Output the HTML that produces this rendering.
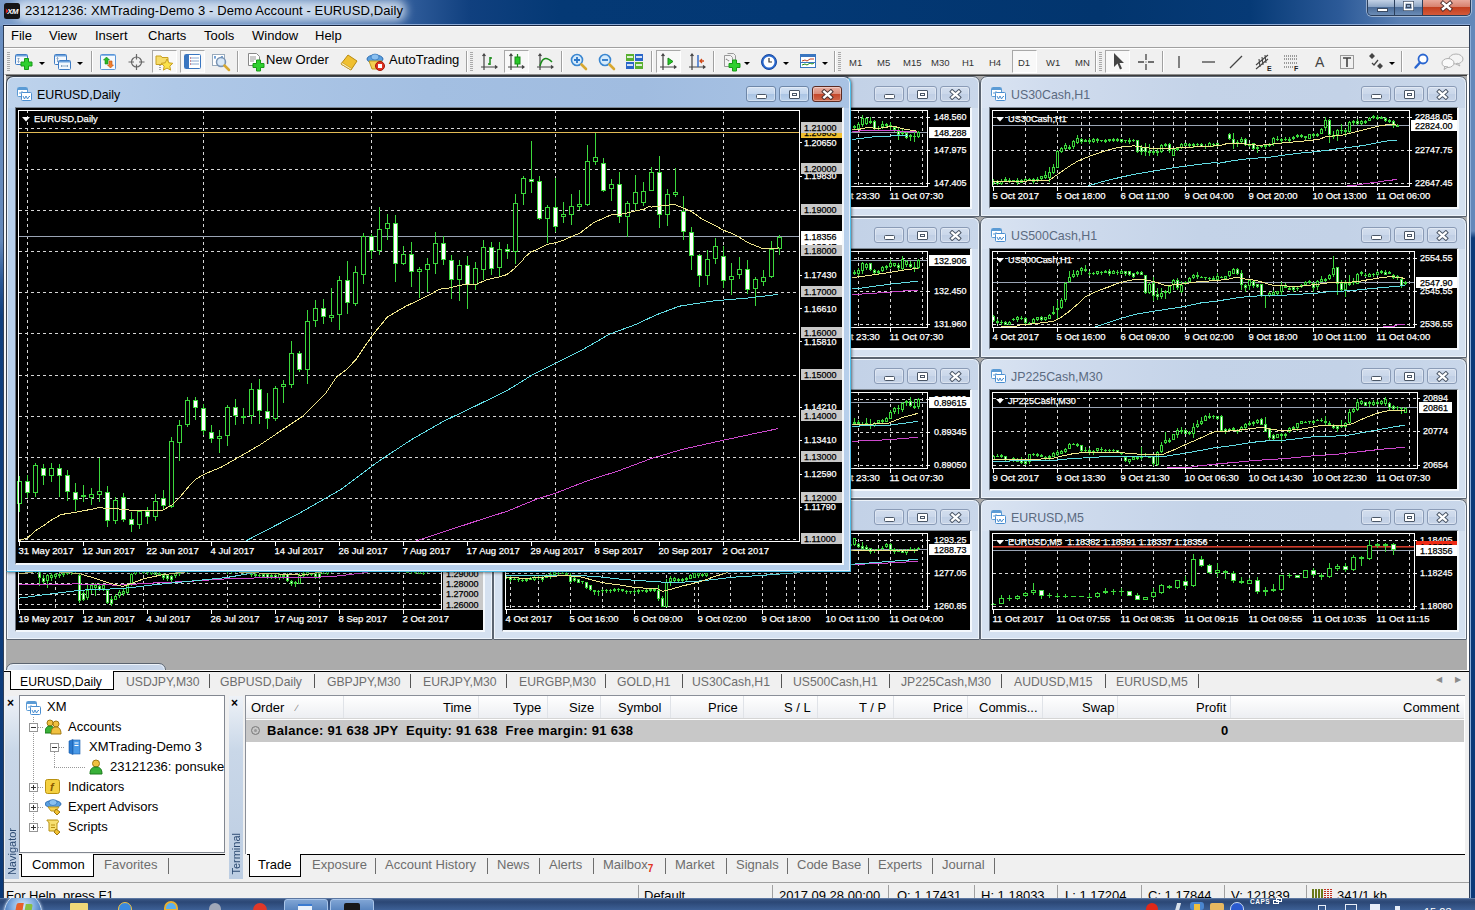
<!DOCTYPE html><html><head><meta charset="utf-8"><title>23121236: XMTrading-Demo 3 - Demo Account - EURUSD,Daily</title><style>*{box-sizing:border-box;margin:0;padding:0}
html,body{width:1475px;height:910px;overflow:hidden}
body{position:relative;font-family:"Liberation Sans",sans-serif;font-size:13px;color:#000;background:#123e7c}
#tb{position:absolute;left:0;top:0;width:1475px;height:26px;background:linear-gradient(90deg,#7a9cca 0,#6a8fc2 150px,#5880b6 300px,#34609e 400px,#10407f 470px,#043975 560px,#033874 800px,#02356e 1100px,#063a76 1250px,#2c5a98 1340px,#5a80b4 1400px,#6388ba 1475px);overflow:hidden}
#tb .bl{position:absolute;left:3px;top:24px;width:1467px;height:2px;background:linear-gradient(#8eabd6 0,#8eabd6 1px,#18253e 1px)}
#tb .glow{position:absolute;left:14px;top:0px;width:392px;height:21px;border-radius:9px;background:rgba(236,243,251,.78);filter:blur(5px)}
#tb .ico{position:absolute;left:4px;top:3px}
#tb .tt{position:absolute;left:25px;top:3px;letter-spacing:.09px;font-size:13px;line-height:16px;white-space:nowrap;color:#000}
#wb{position:absolute;left:1367px;top:0;width:104px;height:16px;border:1px solid #2b3f5c;border-top:none;border-radius:0 0 5px 5px;overflow:hidden;box-shadow:0 0 0 1px rgba(255,255,255,.45)}
#wb div{position:absolute;top:0;height:15px}
#wb .w1{left:0;width:27px;background:linear-gradient(#c3d2e6 0,#8da6c6 45%,#4c6d99 50%,#6b8cb6 100%);border-right:1px solid #2b3f5c}
#wb .w2{left:27px;width:28px;background:linear-gradient(#c3d2e6 0,#8da6c6 45%,#4c6d99 50%,#6b8cb6 100%);border-right:1px solid #2b3f5c}
#wb .w3{left:55px;width:47px;background:linear-gradient(#e9a99b 0,#d8816d 45%,#c23f1f 50%,#d4593a 100%)}
#lb{position:absolute;left:0;top:26px;width:4px;height:884px;background:linear-gradient(#6a8fc2 0,#6388ba 215px,#2a5896 255px,#0f3f7e 290px,#0c3a78 100%)}
#lb:after{content:'';position:absolute;left:3px;top:0;width:1px;height:884px;background:#2f3f58}
#rb{position:absolute;left:1469px;top:26px;width:6px;height:884px;background:linear-gradient(#6388ba 0,#6388ba 205px,#0c3a78 212px,#0c3a78 100%)}
#rb:after{content:'';position:absolute;left:0;top:0;width:2px;height:884px;background:linear-gradient(90deg,#2f3f58 0,#2f3f58 1px,#8fb0da 1px)}
#menu{position:absolute;left:4px;top:26px;width:1465px;height:22px;background:#f0f0f0;border-top:1px solid #fff;border-bottom:1px solid #a0a0a0}
#menu span{position:absolute;top:1px;line-height:16px;font-size:13px}
#tool{position:absolute;left:4px;top:48px;width:1465px;height:26px;background:#f0f0f0;border-top:1px solid #fff}
#tool .sep{position:absolute;top:2px;width:1px;height:21px;background:#a0a0a0;box-shadow:1px 0 0 #fff}
#tool .grip{position:absolute;top:3px;width:3px;height:20px;background:repeating-linear-gradient(#aaa 0,#aaa 1px,transparent 1px,transparent 2px)}
#tool .prs{position:absolute;top:1px;height:23px;border:1px solid #a8a8a8;border-right-color:#fff;border-bottom-color:#fff;background:#f8f8f8}
#tool .lbl{position:absolute;top:3px;font-size:13px;line-height:16px;white-space:nowrap}
#tool .tf{position:absolute;top:8px;font-size:9.5px;line-height:12px;color:#333;white-space:nowrap}
#tool svg{position:absolute;overflow:visible}
#tool .dd{position:absolute;top:13px;width:0;height:0;border:3px solid transparent;border-top:3px solid #000;border-bottom:none}
#mdi{position:absolute;left:4px;top:74px;width:1465px;height:596px;background:#ababab;border-top:1px solid #8c8c8c;border-left:2px solid #f6f6f6;border-right:2px solid #fff;box-shadow:inset 0 1px 0 #3c3c3c;overflow:hidden}
.cw{position:absolute;border:1px solid #5b6470;border-radius:7px 7px 1px 1px;background:linear-gradient(90deg,#dae4f2 0,#d0dcee 14%,#c4d3e8 45%,#c3d2e7 75%,#c9d7ea 100%) top/100% 31px no-repeat,#d5e1f0;box-shadow:inset 0 0 0 1px #edf3fa}
.cw.act{border-color:#39424e #4fc0ea #4fc0ea #39424e;background:linear-gradient(90deg,#bed3ec 0,#afc8e7 20%,#a3bfe2 50%,#a0bce0 75%,#a9c3e4 100%) top/100% 31px no-repeat,#b7cfeb;box-shadow:inset 0 0 0 1px #e4eefa,1px 1px 3px rgba(0,0,0,.5)}
.cwi{position:absolute;left:10px;top:9px;width:16px;height:16px}
.cwi svg{display:block}
.cwt{position:absolute;left:30px;top:10px;font-size:12.4px;line-height:16px;color:#5b6a80;white-space:nowrap}
.cw.act .cwt{color:#000}
.cb{position:absolute;top:9px;width:30px;height:16px;border:1px solid #8a9bb6;border-radius:3px;background:linear-gradient(#d3deee 0,#cad7ea 50%,#c0cfe5 51%,#c8d5e8 100%);box-shadow:inset 0 0 0 1px rgba(255,255,255,.35)}
.cw.act .cb{border-color:#6e87a8;background:linear-gradient(#d4e2f3 0,#c3d6ee 50%,#aac4e4 51%,#bcd2ec 100%)}
.cw.act .b3{border-color:#5a2a22;background:linear-gradient(#e8b0a4 0,#d98a78 50%,#c4462a 51%,#d0684c 100%)}
.b1{right:75px}.b2{right:42px}.b3{right:9px}
.main .b1{right:74px}.main .b2{right:41px}.main .b3{right:8px}
.cb i{position:absolute;display:block}
.cb .mn{left:9px;top:7px;width:11px;height:5px;border:1px solid #4a5666;background:#fff;border-radius:1.500px}
.cb .mx{left:9px;top:3px;width:11px;height:9px;border:1px solid #4a5666;background:#fff;border-radius:1px;box-shadow:inset 0 0 0 2px #fff,inset 0 0 0 3px #4a5666}
.cb svg{position:absolute;left:8px;top:2px}
.cv{position:absolute;left:8px;top:30px;right:7px;bottom:7px;background:#000;border:1px solid #6b7480;border-top-color:#7d8792;border-right:2px solid #f4f8fc;border-bottom:2px solid #f4f8fc;overflow:hidden}
.main .cv{right:6px;bottom:6px}
.cv svg{display:block;position:absolute;left:0;top:0}
svg text{font-family:"Liberation Sans",sans-serif}
#tabs{position:absolute;left:4px;top:670px;width:1465px;height:23px;background:#f0f0f0;border-top:1px solid #fff}
#tabs .line{position:absolute;left:0;top:0;width:1465px;height:1px;background:#000}
#tabs span{position:absolute;top:3px;font-size:12.2px;line-height:16px;color:#6d6d6d;white-space:nowrap}
#tabs i{position:absolute;top:3px;width:1px;height:14px;background:#555}
#tabs .at{position:absolute;left:6px;top:0;width:104px;height:19px;background:#fff;border:1px solid #000;border-top:none;}
#tabs .at span{color:#000;left:9px;top:3px}
#bot{position:absolute;left:4px;top:693px;width:1465px;height:189px;background:#f0f0f0}
.vstrip{position:absolute;top:3px;width:14px;height:183px;background:linear-gradient(#eef2f7,#c9d7e8 30%,#bccde2);}
.vstrip .x{position:absolute;left:2px;top:1px;font-size:12px;font-weight:bold;line-height:12px;color:#000}
.vstrip .vt{position:absolute;left:0;bottom:4px;width:14px;writing-mode:vertical-rl;transform:rotate(180deg);font-size:11px;color:#2c4a72;line-height:14px;white-space:nowrap}
#nav{position:absolute;left:15px;top:2px;width:206px;height:158px;background:#fff;border:1px solid #828790}
#nav .r{position:absolute;font-size:13px;line-height:16px;white-space:nowrap}
#nav svg{position:absolute}
#navtabs{position:absolute;left:15px;top:161px;width:206px;height:24px}
.btabs span{position:absolute;top:3px;font-size:13px;line-height:16px;color:#6d6d6d;white-space:nowrap}
.btabs i{position:absolute;top:4px;width:1px;height:16px;background:#6d6d6d}
.btabs .at{position:absolute;top:0;height:23px;background:#fff;border:1px solid #000;border-top:none}
.btabs .at span{color:#000;top:3px}
.btabs .ln{position:absolute;top:0;height:1px;background:#000}
#term{position:absolute;left:241px;top:2px;width:1220px;height:159px;background:#fff;border-left:1px solid #8a8f98;border-top:1px solid #8a8f98}
#term .hd{position:absolute;left:0;top:0;width:1218px;height:23px;background:linear-gradient(#fff,#f4f5f7 60%,#eceef2);border-bottom:1px solid #d5d5d5}
#term .hd span{position:absolute;top:4px;font-size:13px;line-height:16px;white-space:nowrap}
#term .hd i{position:absolute;top:0;width:1px;height:22px;background:#e0e3e8}
#term .row{position:absolute;left:0;top:24px;width:1218px;height:22px;background:#c8c8c8;font-weight:bold}
#term .row span{position:absolute;top:3px;font-size:13px;line-height:16px;white-space:pre;letter-spacing:.3px}
#termtabs{position:absolute;left:243px;top:161px;width:1218px;height:24px}
#status{position:absolute;left:4px;top:882px;width:1465px;height:16px;background:#f0f0f0;border-top:1px solid #a0a0a0;overflow:hidden}
#status span{position:absolute;top:5px;font-size:13px;line-height:16px;white-space:nowrap}
#status i{position:absolute;top:2px;width:1px;height:16px;background:#a0a0a0}
#task{position:absolute;left:0;top:898px;width:1475px;height:12px;background:linear-gradient(#7d98c0 0,#3a5684 1px,#2b4775 4px,#3d6096 100%);overflow:hidden}
#task div{position:absolute}
</style></head><body>
<div id="tb"><div class="glow"></div><div class="bl"></div><svg class="ico" width="16" height="16" viewBox="0 0 16 16"><rect width="16" height="16" rx="2.500" fill="#151517"/><path d="M1.800 5.500L4.600 8L1.800 10.500z" fill="#e02820"/><text x="8.600" y="10.800" text-anchor="middle" font-size="7.800" font-weight="bold" font-style="italic" fill="#fff" letter-spacing="-.6" font-family="Liberation Sans,sans-serif">XM</text></svg><div class="tt">23121236: XMTrading-Demo 3 - Demo Account - EURUSD,Daily</div>
<div id="wb"><div class="w1"><svg width="27" height="15"><rect x="9.5" y="8.5" width="10" height="3" fill="#fff" stroke="#3a4a62"/></svg></div><div class="w2"><svg width="28" height="15"><rect x="8.500" y="1.500" width="10" height="9" fill="none" stroke="#3a4a62"/><rect x="9.500" y="2.500" width="8" height="7" fill="none" stroke="#fff" stroke-width="1.6"/><rect x="11.500" y="4.500" width="4" height="3" fill="none" stroke="#3a4a62"/></svg></div><div class="w3"><svg width="47" height="15"><path d="M20 3 L27 9 M27 3 L20 9" stroke="#4a2a2a" stroke-width="4.200" stroke-linecap="square"/><path d="M20 3 L27 9 M27 3 L20 9" stroke="#fff" stroke-width="2.400" stroke-linecap="square"/></svg></div></div>
</div>
<div id="lb"></div><div id="rb"></div>
<div id="menu"><span style="left:7px">File</span><span style="left:45px">View</span><span style="left:91px">Insert</span><span style="left:144px">Charts</span><span style="left:200px">Tools</span><span style="left:248px">Window</span><span style="left:311px">Help</span></div>
<div id="tool"><div class="grip" style="left:3px"></div><svg style="left:11px;top:4px" width="18" height="18" viewBox="0 0 18 18"><rect x="0.5" y="1.500" width="12" height="10" rx="1" fill="#f4f8fd" stroke="#3f7cc4"/><rect x="1" y="2" width="11" height="1.500" fill="#6aa0dc"/><path d="M3.500 5v4.500M2.500 6l1-1 1 1M2.500 8.500l1 1 1-1" stroke="#7a98b8" fill="none" stroke-width=".8"/><path d="M6 9h3.500v-3.500h4v3.500h3.500v4h-3.500v3.500h-4v-3.500h-3.500z" fill="#2fd02f" stroke="#189a18" stroke-width="1"/></svg><div class="dd" style="left:35px"></div><svg style="left:50px;top:4px" width="18" height="18" viewBox="0 0 18 18"><rect x="0.5" y="1.500" width="12" height="10" rx="1" fill="#f4f8fd" stroke="#3f7cc4"/><rect x="1" y="2" width="11" height="1.500" fill="#6aa0dc"/><path d="M3.500 4.500v4M2.500 5.500l1-1 1 1M3 8.500h7M9 7.500l1 1-1 1" stroke="#7a98b8" fill="none" stroke-width=".8"/><rect x="4.500" y="7.500" width="12" height="9" rx="1" fill="#f4f8fd" stroke="#3f7cc4"/><rect x="5" y="8" width="11" height="1.500" fill="#6aa0dc"/><path d="M7 13h7M8 12l-1 1 1 1M13 12l1 1-1 1" stroke="#7a98b8" fill="none" stroke-width=".8"/></svg><div class="dd" style="left:73px"></div><div class="sep" style="left:87px"></div><svg style="left:96px;top:4px" width="18" height="18" viewBox="0 0 18 18"><rect x="0.5" y="1.500" width="15" height="15" rx="1" fill="#f4f9fe" stroke="#5a96d8"/><rect x="1" y="2" width="14" height="1" fill="#8ab6e8"/><path d="M5 11V7H3.500L6.500 4l3 3H8v4z" fill="#28b828" stroke="#158a15" stroke-width=".6"/><path d="M9 8v4H7.500l3 3 3-3H12V8z" fill="#f08030" stroke="#c05010" stroke-width=".6"/></svg><svg style="left:124px;top:4px" width="18" height="18" viewBox="0 0 18 18"><circle cx="8.500" cy="9" r="5" fill="none" stroke="#666" stroke-width="1.200"/><path d="M8.500 1v5.500M8.500 11.500v5.500M0.500 9h5.500M11 9h5.500" stroke="#666" stroke-width="1.200"/></svg><div class="prs" style="left:148px;width:25px"></div><svg style="left:151px;top:4px" width="20" height="18" viewBox="0 0 20 18"><path d="M1 3h5l1 1.500h6v7H1z" fill="#f6dc6a" stroke="#c8a020"/><path d="M5 12v5" stroke="#555" stroke-dasharray="1 1"/><path d="M12 6l1.800 3.800 4 .500-3 2.800.800 4-3.600-2-3.600 2 .800-4-3-2.800 4-.500z" fill="#fbe24a" stroke="#c8a020"/></svg><div class="prs" style="left:176px;width:25px"></div><svg style="left:180px;top:4px" width="18" height="18" viewBox="0 0 18 18"><rect x="0.5" y="1.500" width="16" height="14" rx="1" fill="#fff" stroke="#3a76c0"/><rect x="1" y="2" width="4" height="13" fill="#3a76c0"/><path d="M6 5h9M6 8h9M6 11h9" stroke="#8aa8d0"/><path d="M6 5h1M6 8h1M6 11h1" stroke="#d04040"/></svg><svg style="left:208px;top:4px" width="19" height="19" viewBox="0 0 19 19"><rect x="0.5" y="1.500" width="12" height="11" fill="#fff" stroke="#9ab"/><path d="M2 4h2M9 4h2M3 3v3M10 3v3" stroke="#4a86c8"/><circle cx="9" cy="9" r="4.500" fill="#cfe3f8" fill-opacity=".8" stroke="#7a94b4" stroke-width="1.500"/><path d="M12.500 12.500l4.500 4.500" stroke="#d8a830" stroke-width="2.500" stroke-linecap="round"/></svg><div class="sep" style="left:233px"></div><svg style="left:243px;top:3px" width="18" height="20" viewBox="0 0 18 20"><path d="M1.500 1.500h8l3 3v9h-11z" fill="#fff" stroke="#888"/><path d="M3 5h6M3 7h6M3 9h4" stroke="#999"/><path d="M6 11.500h3.500v-3.500h4v3.500h3.500v4h-3.500v3.500h-4v-3.500h-3.500z" fill="#2fd02f" stroke="#189a18"/></svg><div class="lbl" style="left:262px">New Order</div><svg style="left:336px;top:4px" width="18" height="18" viewBox="0 0 18 18"><path d="M1 11L8 2l9 6-6 9z" fill="#f0c030" stroke="#b88a10"/><path d="M1 11l10 6 .5 -1.500L2 9.500z" fill="#fff4c0" stroke="#b88a10" stroke-width=".6"/></svg><svg style="left:363px;top:4px" width="19" height="19" viewBox="0 0 19 19"><ellipse cx="8" cy="6" rx="8" ry="4" fill="#5aa0e0" stroke="#2a6ab0"/><ellipse cx="8" cy="4" rx="4" ry="3" fill="#8ac0f0" stroke="#2a6ab0" stroke-width=".6"/><path d="M2 8l3 8h7l3-8z" fill="#f4d050" stroke="#c09a20"/><circle cx="13" cy="13" r="4.500" fill="#e03020" stroke="#a01808"/><rect x="11" y="11" width="4" height="4" fill="#fff"/></svg><div class="lbl" style="left:385px">AutoTrading</div><div class="sep" style="left:462px"></div><div class="grip" style="left:466px"></div><svg style="left:477px;top:4px" width="18" height="18" viewBox="0 0 18 18"><path d="M3 1v16M0 14h16M1.500 3L3 1l1.500 2M14 12.500l2 1.500-2 1.500" fill="none" stroke="#444" stroke-width="1.200"/><path d="M9 4v8M9 5h2M7 11h2" stroke="#1a8a1a" stroke-width="1.500" fill="none"/></svg><div class="prs" style="left:500px;width:25px"></div><svg style="left:504px;top:4px" width="18" height="18" viewBox="0 0 18 18"><path d="M3 1v16M0 14h16M1.500 3L3 1l1.500 2M14 12.500l2 1.500-2 1.500" fill="none" stroke="#444" stroke-width="1.200"/><path d="M9.500 1v13" stroke="#1a8a1a" stroke-width="1.200"/><rect x="7" y="4" width="5" height="7" fill="#28c828" stroke="#1a8a1a"/></svg><svg style="left:533px;top:4px" width="18" height="18" viewBox="0 0 18 18"><path d="M3 1v16M0 14h16M1.500 3L3 1l1.500 2M14 12.500l2 1.500-2 1.500" fill="none" stroke="#444" stroke-width="1.200"/><path d="M3 13C5 5 9 3 15 9" fill="none" stroke="#1a8a1a" stroke-width="1.500"/></svg><div class="sep" style="left:557px"></div><svg style="left:566px;top:4px" width="18" height="18" viewBox="0 0 18 18"><circle cx="7" cy="7" r="5.500" fill="#d6ebfb" stroke="#3a86d0" stroke-width="1.600"/><path d="M4 7h6M7 4v6" stroke="#2a76c8" stroke-width="1.800"/><path d="M11.500 11.500l4.500 4.500" stroke="#d8a830" stroke-width="2.600" stroke-linecap="round"/></svg><svg style="left:594px;top:4px" width="18" height="18" viewBox="0 0 18 18"><circle cx="7" cy="7" r="5.500" fill="#d6ebfb" stroke="#3a86d0" stroke-width="1.600"/><path d="M4 7h6" stroke="#2a76c8" stroke-width="1.800"/><path d="M11.500 11.500l4.500 4.500" stroke="#d8a830" stroke-width="2.600" stroke-linecap="round"/></svg><svg style="left:622px;top:4px" width="18" height="18" viewBox="0 0 18 18"><rect x="0" y="1" width="8" height="7" fill="#58b030"/><rect x="9" y="1" width="8" height="7" fill="#2a66c8"/><rect x="0" y="9" width="8" height="7" fill="#2a66c8"/><rect x="9" y="9" width="8" height="7" fill="#58b030"/><path d="M1 4h6M10 4h6M1 12h6M10 12h6" stroke="#fff" stroke-width="2" stroke-opacity=".8"/></svg><div class="sep" style="left:647px"></div><div class="prs" style="left:652px;width:25px"></div><svg style="left:656px;top:4px" width="18" height="18" viewBox="0 0 18 18"><path d="M3 1v16M0 14h16M1.500 3L3 1l1.500 2M14 12.500l2 1.500-2 1.500" fill="none" stroke="#444" stroke-width="1.200"/><path d="M8 5l5 3.500-5 3.500z" fill="#28c828" stroke="#1a8a1a"/></svg><svg style="left:685px;top:4px" width="18" height="18" viewBox="0 0 18 18"><path d="M3 1v16M0 14h16M1.500 3L3 1l1.500 2M14 12.500l2 1.500-2 1.500" fill="none" stroke="#444" stroke-width="1.200"/><path d="M9 2v12" stroke="#2a66c8" stroke-width="1.400"/><path d="M15 8h-4M13 6l-2 2 2 2" stroke="#d04818" stroke-width="1.300" fill="none"/></svg><div class="sep" style="left:709px"></div><svg style="left:719px;top:3px" width="18" height="20" viewBox="0 0 18 20"><path d="M1.500 3.500h6l2 2v9h-8z" fill="#f4f4f4" stroke="#999"/><path d="M4.500 1.500h6l2 2v9" fill="none" stroke="#999"/><path d="M3 8c1-3 2 3 3 0" stroke="#777" fill="none"/><path d="M6 11.500h3.500v-3.500h4v3.500h3.500v4h-3.500v3.500h-4v-3.500h-3.500z" fill="#2fd02f" stroke="#189a18"/></svg><div class="dd" style="left:740px"></div><svg style="left:757px;top:4px" width="18" height="18" viewBox="0 0 18 18"><circle cx="8" cy="9" r="7.500" fill="#2a6ad0" stroke="#1a4aa0"/><circle cx="8" cy="9" r="5.500" fill="#fff"/><path d="M8 5v4h3" stroke="#333" fill="none" stroke-width="1.200"/></svg><div class="dd" style="left:779px"></div><svg style="left:796px;top:4px" width="18" height="18" viewBox="0 0 18 18"><rect x="0.5" y="1.500" width="15" height="13" fill="#fff" stroke="#3a76c0"/><rect x="1" y="2" width="14" height="2" fill="#3a76c0"/><path d="M2 8l3-1 2 1 3-2 4 0" stroke="#c04020" fill="none"/><path d="M2 12l3-1 2 1 3-2 2 1 2-1" stroke="#1a8a1a" fill="none"/><path d="M1 9.500h14" stroke="#3a76c0"/></svg><div class="dd" style="left:818px"></div><div class="sep" style="left:830px"></div><div class="grip" style="left:834px"></div><div class="tf" style="left:845px">M1</div><div class="tf" style="left:873px">M5</div><div class="tf" style="left:899px">M15</div><div class="tf" style="left:927px">M30</div><div class="tf" style="left:958px">H1</div><div class="tf" style="left:985px">H4</div><div class="prs" style="left:1008px;width:25px"></div><div class="tf" style="left:1014px">D1</div><div class="tf" style="left:1042px">W1</div><div class="tf" style="left:1071px">MN</div><div class="sep" style="left:1091px"></div><div class="grip" style="left:1095px"></div><div class="prs" style="left:1101px;width:25px"></div><svg style="left:1109px;top:4px" width="12" height="18" viewBox="0 0 12 18"><path d="M1 0v14l3.500-3.500 2.500 6 2-1-2.500-5.500h4.500z" fill="#444"/></svg><svg style="left:1134px;top:4px" width="18" height="18" viewBox="0 0 18 18"><path d="M8 1v6M8 11v6M0 9h6M10 9h6" stroke="#444" stroke-width="1.300"/><path d="M8 8.500v1" stroke="#444"/></svg><div class="sep" style="left:1158px"></div><svg style="left:1174px;top:4px" width="3" height="18" viewBox="0 0 3 18"><path d="M1 3v12" stroke="#444" stroke-width="1.300"/></svg><svg style="left:1198px;top:4px" width="13" height="18" viewBox="0 0 13 18"><path d="M0 9h13" stroke="#444" stroke-width="1.300"/></svg><svg style="left:1225px;top:4px" width="14" height="18" viewBox="0 0 14 18"><path d="M1 15L13 3" stroke="#444" stroke-width="1.300"/></svg><svg style="left:1251px;top:4px" width="18" height="19" viewBox="0 0 18 19"><path d="M1 12L13 2M1 16L13 6" stroke="#444" stroke-width="1.100"/><path d="M4 6l1 8M7 4l1 8M10 2l1 8" stroke="#444" stroke-width="1.100"/><text x="12" y="18" font-size="7" font-weight="bold" fill="#222">E</text></svg><svg style="left:1279px;top:4px" width="18" height="19" viewBox="0 0 18 19"><path d="M1 3h13M1 6h13M1 10h13M1 14h9" stroke="#444" stroke-dasharray="1 1"/><text x="11" y="18" font-size="7" font-weight="bold" fill="#222">F</text></svg><div class="lbl" style="left:1311px;top:5px;font-size:14px;color:#444">A</div><svg style="left:1336px;top:4px" width="15" height="18" viewBox="0 0 15 18"><rect x="0.5" y="2.500" width="13" height="13" fill="none" stroke="#444" stroke-dasharray="1 1"/><path d="M3 5h8M7 5v9" stroke="#444" stroke-width="1.600"/></svg><svg style="left:1364px;top:4px" width="16" height="18" viewBox="0 0 16 18"><path d="M4 0l3 3h-6zM4 6l-3-3h6z" fill="#444"/><path d="M12 10l3 3h-6zM12 16l-3-3h6z" fill="#444"/><path d="M4 10l2 2 4-5" stroke="#444" fill="none" stroke-width="1.300"/></svg><div class="dd" style="left:1385px"></div><div class="sep" style="left:1397px"></div><svg style="left:1410px;top:4px" width="15" height="18" viewBox="0 0 15 18"><circle cx="9" cy="6" r="4.500" fill="#fff" stroke="#2a66d0" stroke-width="1.800"/><path d="M6 9.500L1.500 14.500" stroke="#2a66d0" stroke-width="2.400" stroke-linecap="round"/></svg><svg style="left:1437px;top:4px" width="24" height="18" viewBox="0 0 24 18"><ellipse cx="15" cy="6" rx="7" ry="5" fill="#f4f4f4" stroke="#b0b0b0"/><path d="M17 10l2 3-4-2z" fill="#f4f4f4" stroke="#b0b0b0"/><ellipse cx="7" cy="10" rx="6" ry="4.500" fill="#fafafa" stroke="#b0b0b0"/><path d="M4 13.500l-1 3 4-2.500z" fill="#fafafa" stroke="#b0b0b0"/></svg></div>

<div id="mdi">
<div class="cw " style="left:487px;top:1px;width:487px;height:141px">
<div class="cwi"><svg width="16" height="16" viewBox="0 0 16 16"><rect x="0.5" y="1.500" width="10" height="9" rx="1" fill="#fff" stroke="#5b9bd5"/><rect x="1" y="2" width="9" height="2" fill="#5b9bd5"/><path d="M2 7h2l1-1.500 1 2.500 1-1h2" fill="none" stroke="#5b9bd5"/><rect x="4.500" y="6.500" width="10" height="8" rx="1" fill="#fff" stroke="#4a8ed0"/><path d="M6 10l1.500 3 1.500-3 1.500 3 1.500-2.500h1" fill="none" stroke="#4a8ed0"/></svg></div><div class="cwt">USDJPY,M30</div>
<div class="cb b1"><i class="mn"></i></div><div class="cb b2"><i class="mx"></i></div><div class="cb b3"><svg width="13" height="11" viewBox="0 0 13 11"><path d="M3.200 2.600L9.800 8.400M9.800 2.600L3.200 8.400" stroke="#4a5666" stroke-width="4.200" stroke-linecap="square"/><path d="M3.200 2.600L9.800 8.400M9.800 2.600L3.200 8.400" stroke="#fff" stroke-width="2.300" stroke-linecap="square"/></svg></div>
<div class="cv"><svg width="467" height="99" viewBox="503 108 467 99"><g shape-rendering="crispEdges" fill="none"><path d="M506 117.5H927" stroke="#d6d6d6" stroke-width="1" stroke-dasharray="3 3"/><path d="M506 150.5H927" stroke="#d6d6d6" stroke-width="1" stroke-dasharray="3 3"/><path d="M506 183.5H927" stroke="#d6d6d6" stroke-width="1" stroke-dasharray="3 3"/><path d="M538.5 111V186" stroke="#d6d6d6" stroke-width="1" stroke-dasharray="3 3" stroke-dashoffset="1"/><path d="M570.5 111V186" stroke="#d6d6d6" stroke-width="1" stroke-dasharray="3 3" stroke-dashoffset="1"/><path d="M602.5 111V186" stroke="#d6d6d6" stroke-width="1" stroke-dasharray="3 3" stroke-dashoffset="1"/><path d="M634.5 111V186" stroke="#d6d6d6" stroke-width="1" stroke-dasharray="3 3" stroke-dashoffset="1"/><path d="M666.5 111V186" stroke="#d6d6d6" stroke-width="1" stroke-dasharray="3 3" stroke-dashoffset="1"/><path d="M698.5 111V186" stroke="#d6d6d6" stroke-width="1" stroke-dasharray="3 3" stroke-dashoffset="1"/><path d="M730.5 111V186" stroke="#d6d6d6" stroke-width="1" stroke-dasharray="3 3" stroke-dashoffset="1"/><path d="M762.5 111V186" stroke="#d6d6d6" stroke-width="1" stroke-dasharray="3 3" stroke-dashoffset="1"/><path d="M794.5 111V186" stroke="#d6d6d6" stroke-width="1" stroke-dasharray="3 3" stroke-dashoffset="1"/><path d="M826.5 111V186" stroke="#d6d6d6" stroke-width="1" stroke-dasharray="3 3" stroke-dashoffset="1"/><path d="M858.5 111V186" stroke="#d6d6d6" stroke-width="1" stroke-dasharray="3 3" stroke-dashoffset="1"/><path d="M890.5 111V186" stroke="#d6d6d6" stroke-width="1" stroke-dasharray="3 3" stroke-dashoffset="1"/><path d="M922.5 111V186" stroke="#d6d6d6" stroke-width="1" stroke-dasharray="3 3" stroke-dashoffset="1"/><path d="M506 132.5H927" stroke="#9aa4b4" stroke-width="1"/></g><g shape-rendering="crispEdges"><path d="M854.5 125V129" stroke="#3cd83c"/><rect x="853.5" y="126.5" width="2" height="1" fill="#000" stroke="#3cd83c"/><path d="M858.5 122V129" stroke="#3cd83c"/><rect x="857.5" y="124.5" width="2" height="4" fill="#000" stroke="#3cd83c"/><path d="M862.5 115V127" stroke="#3cd83c"/><rect x="861.5" y="118.5" width="2" height="6" fill="#000" stroke="#3cd83c"/><path d="M866.5 118V125" stroke="#3cd83c"/><rect x="865.5" y="118.5" width="2" height="5" fill="#000" stroke="#3cd83c"/><path d="M870.5 117V124" stroke="#3cd83c"/><rect x="869.5" y="121.5" width="2" height="1" fill="#fff" stroke="#3cd83c"/><path d="M874.5 120V130" stroke="#3cd83c"/><rect x="873.5" y="121.5" width="2" height="7" fill="#fff" stroke="#3cd83c"/><path d="M878.5 126V130" stroke="#3cd83c"/><path d="M877 128.5H880" stroke="#3cd83c"/><path d="M882.5 121V129" stroke="#3cd83c"/><rect x="881.5" y="124.5" width="2" height="2" fill="#000" stroke="#3cd83c"/><path d="M886.5 123V127" stroke="#3cd83c"/><rect x="885.5" y="124.5" width="2" height="1" fill="#000" stroke="#3cd83c"/><path d="M890.5 122V130" stroke="#3cd83c"/><rect x="889.5" y="125.5" width="2" height="1" fill="#fff" stroke="#3cd83c"/><path d="M894.5 126V132" stroke="#3cd83c"/><rect x="893.5" y="127.5" width="2" height="2" fill="#fff" stroke="#3cd83c"/><path d="M898.5 127V140" stroke="#3cd83c"/><rect x="897.5" y="131.5" width="2" height="3" fill="#fff" stroke="#3cd83c"/><path d="M902.5 129V136" stroke="#3cd83c"/><rect x="901.5" y="132.5" width="2" height="1" fill="#fff" stroke="#3cd83c"/><path d="M906.5 131V139" stroke="#3cd83c"/><rect x="905.5" y="133.5" width="2" height="4" fill="#fff" stroke="#3cd83c"/><path d="M910.5 134V141" stroke="#3cd83c"/><rect x="909.5" y="135.5" width="2" height="1" fill="#fff" stroke="#3cd83c"/><path d="M914.5 131V142" stroke="#3cd83c"/><path d="M913 136.5H916" stroke="#3cd83c"/><path d="M918.5 131V138" stroke="#3cd83c"/><rect x="917.5" y="132.5" width="2" height="4" fill="#000" stroke="#3cd83c"/></g><path d="M852.34 139.37L859.53 138.68L868.76 137.3L880.3 136.14L898.75 135.91L908.28 135.57" fill="none" stroke="#62dce4" stroke-width="1.0" stroke-linejoin="round" shape-rendering="crispEdges"/><path d="M852.34 131.76L859.53 131.76" fill="none" stroke="#e87060" stroke-width="1.0" stroke-linejoin="round" shape-rendering="crispEdges"/><path d="M852.34 131.3L868.76 130.61L893.28 130.61L917.2 132.1" fill="none" stroke="#cc48cc" stroke-width="1.0" stroke-linejoin="round" shape-rendering="crispEdges"/><path d="M852.34 129.8L859.53 129.22L868.76 127.15L876.84 128.64L886.06 127.15L894.14 126.34L902.21 128.64L909.13 129.8L917.2 131.25" fill="none" stroke="#f0e68c" stroke-width="1.0" stroke-linejoin="round" shape-rendering="crispEdges"/><g shape-rendering="crispEdges" fill="none"><path d="M505.5 186.5V110.5H927.5V186.5H505.5" stroke="#fff"/></g><rect x="928" y="108" width="42" height="99" fill="#000"/><rect x="503" y="187" width="467" height="20" fill="#000"/><g shape-rendering="crispEdges"><path d="M928 117.5H930" stroke="#fff" stroke-width="1"/><text x="934" y="120.2" fill="#fff" stroke="#fff" stroke-width=".25" font-size="9">148.560</text><path d="M928 150.5H930" stroke="#fff" stroke-width="1"/><text x="934" y="153.2" fill="#fff" stroke="#fff" stroke-width=".25" font-size="9">147.975</text><path d="M928 183.5H930" stroke="#fff" stroke-width="1"/><text x="934" y="186.2" fill="#fff" stroke="#fff" stroke-width=".25" font-size="9">147.405</text><rect x="929" y="127" width="41" height="11" fill="#fff"/><text x="934" y="135.7" fill="#000" stroke="#000" stroke-width=".25" font-size="9">148.288</text><path d="M826.5 187V191" stroke="#fff" stroke-width="1"/><text x="825.5" y="198.5" fill="#fff" stroke="#fff" stroke-width=".25" font-size="9.5">10 Oct 23:30</text><path d="M890.5 187V191" stroke="#fff" stroke-width="1"/><text x="889.5" y="198.5" fill="#fff" stroke="#fff" stroke-width=".25" font-size="9.5">11 Oct 07:30</text></g></svg></div></div><div class="cw " style="left:974px;top:1px;width:487px;height:141px">
<div class="cwi"><svg width="16" height="16" viewBox="0 0 16 16"><rect x="0.5" y="1.500" width="10" height="9" rx="1" fill="#fff" stroke="#5b9bd5"/><rect x="1" y="2" width="9" height="2" fill="#5b9bd5"/><path d="M2 7h2l1-1.500 1 2.500 1-1h2" fill="none" stroke="#5b9bd5"/><rect x="4.500" y="6.500" width="10" height="8" rx="1" fill="#fff" stroke="#4a8ed0"/><path d="M6 10l1.500 3 1.500-3 1.500 3 1.500-2.500h1" fill="none" stroke="#4a8ed0"/></svg></div><div class="cwt">US30Cash,H1</div>
<div class="cb b1"><i class="mn"></i></div><div class="cb b2"><i class="mx"></i></div><div class="cb b3"><svg width="13" height="11" viewBox="0 0 13 11"><path d="M3.200 2.600L9.800 8.400M9.800 2.600L3.200 8.400" stroke="#4a5666" stroke-width="4.200" stroke-linecap="square"/><path d="M3.200 2.600L9.800 8.400M9.800 2.600L3.200 8.400" stroke="#fff" stroke-width="2.300" stroke-linecap="square"/></svg></div>
<div class="cv"><svg width="467" height="99" viewBox="990 108 467 99"><g shape-rendering="crispEdges" fill="none"><path d="M993 117.5H1409" stroke="#d6d6d6" stroke-width="1" stroke-dasharray="3 3"/><path d="M993 150.5H1409" stroke="#d6d6d6" stroke-width="1" stroke-dasharray="3 3"/><path d="M993 183.5H1409" stroke="#d6d6d6" stroke-width="1" stroke-dasharray="3 3"/><path d="M1025.5 111V186" stroke="#d6d6d6" stroke-width="1" stroke-dasharray="3 3" stroke-dashoffset="1"/><path d="M1057.5 111V186" stroke="#d6d6d6" stroke-width="1" stroke-dasharray="3 3" stroke-dashoffset="1"/><path d="M1089.5 111V186" stroke="#d6d6d6" stroke-width="1" stroke-dasharray="3 3" stroke-dashoffset="1"/><path d="M1121.5 111V186" stroke="#d6d6d6" stroke-width="1" stroke-dasharray="3 3" stroke-dashoffset="1"/><path d="M1153.5 111V186" stroke="#d6d6d6" stroke-width="1" stroke-dasharray="3 3" stroke-dashoffset="1"/><path d="M1185.5 111V186" stroke="#d6d6d6" stroke-width="1" stroke-dasharray="3 3" stroke-dashoffset="1"/><path d="M1217.5 111V186" stroke="#d6d6d6" stroke-width="1" stroke-dasharray="3 3" stroke-dashoffset="1"/><path d="M1249.5 111V186" stroke="#d6d6d6" stroke-width="1" stroke-dasharray="3 3" stroke-dashoffset="1"/><path d="M1281.5 111V186" stroke="#d6d6d6" stroke-width="1" stroke-dasharray="3 3" stroke-dashoffset="1"/><path d="M1313.5 111V186" stroke="#d6d6d6" stroke-width="1" stroke-dasharray="3 3" stroke-dashoffset="1"/><path d="M1345.5 111V186" stroke="#d6d6d6" stroke-width="1" stroke-dasharray="3 3" stroke-dashoffset="1"/><path d="M1377.5 111V186" stroke="#d6d6d6" stroke-width="1" stroke-dasharray="3 3" stroke-dashoffset="1"/><path d="M1081.5 111V186" stroke="#d6d6d6" stroke-width="1" stroke-dasharray="3 3" stroke-dashoffset="1"/><path d="M1173.5 111V186" stroke="#d6d6d6" stroke-width="1" stroke-dasharray="3 3" stroke-dashoffset="1"/><path d="M1265.5 111V186" stroke="#d6d6d6" stroke-width="1" stroke-dasharray="3 3" stroke-dashoffset="1"/><path d="M1357.5 111V186" stroke="#d6d6d6" stroke-width="1" stroke-dasharray="3 3" stroke-dashoffset="1"/><path d="M993 125.5H1409" stroke="#9aa4b4" stroke-width="1"/></g><g shape-rendering="crispEdges"><path d="M993.5 179V185" stroke="#3cd83c"/><rect x="992.5" y="181.5" width="2" height="1" fill="#000" stroke="#3cd83c"/><path d="M997.5 180V185" stroke="#3cd83c"/><rect x="996.5" y="181.5" width="2" height="2" fill="#fff" stroke="#3cd83c"/><path d="M1001.5 179V185" stroke="#3cd83c"/><rect x="1000.5" y="181.5" width="2" height="2" fill="#000" stroke="#3cd83c"/><path d="M1005.5 177V182" stroke="#3cd83c"/><rect x="1004.5" y="179.5" width="2" height="1" fill="#000" stroke="#3cd83c"/><path d="M1009.5 178V183" stroke="#3cd83c"/><path d="M1008 180.5H1011" stroke="#3cd83c"/><path d="M1013.5 180V182" stroke="#3cd83c"/><path d="M1012 180.5H1015" stroke="#3cd83c"/><path d="M1017.5 178V185" stroke="#3cd83c"/><rect x="1016.5" y="180.5" width="2" height="2" fill="#fff" stroke="#3cd83c"/><path d="M1021.5 179V183" stroke="#3cd83c"/><rect x="1020.5" y="180.5" width="2" height="2" fill="#000" stroke="#3cd83c"/><path d="M1025.5 178V182" stroke="#3cd83c"/><rect x="1024.5" y="179.5" width="2" height="2" fill="#000" stroke="#3cd83c"/><path d="M1029.5 178V181" stroke="#3cd83c"/><path d="M1028 179.5H1031" stroke="#3cd83c"/><path d="M1033.5 178V184" stroke="#3cd83c"/><rect x="1032.5" y="179.5" width="2" height="2" fill="#fff" stroke="#3cd83c"/><path d="M1037.5 177V182" stroke="#3cd83c"/><rect x="1036.5" y="179.5" width="2" height="1" fill="#000" stroke="#3cd83c"/><path d="M1041.5 176V180" stroke="#3cd83c"/><rect x="1040.5" y="176.5" width="2" height="2" fill="#000" stroke="#3cd83c"/><path d="M1045.5 171V179" stroke="#3cd83c"/><rect x="1044.5" y="175.5" width="2" height="2" fill="#000" stroke="#3cd83c"/><path d="M1049.5 167V182" stroke="#3cd83c"/><rect x="1048.5" y="172.5" width="2" height="5" fill="#000" stroke="#3cd83c"/><path d="M1053.5 164V174" stroke="#3cd83c"/><rect x="1052.5" y="167.5" width="2" height="5" fill="#000" stroke="#3cd83c"/><path d="M1057.5 150V168" stroke="#3cd83c"/><rect x="1056.5" y="151.5" width="2" height="16" fill="#000" stroke="#3cd83c"/><path d="M1061.5 147V153" stroke="#3cd83c"/><rect x="1060.5" y="148.5" width="2" height="3" fill="#000" stroke="#3cd83c"/><path d="M1065.5 143V150" stroke="#3cd83c"/><rect x="1064.5" y="145.5" width="2" height="3" fill="#000" stroke="#3cd83c"/><path d="M1069.5 145V150" stroke="#3cd83c"/><rect x="1068.5" y="147.5" width="2" height="1" fill="#fff" stroke="#3cd83c"/><path d="M1073.5 140V149" stroke="#3cd83c"/><rect x="1072.5" y="141.5" width="2" height="5" fill="#000" stroke="#3cd83c"/><path d="M1077.5 135V144" stroke="#3cd83c"/><rect x="1076.5" y="138.5" width="2" height="4" fill="#000" stroke="#3cd83c"/><path d="M1081.5 138V144" stroke="#3cd83c"/><rect x="1080.5" y="139.5" width="2" height="2" fill="#fff" stroke="#3cd83c"/><path d="M1085.5 139V142" stroke="#3cd83c"/><rect x="1084.5" y="140.5" width="2" height="1" fill="#000" stroke="#3cd83c"/><path d="M1089.5 138V144" stroke="#3cd83c"/><rect x="1088.5" y="140.5" width="2" height="1" fill="#000" stroke="#3cd83c"/><path d="M1093.5 138V143" stroke="#3cd83c"/><rect x="1092.5" y="139.5" width="2" height="2" fill="#000" stroke="#3cd83c"/><path d="M1097.5 138V143" stroke="#3cd83c"/><rect x="1096.5" y="139.5" width="2" height="1" fill="#000" stroke="#3cd83c"/><path d="M1101.5 140V142" stroke="#3cd83c"/><path d="M1100 140.5H1103" stroke="#3cd83c"/><path d="M1105.5 139V143" stroke="#3cd83c"/><rect x="1104.5" y="140.5" width="2" height="1" fill="#000" stroke="#3cd83c"/><path d="M1109.5 139V142" stroke="#3cd83c"/><rect x="1108.5" y="139.5" width="2" height="1" fill="#000" stroke="#3cd83c"/><path d="M1113.5 138V142" stroke="#3cd83c"/><rect x="1112.5" y="139.5" width="2" height="1" fill="#000" stroke="#3cd83c"/><path d="M1117.5 138V142" stroke="#3cd83c"/><rect x="1116.5" y="139.5" width="2" height="1" fill="#000" stroke="#3cd83c"/><path d="M1121.5 139V143" stroke="#3cd83c"/><rect x="1120.5" y="139.5" width="2" height="2" fill="#fff" stroke="#3cd83c"/><path d="M1125.5 140V143" stroke="#3cd83c"/><path d="M1124 140.5H1127" stroke="#3cd83c"/><path d="M1129.5 138V144" stroke="#3cd83c"/><rect x="1128.5" y="140.5" width="2" height="1" fill="#000" stroke="#3cd83c"/><path d="M1133.5 139V142" stroke="#3cd83c"/><path d="M1132 140.5H1135" stroke="#3cd83c"/><path d="M1137.5 140V153" stroke="#3cd83c"/><rect x="1136.5" y="140.5" width="2" height="11" fill="#fff" stroke="#3cd83c"/><path d="M1141.5 145V155" stroke="#3cd83c"/><rect x="1140.5" y="147.5" width="2" height="4" fill="#fff" stroke="#3cd83c"/><path d="M1145.5 143V156" stroke="#3cd83c"/><rect x="1144.5" y="147.5" width="2" height="4" fill="#fff" stroke="#3cd83c"/><path d="M1149.5 144V156" stroke="#3cd83c"/><rect x="1148.5" y="151.5" width="2" height="1" fill="#fff" stroke="#3cd83c"/><path d="M1153.5 149V155" stroke="#3cd83c"/><rect x="1152.5" y="151.5" width="2" height="1" fill="#000" stroke="#3cd83c"/><path d="M1157.5 149V156" stroke="#3cd83c"/><rect x="1156.5" y="151.5" width="2" height="1" fill="#000" stroke="#3cd83c"/><path d="M1161.5 144V153" stroke="#3cd83c"/><rect x="1160.5" y="145.5" width="2" height="6" fill="#000" stroke="#3cd83c"/><path d="M1165.5 143V147" stroke="#3cd83c"/><rect x="1164.5" y="144.5" width="2" height="1" fill="#000" stroke="#3cd83c"/><path d="M1169.5 143V153" stroke="#3cd83c"/><rect x="1168.5" y="144.5" width="2" height="6" fill="#fff" stroke="#3cd83c"/><path d="M1173.5 148V156" stroke="#3cd83c"/><rect x="1172.5" y="149.5" width="2" height="6" fill="#000" stroke="#3cd83c"/><path d="M1177.5 147V151" stroke="#3cd83c"/><rect x="1176.5" y="148.5" width="2" height="1" fill="#000" stroke="#3cd83c"/><path d="M1181.5 143V149" stroke="#3cd83c"/><rect x="1180.5" y="144.5" width="2" height="3" fill="#000" stroke="#3cd83c"/><path d="M1185.5 143V146" stroke="#3cd83c"/><rect x="1184.5" y="143.5" width="2" height="2" fill="#000" stroke="#3cd83c"/><path d="M1189.5 143V147" stroke="#3cd83c"/><rect x="1188.5" y="144.5" width="2" height="1" fill="#000" stroke="#3cd83c"/><path d="M1193.5 143V148" stroke="#3cd83c"/><rect x="1192.5" y="144.5" width="2" height="1" fill="#fff" stroke="#3cd83c"/><path d="M1197.5 143V146" stroke="#3cd83c"/><path d="M1196 144.5H1199" stroke="#3cd83c"/><path d="M1201.5 143V147" stroke="#3cd83c"/><rect x="1200.5" y="144.5" width="2" height="2" fill="#fff" stroke="#3cd83c"/><path d="M1205.5 144V149" stroke="#3cd83c"/><path d="M1204 146.5H1207" stroke="#3cd83c"/><path d="M1209.5 142V147" stroke="#3cd83c"/><rect x="1208.5" y="143.5" width="2" height="3" fill="#000" stroke="#3cd83c"/><path d="M1213.5 143V147" stroke="#3cd83c"/><path d="M1212 144.5H1215" stroke="#3cd83c"/><path d="M1217.5 143V147" stroke="#3cd83c"/><rect x="1216.5" y="143.5" width="2" height="2" fill="#fff" stroke="#3cd83c"/><path d="M1229.5 133V140" stroke="#3cd83c"/><rect x="1228.5" y="134.5" width="2" height="4" fill="#fff" stroke="#3cd83c"/><path d="M1233.5 133V149" stroke="#3cd83c"/><rect x="1232.5" y="139.5" width="2" height="4" fill="#fff" stroke="#3cd83c"/><path d="M1237.5 140V147" stroke="#3cd83c"/><rect x="1236.5" y="142.5" width="2" height="1" fill="#fff" stroke="#3cd83c"/><path d="M1241.5 137V144" stroke="#3cd83c"/><rect x="1240.5" y="139.5" width="2" height="2" fill="#000" stroke="#3cd83c"/><path d="M1245.5 138V146" stroke="#3cd83c"/><rect x="1244.5" y="139.5" width="2" height="5" fill="#fff" stroke="#3cd83c"/><path d="M1249.5 143V147" stroke="#3cd83c"/><rect x="1248.5" y="144.5" width="2" height="1" fill="#fff" stroke="#3cd83c"/><path d="M1253.5 143V150" stroke="#3cd83c"/><rect x="1252.5" y="143.5" width="2" height="5" fill="#fff" stroke="#3cd83c"/><path d="M1257.5 146V153" stroke="#3cd83c"/><rect x="1256.5" y="147.5" width="2" height="1" fill="#fff" stroke="#3cd83c"/><path d="M1261.5 145V148" stroke="#3cd83c"/><rect x="1260.5" y="145.5" width="2" height="1" fill="#000" stroke="#3cd83c"/><path d="M1265.5 144V149" stroke="#3cd83c"/><rect x="1264.5" y="145.5" width="2" height="1" fill="#000" stroke="#3cd83c"/><path d="M1269.5 143V147" stroke="#3cd83c"/><rect x="1268.5" y="144.5" width="2" height="1" fill="#000" stroke="#3cd83c"/><path d="M1273.5 137V146" stroke="#3cd83c"/><rect x="1272.5" y="138.5" width="2" height="5" fill="#000" stroke="#3cd83c"/><path d="M1277.5 136V141" stroke="#3cd83c"/><path d="M1276 139.5H1279" stroke="#3cd83c"/><path d="M1281.5 138V143" stroke="#3cd83c"/><rect x="1280.5" y="139.5" width="2" height="1" fill="#fff" stroke="#3cd83c"/><path d="M1285.5 137V141" stroke="#3cd83c"/><path d="M1284 139.5H1287" stroke="#3cd83c"/><path d="M1289.5 137V142" stroke="#3cd83c"/><rect x="1288.5" y="139.5" width="2" height="1" fill="#000" stroke="#3cd83c"/><path d="M1293.5 136V140" stroke="#3cd83c"/><rect x="1292.5" y="137.5" width="2" height="1" fill="#000" stroke="#3cd83c"/><path d="M1297.5 134V138" stroke="#3cd83c"/><rect x="1296.5" y="135.5" width="2" height="1" fill="#000" stroke="#3cd83c"/><path d="M1301.5 134V138" stroke="#3cd83c"/><rect x="1300.5" y="135.5" width="2" height="1" fill="#000" stroke="#3cd83c"/><path d="M1305.5 136V141" stroke="#3cd83c"/><rect x="1304.5" y="136.5" width="2" height="1" fill="#fff" stroke="#3cd83c"/><path d="M1309.5 134V139" stroke="#3cd83c"/><rect x="1308.5" y="134.5" width="2" height="4" fill="#000" stroke="#3cd83c"/><path d="M1313.5 133V138" stroke="#3cd83c"/><rect x="1312.5" y="134.5" width="2" height="1" fill="#000" stroke="#3cd83c"/><path d="M1317.5 133V137" stroke="#3cd83c"/><rect x="1316.5" y="134.5" width="2" height="1" fill="#000" stroke="#3cd83c"/><path d="M1321.5 128V134" stroke="#3cd83c"/><rect x="1320.5" y="129.5" width="2" height="4" fill="#000" stroke="#3cd83c"/><path d="M1325.5 117V131" stroke="#3cd83c"/><rect x="1324.5" y="120.5" width="2" height="7" fill="#000" stroke="#3cd83c"/><path d="M1329.5 119V143" stroke="#3cd83c"/><rect x="1328.5" y="120.5" width="2" height="14" fill="#fff" stroke="#3cd83c"/><path d="M1333.5 131V139" stroke="#3cd83c"/><rect x="1332.5" y="135.5" width="2" height="1" fill="#fff" stroke="#3cd83c"/><path d="M1337.5 129V141" stroke="#3cd83c"/><rect x="1336.5" y="130.5" width="2" height="4" fill="#000" stroke="#3cd83c"/><path d="M1341.5 124V134" stroke="#3cd83c"/><path d="M1340 130.5H1343" stroke="#3cd83c"/><path d="M1345.5 129V136" stroke="#3cd83c"/><rect x="1344.5" y="130.5" width="2" height="1" fill="#fff" stroke="#3cd83c"/><path d="M1349.5 121V133" stroke="#3cd83c"/><rect x="1348.5" y="122.5" width="2" height="9" fill="#000" stroke="#3cd83c"/><path d="M1353.5 120V125" stroke="#3cd83c"/><rect x="1352.5" y="121.5" width="2" height="1" fill="#000" stroke="#3cd83c"/><path d="M1357.5 119V125" stroke="#3cd83c"/><rect x="1356.5" y="121.5" width="2" height="2" fill="#fff" stroke="#3cd83c"/><path d="M1361.5 120V125" stroke="#3cd83c"/><rect x="1360.5" y="121.5" width="2" height="2" fill="#000" stroke="#3cd83c"/><path d="M1365.5 120V124" stroke="#3cd83c"/><rect x="1364.5" y="121.5" width="2" height="1" fill="#000" stroke="#3cd83c"/><path d="M1369.5 117V121" stroke="#3cd83c"/><rect x="1368.5" y="118.5" width="2" height="2" fill="#000" stroke="#3cd83c"/><path d="M1373.5 115V119" stroke="#3cd83c"/><rect x="1372.5" y="116.5" width="2" height="1" fill="#000" stroke="#3cd83c"/><path d="M1377.5 115V120" stroke="#3cd83c"/><rect x="1376.5" y="117.5" width="2" height="1" fill="#fff" stroke="#3cd83c"/><path d="M1381.5 116V119" stroke="#3cd83c"/><rect x="1380.5" y="117.5" width="2" height="1" fill="#000" stroke="#3cd83c"/><path d="M1385.5 117V122" stroke="#3cd83c"/><rect x="1384.5" y="118.5" width="2" height="2" fill="#fff" stroke="#3cd83c"/><path d="M1389.5 119V123" stroke="#3cd83c"/><rect x="1388.5" y="120.5" width="2" height="1" fill="#fff" stroke="#3cd83c"/><path d="M1393.5 120V128" stroke="#3cd83c"/><rect x="1392.5" y="121.5" width="2" height="4" fill="#fff" stroke="#3cd83c"/><path d="M1397.5 124V127" stroke="#3cd83c"/><rect x="1396.5" y="125.5" width="2" height="1" fill="#fff" stroke="#3cd83c"/></g><path d="M1347.35 185.73L1357.93 184.91L1367.69 183.29L1377.45 182.15L1387.22 180.52L1397.28 179.54" fill="none" stroke="#cc48cc" stroke-width="1.0" stroke-linejoin="round" shape-rendering="crispEdges"/><path d="M1087.25 186.35L1101.9 181.66L1121.42 177.1L1134.44 174.31L1153.64 171.08L1173.49 167.83L1185.36 166.2L1199.52 164.25L1215.79 162.46L1218.3 163.25L1234.27 160.51L1250.54 158.39L1266.81 157.58L1283.08 155.3L1299.35 153.19L1313.51 151.88L1331.9 149.61L1348.17 147.49L1364.44 145.35L1380.71 142.12L1388.84 140.66L1397.28 140.49" fill="none" stroke="#62dce4" stroke-width="1.0" stroke-linejoin="round" shape-rendering="crispEdges"/><path d="M992.88 181.66L1020.54 181.17L1048.2 180.52L1053.08 177.59L1061.22 171.9L1069.35 166.2L1077.49 161.32L1085.62 157.74L1093.76 154.81L1101.9 151.88L1110.33 149.44L1118.17 147.49L1126.3 146.35L1134.44 145.86L1150.71 148.28L1167.28 148.63L1183.25 147.49L1199.52 146.68L1215.79 145.86L1218.3 145.86L1227.76 143.42L1239.15 143.75L1250.54 144.24L1258.68 145.35L1266.81 144.72L1275.25 143.75L1286.34 142.61L1299.35 141.47L1309.12 140.49L1318.88 139.36L1325.39 136.91L1331.9 136.1L1341.66 135.29L1348.17 133.66L1357.93 131.22L1367.69 128.78L1377.45 126.34L1387.22 124.71L1392.91 124.39L1397.47 125.2" fill="none" stroke="#f0e68c" stroke-width="1.0" stroke-linejoin="round" shape-rendering="crispEdges"/><g shape-rendering="crispEdges" fill="none"><path d="M992.5 186.5V110.5H1409.5V186.5H992.5" stroke="#fff"/></g><rect x="1410" y="108" width="47" height="99" fill="#000"/><rect x="990" y="187" width="467" height="20" fill="#000"/><g shape-rendering="crispEdges"><path d="M1410 117.5H1412" stroke="#fff" stroke-width="1"/><text x="1415" y="120.2" fill="#fff" stroke="#fff" stroke-width=".25" font-size="9">22848.05</text><path d="M1410 150.5H1412" stroke="#fff" stroke-width="1"/><text x="1415" y="153.2" fill="#fff" stroke="#fff" stroke-width=".25" font-size="9">22747.75</text><path d="M1410 183.5H1412" stroke="#fff" stroke-width="1"/><text x="1415" y="186.2" fill="#fff" stroke="#fff" stroke-width=".25" font-size="9">22647.45</text><rect x="1411" y="120" width="46" height="11" fill="#fff"/><text x="1415" y="128.7" fill="#000" stroke="#000" stroke-width=".25" font-size="9">22824.00</text><path d="M993.5 187V191" stroke="#fff" stroke-width="1"/><text x="992.5" y="198.5" fill="#fff" stroke="#fff" stroke-width=".25" font-size="9.5">5 Oct 2017</text><path d="M1057.5 187V191" stroke="#fff" stroke-width="1"/><text x="1056.5" y="198.5" fill="#fff" stroke="#fff" stroke-width=".25" font-size="9.5">5 Oct 18:00</text><path d="M1121.5 187V191" stroke="#fff" stroke-width="1"/><text x="1120.5" y="198.5" fill="#fff" stroke="#fff" stroke-width=".25" font-size="9.5">6 Oct 11:00</text><path d="M1185.5 187V191" stroke="#fff" stroke-width="1"/><text x="1184.5" y="198.5" fill="#fff" stroke="#fff" stroke-width=".25" font-size="9.5">9 Oct 04:00</text><path d="M1249.5 187V191" stroke="#fff" stroke-width="1"/><text x="1248.5" y="198.5" fill="#fff" stroke="#fff" stroke-width=".25" font-size="9.5">9 Oct 20:00</text><path d="M1313.5 187V191" stroke="#fff" stroke-width="1"/><text x="1312.5" y="198.5" fill="#fff" stroke="#fff" stroke-width=".25" font-size="9.5">10 Oct 13:00</text><path d="M1377.5 187V191" stroke="#fff" stroke-width="1"/><text x="1376.5" y="198.5" fill="#fff" stroke="#fff" stroke-width=".25" font-size="9.5">11 Oct 06:00</text></g><path d="M996 117h8l-4 4.500z" fill="#fff" shape-rendering="geometricPrecision"/><text x="1008" y="121.5" fill="#fff" stroke="#fff" stroke-width=".25" font-size="9.2">US30Cash,H1</text></svg></div></div><div class="cw " style="left:0px;top:142px;width:487px;height:141px">
<div class="cwi"><svg width="16" height="16" viewBox="0 0 16 16"><rect x="0.5" y="1.500" width="10" height="9" rx="1" fill="#fff" stroke="#5b9bd5"/><rect x="1" y="2" width="9" height="2" fill="#5b9bd5"/><path d="M2 7h2l1-1.500 1 2.500 1-1h2" fill="none" stroke="#5b9bd5"/><rect x="4.500" y="6.500" width="10" height="8" rx="1" fill="#fff" stroke="#4a8ed0"/><path d="M6 10l1.500 3 1.500-3 1.500 3 1.500-2.500h1" fill="none" stroke="#4a8ed0"/></svg></div><div class="cwt">GBPUSD,Daily</div>
<div class="cb b1"><i class="mn"></i></div><div class="cb b2"><i class="mx"></i></div><div class="cb b3"><svg width="13" height="11" viewBox="0 0 13 11"><path d="M3.200 2.600L9.800 8.400M9.800 2.600L3.200 8.400" stroke="#4a5666" stroke-width="4.200" stroke-linecap="square"/><path d="M3.200 2.600L9.800 8.400M9.800 2.600L3.200 8.400" stroke="#fff" stroke-width="2.300" stroke-linecap="square"/></svg></div>
<div class="cv"></div></div><div class="cw " style="left:487px;top:142px;width:487px;height:141px">
<div class="cwi"><svg width="16" height="16" viewBox="0 0 16 16"><rect x="0.5" y="1.500" width="10" height="9" rx="1" fill="#fff" stroke="#5b9bd5"/><rect x="1" y="2" width="9" height="2" fill="#5b9bd5"/><path d="M2 7h2l1-1.500 1 2.500 1-1h2" fill="none" stroke="#5b9bd5"/><rect x="4.500" y="6.500" width="10" height="8" rx="1" fill="#fff" stroke="#4a8ed0"/><path d="M6 10l1.500 3 1.500-3 1.500 3 1.500-2.500h1" fill="none" stroke="#4a8ed0"/></svg></div><div class="cwt">GBPJPY,M30</div>
<div class="cb b1"><i class="mn"></i></div><div class="cb b2"><i class="mx"></i></div><div class="cb b3"><svg width="13" height="11" viewBox="0 0 13 11"><path d="M3.200 2.600L9.800 8.400M9.800 2.600L3.200 8.400" stroke="#4a5666" stroke-width="4.200" stroke-linecap="square"/><path d="M3.200 2.600L9.800 8.400M9.800 2.600L3.200 8.400" stroke="#fff" stroke-width="2.300" stroke-linecap="square"/></svg></div>
<div class="cv"><svg width="467" height="99" viewBox="503 249 467 99"><g shape-rendering="crispEdges" fill="none"><path d="M506 258.5H927" stroke="#d6d6d6" stroke-width="1" stroke-dasharray="3 3"/><path d="M506 291.5H927" stroke="#d6d6d6" stroke-width="1" stroke-dasharray="3 3"/><path d="M506 324.5H927" stroke="#d6d6d6" stroke-width="1" stroke-dasharray="3 3"/><path d="M538.5 252V327" stroke="#d6d6d6" stroke-width="1" stroke-dasharray="3 3" stroke-dashoffset="1"/><path d="M570.5 252V327" stroke="#d6d6d6" stroke-width="1" stroke-dasharray="3 3" stroke-dashoffset="1"/><path d="M602.5 252V327" stroke="#d6d6d6" stroke-width="1" stroke-dasharray="3 3" stroke-dashoffset="1"/><path d="M634.5 252V327" stroke="#d6d6d6" stroke-width="1" stroke-dasharray="3 3" stroke-dashoffset="1"/><path d="M666.5 252V327" stroke="#d6d6d6" stroke-width="1" stroke-dasharray="3 3" stroke-dashoffset="1"/><path d="M698.5 252V327" stroke="#d6d6d6" stroke-width="1" stroke-dasharray="3 3" stroke-dashoffset="1"/><path d="M730.5 252V327" stroke="#d6d6d6" stroke-width="1" stroke-dasharray="3 3" stroke-dashoffset="1"/><path d="M762.5 252V327" stroke="#d6d6d6" stroke-width="1" stroke-dasharray="3 3" stroke-dashoffset="1"/><path d="M794.5 252V327" stroke="#d6d6d6" stroke-width="1" stroke-dasharray="3 3" stroke-dashoffset="1"/><path d="M826.5 252V327" stroke="#d6d6d6" stroke-width="1" stroke-dasharray="3 3" stroke-dashoffset="1"/><path d="M858.5 252V327" stroke="#d6d6d6" stroke-width="1" stroke-dasharray="3 3" stroke-dashoffset="1"/><path d="M890.5 252V327" stroke="#d6d6d6" stroke-width="1" stroke-dasharray="3 3" stroke-dashoffset="1"/><path d="M922.5 252V327" stroke="#d6d6d6" stroke-width="1" stroke-dasharray="3 3" stroke-dashoffset="1"/><path d="M506 260.5H927" stroke="#9aa4b4" stroke-width="1"/></g><g shape-rendering="crispEdges"><path d="M854.5 270V275" stroke="#3cd83c"/><rect x="853.5" y="272.5" width="2" height="1" fill="#000" stroke="#3cd83c"/><path d="M858.5 268V277" stroke="#3cd83c"/><rect x="857.5" y="270.5" width="2" height="3" fill="#000" stroke="#3cd83c"/><path d="M862.5 262V274" stroke="#3cd83c"/><rect x="861.5" y="263.5" width="2" height="7" fill="#000" stroke="#3cd83c"/><path d="M866.5 263V270" stroke="#3cd83c"/><rect x="865.5" y="264.5" width="2" height="3" fill="#000" stroke="#3cd83c"/><path d="M870.5 263V271" stroke="#3cd83c"/><rect x="869.5" y="263.5" width="2" height="6" fill="#fff" stroke="#3cd83c"/><path d="M874.5 269V274" stroke="#3cd83c"/><rect x="873.5" y="270.5" width="2" height="2" fill="#fff" stroke="#3cd83c"/><path d="M878.5 270V274" stroke="#3cd83c"/><rect x="877.5" y="271.5" width="2" height="1" fill="#fff" stroke="#3cd83c"/><path d="M882.5 266V272" stroke="#3cd83c"/><rect x="881.5" y="267.5" width="2" height="3" fill="#000" stroke="#3cd83c"/><path d="M886.5 265V270" stroke="#3cd83c"/><rect x="885.5" y="266.5" width="2" height="1" fill="#000" stroke="#3cd83c"/><path d="M890.5 259V268" stroke="#3cd83c"/><rect x="889.5" y="263.5" width="2" height="3" fill="#000" stroke="#3cd83c"/><path d="M894.5 263V267" stroke="#3cd83c"/><rect x="893.5" y="263.5" width="2" height="2" fill="#000" stroke="#3cd83c"/><path d="M898.5 263V271" stroke="#3cd83c"/><rect x="897.5" y="265.5" width="2" height="2" fill="#fff" stroke="#3cd83c"/><path d="M902.5 256V270" stroke="#3cd83c"/><rect x="901.5" y="259.5" width="2" height="9" fill="#000" stroke="#3cd83c"/><path d="M906.5 260V267" stroke="#3cd83c"/><rect x="905.5" y="261.5" width="2" height="3" fill="#000" stroke="#3cd83c"/><path d="M910.5 261V268" stroke="#3cd83c"/><rect x="909.5" y="264.5" width="2" height="2" fill="#fff" stroke="#3cd83c"/><path d="M914.5 262V272" stroke="#3cd83c"/><rect x="913.5" y="267.5" width="2" height="1" fill="#fff" stroke="#3cd83c"/><path d="M918.5 259V269" stroke="#3cd83c"/><rect x="917.5" y="260.5" width="2" height="7" fill="#000" stroke="#3cd83c"/></g><path d="M852.34 294.44L858.38 294.21L890.68 292.14L905.67 290.75L918.13 290.75" fill="none" stroke="#cc48cc" stroke-width="1.0" stroke-linejoin="round" shape-rendering="crispEdges"/><path d="M852.34 288.68L858.38 288.45L890.68 284.06L918.13 281.18" fill="none" stroke="#62dce4" stroke-width="1.0" stroke-linejoin="round" shape-rendering="crispEdges"/><path d="M852.34 277.37L858.38 276.91L890.68 272.3L902.21 270.29L918.13 268.15" fill="none" stroke="#f0e68c" stroke-width="1.0" stroke-linejoin="round" shape-rendering="crispEdges"/><g shape-rendering="crispEdges" fill="none"><path d="M505.5 327.5V251.5H927.5V327.5H505.5" stroke="#fff"/></g><rect x="928" y="249" width="42" height="99" fill="#000"/><rect x="503" y="328" width="467" height="20" fill="#000"/><g shape-rendering="crispEdges"><path d="M928 291.5H930" stroke="#fff" stroke-width="1"/><text x="934" y="294.2" fill="#fff" stroke="#fff" stroke-width=".25" font-size="9">132.450</text><path d="M928 324.5H930" stroke="#fff" stroke-width="1"/><text x="934" y="327.2" fill="#fff" stroke="#fff" stroke-width=".25" font-size="9">131.960</text><rect x="929" y="255" width="41" height="11" fill="#fff"/><text x="934" y="263.7" fill="#000" stroke="#000" stroke-width=".25" font-size="9">132.906</text><path d="M826.5 328V332" stroke="#fff" stroke-width="1"/><text x="825.5" y="339.5" fill="#fff" stroke="#fff" stroke-width=".25" font-size="9.5">10 Oct 23:30</text><path d="M890.5 328V332" stroke="#fff" stroke-width="1"/><text x="889.5" y="339.5" fill="#fff" stroke="#fff" stroke-width=".25" font-size="9.5">11 Oct 07:30</text></g></svg></div></div><div class="cw " style="left:974px;top:142px;width:487px;height:141px">
<div class="cwi"><svg width="16" height="16" viewBox="0 0 16 16"><rect x="0.5" y="1.500" width="10" height="9" rx="1" fill="#fff" stroke="#5b9bd5"/><rect x="1" y="2" width="9" height="2" fill="#5b9bd5"/><path d="M2 7h2l1-1.500 1 2.500 1-1h2" fill="none" stroke="#5b9bd5"/><rect x="4.500" y="6.500" width="10" height="8" rx="1" fill="#fff" stroke="#4a8ed0"/><path d="M6 10l1.500 3 1.500-3 1.500 3 1.500-2.500h1" fill="none" stroke="#4a8ed0"/></svg></div><div class="cwt">US500Cash,H1</div>
<div class="cb b1"><i class="mn"></i></div><div class="cb b2"><i class="mx"></i></div><div class="cb b3"><svg width="13" height="11" viewBox="0 0 13 11"><path d="M3.200 2.600L9.800 8.400M9.800 2.600L3.200 8.400" stroke="#4a5666" stroke-width="4.200" stroke-linecap="square"/><path d="M3.200 2.600L9.800 8.400M9.800 2.600L3.200 8.400" stroke="#fff" stroke-width="2.300" stroke-linecap="square"/></svg></div>
<div class="cv"><svg width="467" height="99" viewBox="990 249 467 99"><g shape-rendering="crispEdges" fill="none"><path d="M993 258.5H1414" stroke="#d6d6d6" stroke-width="1" stroke-dasharray="3 3"/><path d="M993 291.5H1414" stroke="#d6d6d6" stroke-width="1" stroke-dasharray="3 3"/><path d="M993 324.5H1414" stroke="#d6d6d6" stroke-width="1" stroke-dasharray="3 3"/><path d="M1025.5 252V327" stroke="#d6d6d6" stroke-width="1" stroke-dasharray="3 3" stroke-dashoffset="1"/><path d="M1057.5 252V327" stroke="#d6d6d6" stroke-width="1" stroke-dasharray="3 3" stroke-dashoffset="1"/><path d="M1089.5 252V327" stroke="#d6d6d6" stroke-width="1" stroke-dasharray="3 3" stroke-dashoffset="1"/><path d="M1121.5 252V327" stroke="#d6d6d6" stroke-width="1" stroke-dasharray="3 3" stroke-dashoffset="1"/><path d="M1153.5 252V327" stroke="#d6d6d6" stroke-width="1" stroke-dasharray="3 3" stroke-dashoffset="1"/><path d="M1185.5 252V327" stroke="#d6d6d6" stroke-width="1" stroke-dasharray="3 3" stroke-dashoffset="1"/><path d="M1217.5 252V327" stroke="#d6d6d6" stroke-width="1" stroke-dasharray="3 3" stroke-dashoffset="1"/><path d="M1249.5 252V327" stroke="#d6d6d6" stroke-width="1" stroke-dasharray="3 3" stroke-dashoffset="1"/><path d="M1281.5 252V327" stroke="#d6d6d6" stroke-width="1" stroke-dasharray="3 3" stroke-dashoffset="1"/><path d="M1313.5 252V327" stroke="#d6d6d6" stroke-width="1" stroke-dasharray="3 3" stroke-dashoffset="1"/><path d="M1345.5 252V327" stroke="#d6d6d6" stroke-width="1" stroke-dasharray="3 3" stroke-dashoffset="1"/><path d="M1377.5 252V327" stroke="#d6d6d6" stroke-width="1" stroke-dasharray="3 3" stroke-dashoffset="1"/><path d="M1409.5 252V327" stroke="#d6d6d6" stroke-width="1" stroke-dasharray="3 3" stroke-dashoffset="1"/><path d="M997.5 252V327" stroke="#d6d6d6" stroke-width="1" stroke-dasharray="3 3" stroke-dashoffset="1"/><path d="M1089.5 252V327" stroke="#d6d6d6" stroke-width="1" stroke-dasharray="3 3" stroke-dashoffset="1"/><path d="M1181.5 252V327" stroke="#d6d6d6" stroke-width="1" stroke-dasharray="3 3" stroke-dashoffset="1"/><path d="M1273.5 252V327" stroke="#d6d6d6" stroke-width="1" stroke-dasharray="3 3" stroke-dashoffset="1"/><path d="M1365.5 252V327" stroke="#d6d6d6" stroke-width="1" stroke-dasharray="3 3" stroke-dashoffset="1"/><path d="M993 282.5H1414" stroke="#9aa4b4" stroke-width="1"/></g><g shape-rendering="crispEdges"><path d="M993.5 315V322" stroke="#3cd83c"/><rect x="992.5" y="316.5" width="2" height="4" fill="#fff" stroke="#3cd83c"/><path d="M997.5 319V324" stroke="#3cd83c"/><rect x="996.5" y="321.5" width="2" height="1" fill="#fff" stroke="#3cd83c"/><path d="M1001.5 320V325" stroke="#3cd83c"/><path d="M1000 322.5H1003" stroke="#3cd83c"/><path d="M1005.5 321V325" stroke="#3cd83c"/><rect x="1004.5" y="322.5" width="2" height="2" fill="#fff" stroke="#3cd83c"/><path d="M1009.5 321V325" stroke="#3cd83c"/><rect x="1008.5" y="322.5" width="2" height="2" fill="#000" stroke="#3cd83c"/><path d="M1013.5 318V321" stroke="#3cd83c"/><path d="M1012 319.5H1015" stroke="#3cd83c"/><path d="M1017.5 316V322" stroke="#3cd83c"/><rect x="1016.5" y="317.5" width="2" height="2" fill="#000" stroke="#3cd83c"/><path d="M1021.5 316V320" stroke="#3cd83c"/><path d="M1020 318.5H1023" stroke="#3cd83c"/><path d="M1025.5 317V324" stroke="#3cd83c"/><rect x="1024.5" y="318.5" width="2" height="4" fill="#fff" stroke="#3cd83c"/><path d="M1029.5 322V325" stroke="#3cd83c"/><path d="M1028 323.5H1031" stroke="#3cd83c"/><path d="M1033.5 318V324" stroke="#3cd83c"/><rect x="1032.5" y="319.5" width="2" height="3" fill="#000" stroke="#3cd83c"/><path d="M1037.5 317V321" stroke="#3cd83c"/><rect x="1036.5" y="317.5" width="2" height="2" fill="#000" stroke="#3cd83c"/><path d="M1041.5 316V321" stroke="#3cd83c"/><rect x="1040.5" y="317.5" width="2" height="2" fill="#fff" stroke="#3cd83c"/><path d="M1045.5 317V321" stroke="#3cd83c"/><rect x="1044.5" y="317.5" width="2" height="2" fill="#000" stroke="#3cd83c"/><path d="M1049.5 314V319" stroke="#3cd83c"/><rect x="1048.5" y="315.5" width="2" height="3" fill="#000" stroke="#3cd83c"/><path d="M1053.5 306V315" stroke="#3cd83c"/><rect x="1052.5" y="312.5" width="2" height="1" fill="#000" stroke="#3cd83c"/><path d="M1057.5 300V319" stroke="#3cd83c"/><rect x="1056.5" y="308.5" width="2" height="1" fill="#000" stroke="#3cd83c"/><path d="M1061.5 298V309" stroke="#3cd83c"/><rect x="1060.5" y="300.5" width="2" height="7" fill="#000" stroke="#3cd83c"/><path d="M1065.5 282V302" stroke="#3cd83c"/><rect x="1064.5" y="283.5" width="2" height="16" fill="#000" stroke="#3cd83c"/><path d="M1069.5 271V283" stroke="#3cd83c"/><rect x="1068.5" y="277.5" width="2" height="4" fill="#000" stroke="#3cd83c"/><path d="M1073.5 270V278" stroke="#3cd83c"/><rect x="1072.5" y="274.5" width="2" height="2" fill="#000" stroke="#3cd83c"/><path d="M1077.5 270V277" stroke="#3cd83c"/><rect x="1076.5" y="271.5" width="2" height="3" fill="#000" stroke="#3cd83c"/><path d="M1081.5 267V275" stroke="#3cd83c"/><rect x="1080.5" y="268.5" width="2" height="2" fill="#000" stroke="#3cd83c"/><path d="M1085.5 265V272" stroke="#3cd83c"/><rect x="1084.5" y="269.5" width="2" height="1" fill="#fff" stroke="#3cd83c"/><path d="M1089.5 271V276" stroke="#3cd83c"/><path d="M1088 273.5H1091" stroke="#3cd83c"/><path d="M1093.5 272V275" stroke="#3cd83c"/><path d="M1092 273.5H1095" stroke="#3cd83c"/><path d="M1097.5 271V275" stroke="#3cd83c"/><rect x="1096.5" y="271.5" width="2" height="2" fill="#000" stroke="#3cd83c"/><path d="M1101.5 271V275" stroke="#3cd83c"/><path d="M1100 272.5H1103" stroke="#3cd83c"/><path d="M1105.5 270V273" stroke="#3cd83c"/><rect x="1104.5" y="271.5" width="2" height="1" fill="#000" stroke="#3cd83c"/><path d="M1109.5 269V276" stroke="#3cd83c"/><rect x="1108.5" y="271.5" width="2" height="2" fill="#fff" stroke="#3cd83c"/><path d="M1113.5 270V274" stroke="#3cd83c"/><rect x="1112.5" y="271.5" width="2" height="2" fill="#000" stroke="#3cd83c"/><path d="M1117.5 270V275" stroke="#3cd83c"/><path d="M1116 272.5H1119" stroke="#3cd83c"/><path d="M1121.5 270V274" stroke="#3cd83c"/><rect x="1120.5" y="271.5" width="2" height="2" fill="#000" stroke="#3cd83c"/><path d="M1125.5 271V276" stroke="#3cd83c"/><rect x="1124.5" y="271.5" width="2" height="2" fill="#fff" stroke="#3cd83c"/><path d="M1129.5 271V276" stroke="#3cd83c"/><rect x="1128.5" y="271.5" width="2" height="3" fill="#fff" stroke="#3cd83c"/><path d="M1133.5 273V278" stroke="#3cd83c"/><rect x="1132.5" y="273.5" width="2" height="3" fill="#fff" stroke="#3cd83c"/><path d="M1137.5 271V275" stroke="#3cd83c"/><rect x="1136.5" y="272.5" width="2" height="1" fill="#000" stroke="#3cd83c"/><path d="M1141.5 271V275" stroke="#3cd83c"/><rect x="1140.5" y="272.5" width="2" height="2" fill="#fff" stroke="#3cd83c"/><path d="M1145.5 275V294" stroke="#3cd83c"/><rect x="1144.5" y="275.5" width="2" height="17" fill="#fff" stroke="#3cd83c"/><path d="M1149.5 283V294" stroke="#3cd83c"/><rect x="1148.5" y="284.5" width="2" height="8" fill="#000" stroke="#3cd83c"/><path d="M1153.5 277V301" stroke="#3cd83c"/><rect x="1152.5" y="283.5" width="2" height="12" fill="#fff" stroke="#3cd83c"/><path d="M1157.5 288V300" stroke="#3cd83c"/><rect x="1156.5" y="294.5" width="2" height="2" fill="#fff" stroke="#3cd83c"/><path d="M1161.5 288V299" stroke="#3cd83c"/><rect x="1160.5" y="293.5" width="2" height="3" fill="#000" stroke="#3cd83c"/><path d="M1165.5 290V299" stroke="#3cd83c"/><rect x="1164.5" y="291.5" width="2" height="1" fill="#000" stroke="#3cd83c"/><path d="M1169.5 285V294" stroke="#3cd83c"/><rect x="1168.5" y="286.5" width="2" height="6" fill="#000" stroke="#3cd83c"/><path d="M1173.5 279V290" stroke="#3cd83c"/><rect x="1172.5" y="280.5" width="2" height="4" fill="#000" stroke="#3cd83c"/><path d="M1177.5 278V290" stroke="#3cd83c"/><rect x="1176.5" y="280.5" width="2" height="7" fill="#fff" stroke="#3cd83c"/><path d="M1181.5 281V293" stroke="#3cd83c"/><rect x="1180.5" y="285.5" width="2" height="6" fill="#000" stroke="#3cd83c"/><path d="M1185.5 281V285" stroke="#3cd83c"/><rect x="1184.5" y="282.5" width="2" height="1" fill="#000" stroke="#3cd83c"/><path d="M1189.5 277V283" stroke="#3cd83c"/><rect x="1188.5" y="278.5" width="2" height="3" fill="#000" stroke="#3cd83c"/><path d="M1193.5 274V279" stroke="#3cd83c"/><rect x="1192.5" y="275.5" width="2" height="2" fill="#000" stroke="#3cd83c"/><path d="M1197.5 272V279" stroke="#3cd83c"/><rect x="1196.5" y="275.5" width="2" height="1" fill="#000" stroke="#3cd83c"/><path d="M1201.5 276V278" stroke="#3cd83c"/><path d="M1200 277.5H1203" stroke="#3cd83c"/><path d="M1205.5 277V280" stroke="#3cd83c"/><path d="M1204 277.5H1207" stroke="#3cd83c"/><path d="M1209.5 277V281" stroke="#3cd83c"/><path d="M1208 278.5H1211" stroke="#3cd83c"/><path d="M1213.5 276V281" stroke="#3cd83c"/><rect x="1212.5" y="278.5" width="2" height="1" fill="#fff" stroke="#3cd83c"/><path d="M1217.5 273V280" stroke="#3cd83c"/><rect x="1216.5" y="276.5" width="2" height="3" fill="#000" stroke="#3cd83c"/><path d="M1221.5 276V278" stroke="#3cd83c"/><path d="M1220 277.5H1223" stroke="#3cd83c"/><path d="M1225.5 276V279" stroke="#3cd83c"/><rect x="1224.5" y="276.5" width="2" height="2" fill="#000" stroke="#3cd83c"/><path d="M1229.5 271V277" stroke="#3cd83c"/><rect x="1228.5" y="271.5" width="2" height="4" fill="#000" stroke="#3cd83c"/><path d="M1233.5 268V274" stroke="#3cd83c"/><rect x="1232.5" y="269.5" width="2" height="4" fill="#000" stroke="#3cd83c"/><path d="M1237.5 268V275" stroke="#3cd83c"/><rect x="1236.5" y="269.5" width="2" height="4" fill="#fff" stroke="#3cd83c"/><path d="M1241.5 270V290" stroke="#3cd83c"/><rect x="1240.5" y="273.5" width="2" height="11" fill="#fff" stroke="#3cd83c"/><path d="M1245.5 284V292" stroke="#3cd83c"/><rect x="1244.5" y="285.5" width="2" height="2" fill="#fff" stroke="#3cd83c"/><path d="M1249.5 280V290" stroke="#3cd83c"/><rect x="1248.5" y="280.5" width="2" height="5" fill="#000" stroke="#3cd83c"/><path d="M1253.5 280V288" stroke="#3cd83c"/><rect x="1252.5" y="281.5" width="2" height="4" fill="#fff" stroke="#3cd83c"/><path d="M1257.5 284V288" stroke="#3cd83c"/><rect x="1256.5" y="284.5" width="2" height="2" fill="#fff" stroke="#3cd83c"/><path d="M1261.5 284V297" stroke="#3cd83c"/><rect x="1260.5" y="284.5" width="2" height="11" fill="#fff" stroke="#3cd83c"/><path d="M1265.5 295V308" stroke="#3cd83c"/><path d="M1264 295.5H1267" stroke="#3cd83c"/><path d="M1269.5 292V297" stroke="#3cd83c"/><rect x="1268.5" y="293.5" width="2" height="2" fill="#000" stroke="#3cd83c"/><path d="M1273.5 290V296" stroke="#3cd83c"/><rect x="1272.5" y="292.5" width="2" height="2" fill="#000" stroke="#3cd83c"/><path d="M1277.5 291V295" stroke="#3cd83c"/><rect x="1276.5" y="291.5" width="2" height="2" fill="#000" stroke="#3cd83c"/><path d="M1281.5 282V295" stroke="#3cd83c"/><rect x="1280.5" y="285.5" width="2" height="6" fill="#000" stroke="#3cd83c"/><path d="M1285.5 283V288" stroke="#3cd83c"/><rect x="1284.5" y="286.5" width="2" height="1" fill="#000" stroke="#3cd83c"/><path d="M1289.5 287V290" stroke="#3cd83c"/><rect x="1288.5" y="288.5" width="2" height="1" fill="#fff" stroke="#3cd83c"/><path d="M1293.5 287V292" stroke="#3cd83c"/><rect x="1292.5" y="287.5" width="2" height="2" fill="#fff" stroke="#3cd83c"/><path d="M1297.5 287V291" stroke="#3cd83c"/><path d="M1296 288.5H1299" stroke="#3cd83c"/><path d="M1301.5 284V288" stroke="#3cd83c"/><rect x="1300.5" y="285.5" width="2" height="1" fill="#000" stroke="#3cd83c"/><path d="M1305.5 281V286" stroke="#3cd83c"/><rect x="1304.5" y="282.5" width="2" height="2" fill="#000" stroke="#3cd83c"/><path d="M1309.5 280V284" stroke="#3cd83c"/><rect x="1308.5" y="281.5" width="2" height="1" fill="#000" stroke="#3cd83c"/><path d="M1313.5 282V292" stroke="#3cd83c"/><rect x="1312.5" y="283.5" width="2" height="4" fill="#fff" stroke="#3cd83c"/><path d="M1317.5 280V290" stroke="#3cd83c"/><rect x="1316.5" y="281.5" width="2" height="5" fill="#000" stroke="#3cd83c"/><path d="M1321.5 276V282" stroke="#3cd83c"/><rect x="1320.5" y="279.5" width="2" height="2" fill="#000" stroke="#3cd83c"/><path d="M1325.5 278V282" stroke="#3cd83c"/><rect x="1324.5" y="279.5" width="2" height="1" fill="#000" stroke="#3cd83c"/><path d="M1329.5 274V280" stroke="#3cd83c"/><rect x="1328.5" y="275.5" width="2" height="3" fill="#000" stroke="#3cd83c"/><path d="M1333.5 256V277" stroke="#3cd83c"/><rect x="1332.5" y="268.5" width="2" height="6" fill="#000" stroke="#3cd83c"/><path d="M1337.5 267V295" stroke="#3cd83c"/><rect x="1336.5" y="267.5" width="2" height="16" fill="#fff" stroke="#3cd83c"/><path d="M1341.5 280V291" stroke="#3cd83c"/><rect x="1340.5" y="283.5" width="2" height="6" fill="#fff" stroke="#3cd83c"/><path d="M1345.5 280V297" stroke="#3cd83c"/><rect x="1344.5" y="283.5" width="2" height="6" fill="#000" stroke="#3cd83c"/><path d="M1349.5 275V286" stroke="#3cd83c"/><rect x="1348.5" y="283.5" width="2" height="1" fill="#000" stroke="#3cd83c"/><path d="M1353.5 278V285" stroke="#3cd83c"/><rect x="1352.5" y="281.5" width="2" height="1" fill="#000" stroke="#3cd83c"/><path d="M1357.5 273V284" stroke="#3cd83c"/><rect x="1356.5" y="274.5" width="2" height="9" fill="#000" stroke="#3cd83c"/><path d="M1361.5 271V276" stroke="#3cd83c"/><rect x="1360.5" y="272.5" width="2" height="1" fill="#000" stroke="#3cd83c"/><path d="M1365.5 273V277" stroke="#3cd83c"/><path d="M1364 275.5H1367" stroke="#3cd83c"/><path d="M1369.5 273V277" stroke="#3cd83c"/><rect x="1368.5" y="274.5" width="2" height="2" fill="#000" stroke="#3cd83c"/><path d="M1373.5 273V277" stroke="#3cd83c"/><path d="M1372 274.5H1375" stroke="#3cd83c"/><path d="M1377.5 271V276" stroke="#3cd83c"/><rect x="1376.5" y="272.5" width="2" height="2" fill="#000" stroke="#3cd83c"/><path d="M1381.5 270V274" stroke="#3cd83c"/><rect x="1380.5" y="271.5" width="2" height="1" fill="#000" stroke="#3cd83c"/><path d="M1385.5 270V275" stroke="#3cd83c"/><rect x="1384.5" y="272.5" width="2" height="2" fill="#fff" stroke="#3cd83c"/><path d="M1389.5 271V274" stroke="#3cd83c"/><rect x="1388.5" y="272.5" width="2" height="1" fill="#000" stroke="#3cd83c"/><path d="M1393.5 274V279" stroke="#3cd83c"/><rect x="1392.5" y="275.5" width="2" height="2" fill="#fff" stroke="#3cd83c"/><path d="M1397.5 275V280" stroke="#3cd83c"/><rect x="1396.5" y="276.5" width="2" height="1" fill="#fff" stroke="#3cd83c"/><path d="M1401.5 278V288" stroke="#3cd83c"/><rect x="1400.5" y="279.5" width="2" height="6" fill="#fff" stroke="#3cd83c"/><path d="M1405.5 281V285" stroke="#3cd83c"/><rect x="1404.5" y="282.5" width="2" height="1" fill="#fff" stroke="#3cd83c"/></g><path d="M1383.15 326.73L1393.72 326.4L1397.28 324.77L1405.11 324.77" fill="none" stroke="#cc48cc" stroke-width="1.0" stroke-linejoin="round" shape-rendering="crispEdges"/><path d="M1094.57 327.35L1101.9 324.77L1121.42 318.27L1134.44 314.52L1153.64 311.27L1167.28 309.15L1185.36 306.39L1199.52 303.13L1218.3 300.86L1234.27 298.25L1250.54 296.14L1266.81 295.81L1283.08 295.3L1299.35 294.19L1315.62 293.35L1331.9 291.26L1348.17 290.93L1364.44 289.3L1380.71 287.68L1397.28 286.35L1405.11 285.24" fill="none" stroke="#62dce4" stroke-width="1.0" stroke-linejoin="round" shape-rendering="crispEdges"/><path d="M992.88 327.35L1015.66 326.4L1020.54 324.77L1036.81 323.47L1053.08 321.33L1061.22 317.26L1069.35 311.27L1077.49 304.25L1085.62 296.63L1093.76 292.56L1101.9 289.28L1110.33 286.35L1118.17 283.12L1126.3 281.17L1134.44 279.54L1141.25 279.22L1150.71 280.84L1158.84 283.12L1165.35 285.56L1175.11 284.75L1185.36 283.61L1199.52 281.49L1215.79 280.68L1218.3 280.36L1227.76 279.22L1237.52 277.1L1242.41 278.73L1250.54 279.54L1258.68 281.17L1266.81 283.61L1273.32 285.24L1283.08 285.72L1291.22 286.38L1299.35 286.35L1309.12 285.24L1318.88 284.1L1328.64 282.8L1338.4 282.28L1348.17 282.28L1357.93 281.49L1364.44 280.36L1374.2 278.73L1384.26 277.1L1393.72 276.78L1401.53 277.91L1405.11 278.24" fill="none" stroke="#f0e68c" stroke-width="1.0" stroke-linejoin="round" shape-rendering="crispEdges"/><g shape-rendering="crispEdges" fill="none"><path d="M992.5 327.5V251.5H1414.5V327.5H992.5" stroke="#fff"/></g><rect x="1415" y="249" width="42" height="99" fill="#000"/><rect x="990" y="328" width="467" height="20" fill="#000"/><g shape-rendering="crispEdges"><path d="M1415 258.5H1417" stroke="#fff" stroke-width="1"/><text x="1420" y="261.2" fill="#fff" stroke="#fff" stroke-width=".25" font-size="9">2554.55</text><path d="M1415 291.5H1417" stroke="#fff" stroke-width="1"/><text x="1420" y="294.2" fill="#fff" stroke="#fff" stroke-width=".25" font-size="9">2545.55</text><path d="M1415 324.5H1417" stroke="#fff" stroke-width="1"/><text x="1420" y="327.2" fill="#fff" stroke="#fff" stroke-width=".25" font-size="9">2536.55</text><rect x="1416" y="277" width="41" height="11" fill="#fff"/><text x="1420" y="285.7" fill="#000" stroke="#000" stroke-width=".25" font-size="9">2547.90</text><path d="M993.5 328V332" stroke="#fff" stroke-width="1"/><text x="992.5" y="339.5" fill="#fff" stroke="#fff" stroke-width=".25" font-size="9.5">4 Oct 2017</text><path d="M1057.5 328V332" stroke="#fff" stroke-width="1"/><text x="1056.5" y="339.5" fill="#fff" stroke="#fff" stroke-width=".25" font-size="9.5">5 Oct 16:00</text><path d="M1121.5 328V332" stroke="#fff" stroke-width="1"/><text x="1120.5" y="339.5" fill="#fff" stroke="#fff" stroke-width=".25" font-size="9.5">6 Oct 09:00</text><path d="M1185.5 328V332" stroke="#fff" stroke-width="1"/><text x="1184.5" y="339.5" fill="#fff" stroke="#fff" stroke-width=".25" font-size="9.5">9 Oct 02:00</text><path d="M1249.5 328V332" stroke="#fff" stroke-width="1"/><text x="1248.5" y="339.5" fill="#fff" stroke="#fff" stroke-width=".25" font-size="9.5">9 Oct 18:00</text><path d="M1313.5 328V332" stroke="#fff" stroke-width="1"/><text x="1312.5" y="339.5" fill="#fff" stroke="#fff" stroke-width=".25" font-size="9.5">10 Oct 11:00</text><path d="M1377.5 328V332" stroke="#fff" stroke-width="1"/><text x="1376.5" y="339.5" fill="#fff" stroke="#fff" stroke-width=".25" font-size="9.5">11 Oct 04:00</text></g><path d="M996 258h8l-4 4.500z" fill="#fff" shape-rendering="geometricPrecision"/><text x="1008" y="262.5" fill="#fff" stroke="#fff" stroke-width=".25" font-size="9.2">US500Cash,H1</text></svg></div></div><div class="cw " style="left:0px;top:283px;width:487px;height:141px">
<div class="cwi"><svg width="16" height="16" viewBox="0 0 16 16"><rect x="0.5" y="1.500" width="10" height="9" rx="1" fill="#fff" stroke="#5b9bd5"/><rect x="1" y="2" width="9" height="2" fill="#5b9bd5"/><path d="M2 7h2l1-1.500 1 2.500 1-1h2" fill="none" stroke="#5b9bd5"/><rect x="4.500" y="6.500" width="10" height="8" rx="1" fill="#fff" stroke="#4a8ed0"/><path d="M6 10l1.500 3 1.500-3 1.500 3 1.500-2.500h1" fill="none" stroke="#4a8ed0"/></svg></div><div class="cwt">EURJPY,M30</div>
<div class="cb b1"><i class="mn"></i></div><div class="cb b2"><i class="mx"></i></div><div class="cb b3"><svg width="13" height="11" viewBox="0 0 13 11"><path d="M3.200 2.600L9.800 8.400M9.800 2.600L3.200 8.400" stroke="#4a5666" stroke-width="4.200" stroke-linecap="square"/><path d="M3.200 2.600L9.800 8.400M9.800 2.600L3.200 8.400" stroke="#fff" stroke-width="2.300" stroke-linecap="square"/></svg></div>
<div class="cv"></div></div><div class="cw " style="left:487px;top:283px;width:487px;height:141px">
<div class="cwi"><svg width="16" height="16" viewBox="0 0 16 16"><rect x="0.5" y="1.500" width="10" height="9" rx="1" fill="#fff" stroke="#5b9bd5"/><rect x="1" y="2" width="9" height="2" fill="#5b9bd5"/><path d="M2 7h2l1-1.500 1 2.500 1-1h2" fill="none" stroke="#5b9bd5"/><rect x="4.500" y="6.500" width="10" height="8" rx="1" fill="#fff" stroke="#4a8ed0"/><path d="M6 10l1.500 3 1.500-3 1.500 3 1.500-2.500h1" fill="none" stroke="#4a8ed0"/></svg></div><div class="cwt">EURGBP,M30</div>
<div class="cb b1"><i class="mn"></i></div><div class="cb b2"><i class="mx"></i></div><div class="cb b3"><svg width="13" height="11" viewBox="0 0 13 11"><path d="M3.200 2.600L9.800 8.400M9.800 2.600L3.200 8.400" stroke="#4a5666" stroke-width="4.200" stroke-linecap="square"/><path d="M3.200 2.600L9.800 8.400M9.800 2.600L3.200 8.400" stroke="#fff" stroke-width="2.300" stroke-linecap="square"/></svg></div>
<div class="cv"><svg width="467" height="99" viewBox="503 390 467 99"><g shape-rendering="crispEdges" fill="none"><path d="M506 399.5H927" stroke="#d6d6d6" stroke-width="1" stroke-dasharray="3 3"/><path d="M506 432.5H927" stroke="#d6d6d6" stroke-width="1" stroke-dasharray="3 3"/><path d="M506 465.5H927" stroke="#d6d6d6" stroke-width="1" stroke-dasharray="3 3"/><path d="M538.5 393V468" stroke="#d6d6d6" stroke-width="1" stroke-dasharray="3 3" stroke-dashoffset="1"/><path d="M570.5 393V468" stroke="#d6d6d6" stroke-width="1" stroke-dasharray="3 3" stroke-dashoffset="1"/><path d="M602.5 393V468" stroke="#d6d6d6" stroke-width="1" stroke-dasharray="3 3" stroke-dashoffset="1"/><path d="M634.5 393V468" stroke="#d6d6d6" stroke-width="1" stroke-dasharray="3 3" stroke-dashoffset="1"/><path d="M666.5 393V468" stroke="#d6d6d6" stroke-width="1" stroke-dasharray="3 3" stroke-dashoffset="1"/><path d="M698.5 393V468" stroke="#d6d6d6" stroke-width="1" stroke-dasharray="3 3" stroke-dashoffset="1"/><path d="M730.5 393V468" stroke="#d6d6d6" stroke-width="1" stroke-dasharray="3 3" stroke-dashoffset="1"/><path d="M762.5 393V468" stroke="#d6d6d6" stroke-width="1" stroke-dasharray="3 3" stroke-dashoffset="1"/><path d="M794.5 393V468" stroke="#d6d6d6" stroke-width="1" stroke-dasharray="3 3" stroke-dashoffset="1"/><path d="M826.5 393V468" stroke="#d6d6d6" stroke-width="1" stroke-dasharray="3 3" stroke-dashoffset="1"/><path d="M858.5 393V468" stroke="#d6d6d6" stroke-width="1" stroke-dasharray="3 3" stroke-dashoffset="1"/><path d="M890.5 393V468" stroke="#d6d6d6" stroke-width="1" stroke-dasharray="3 3" stroke-dashoffset="1"/><path d="M922.5 393V468" stroke="#d6d6d6" stroke-width="1" stroke-dasharray="3 3" stroke-dashoffset="1"/><path d="M506 402.5H927" stroke="#9aa4b4" stroke-width="1"/></g><g shape-rendering="crispEdges"><path d="M854.5 418V424" stroke="#3cd83c"/><rect x="853.5" y="422.5" width="2" height="1" fill="#000" stroke="#3cd83c"/><path d="M858.5 420V424" stroke="#3cd83c"/><rect x="857.5" y="422.5" width="2" height="1" fill="#fff" stroke="#3cd83c"/><path d="M862.5 422V426" stroke="#3cd83c"/><path d="M861 424.5H864" stroke="#3cd83c"/><path d="M866.5 418V426" stroke="#3cd83c"/><path d="M865 423.5H868" stroke="#3cd83c"/><path d="M870.5 419V429" stroke="#3cd83c"/><rect x="869.5" y="424.5" width="2" height="1" fill="#fff" stroke="#3cd83c"/><path d="M874.5 422V427" stroke="#3cd83c"/><rect x="873.5" y="423.5" width="2" height="2" fill="#000" stroke="#3cd83c"/><path d="M878.5 420V423" stroke="#3cd83c"/><rect x="877.5" y="420.5" width="2" height="2" fill="#000" stroke="#3cd83c"/><path d="M882.5 419V423" stroke="#3cd83c"/><rect x="881.5" y="420.5" width="2" height="1" fill="#000" stroke="#3cd83c"/><path d="M886.5 417V422" stroke="#3cd83c"/><rect x="885.5" y="418.5" width="2" height="3" fill="#000" stroke="#3cd83c"/><path d="M890.5 410V419" stroke="#3cd83c"/><rect x="889.5" y="412.5" width="2" height="6" fill="#000" stroke="#3cd83c"/><path d="M894.5 407V414" stroke="#3cd83c"/><rect x="893.5" y="408.5" width="2" height="3" fill="#000" stroke="#3cd83c"/><path d="M898.5 405V414" stroke="#3cd83c"/><path d="M897 408.5H900" stroke="#3cd83c"/><path d="M902.5 402V412" stroke="#3cd83c"/><rect x="901.5" y="403.5" width="2" height="6" fill="#000" stroke="#3cd83c"/><path d="M906.5 400V406" stroke="#3cd83c"/><rect x="905.5" y="401.5" width="2" height="1" fill="#000" stroke="#3cd83c"/><path d="M910.5 397V407" stroke="#3cd83c"/><rect x="909.5" y="401.5" width="2" height="4" fill="#fff" stroke="#3cd83c"/><path d="M914.5 399V409" stroke="#3cd83c"/><rect x="913.5" y="406.5" width="2" height="1" fill="#fff" stroke="#3cd83c"/><path d="M918.5 398V409" stroke="#3cd83c"/><rect x="917.5" y="399.5" width="2" height="7" fill="#000" stroke="#3cd83c"/></g><path d="M852.34 441.21L871.07 440.63L890.68 439.48L905.67 438.33L918.13 437.17" fill="none" stroke="#cc48cc" stroke-width="1.0" stroke-linejoin="round" shape-rendering="crispEdges"/><path d="M852.34 426.22L890.68 425.06L903.36 423.33L918.13 421.26" fill="none" stroke="#62dce4" stroke-width="1.0" stroke-linejoin="round" shape-rendering="crispEdges"/><path d="M852.34 424.49L887.79 423.68L890.68 422.18L903.36 417.22L918.13 413.3" fill="none" stroke="#f0e68c" stroke-width="1.0" stroke-linejoin="round" shape-rendering="crispEdges"/><g shape-rendering="crispEdges" fill="none"><path d="M505.5 468.5V392.5H927.5V468.5H505.5" stroke="#fff"/></g><rect x="928" y="390" width="42" height="99" fill="#000"/><rect x="503" y="469" width="467" height="20" fill="#000"/><g shape-rendering="crispEdges"><path d="M928 399.5H930" stroke="#fff" stroke-width="1"/><text x="934" y="402.2" fill="#fff" stroke="#fff" stroke-width=".25" font-size="9">0.89900</text><path d="M928 432.5H930" stroke="#fff" stroke-width="1"/><text x="934" y="435.2" fill="#fff" stroke="#fff" stroke-width=".25" font-size="9">0.89345</text><path d="M928 465.5H930" stroke="#fff" stroke-width="1"/><text x="934" y="468.2" fill="#fff" stroke="#fff" stroke-width=".25" font-size="9">0.89050</text><rect x="929" y="397" width="41" height="11" fill="#fff"/><text x="934" y="405.7" fill="#000" stroke="#000" stroke-width=".25" font-size="9">0.89615</text><path d="M826.5 469V473" stroke="#fff" stroke-width="1"/><text x="825.5" y="480.5" fill="#fff" stroke="#fff" stroke-width=".25" font-size="9.5">10 Oct 23:30</text><path d="M890.5 469V473" stroke="#fff" stroke-width="1"/><text x="889.5" y="480.5" fill="#fff" stroke="#fff" stroke-width=".25" font-size="9.5">11 Oct 07:30</text></g></svg></div></div><div class="cw " style="left:974px;top:283px;width:487px;height:141px">
<div class="cwi"><svg width="16" height="16" viewBox="0 0 16 16"><rect x="0.5" y="1.500" width="10" height="9" rx="1" fill="#fff" stroke="#5b9bd5"/><rect x="1" y="2" width="9" height="2" fill="#5b9bd5"/><path d="M2 7h2l1-1.500 1 2.500 1-1h2" fill="none" stroke="#5b9bd5"/><rect x="4.500" y="6.500" width="10" height="8" rx="1" fill="#fff" stroke="#4a8ed0"/><path d="M6 10l1.500 3 1.500-3 1.500 3 1.500-2.500h1" fill="none" stroke="#4a8ed0"/></svg></div><div class="cwt">JP225Cash,M30</div>
<div class="cb b1"><i class="mn"></i></div><div class="cb b2"><i class="mx"></i></div><div class="cb b3"><svg width="13" height="11" viewBox="0 0 13 11"><path d="M3.200 2.600L9.800 8.400M9.800 2.600L3.200 8.400" stroke="#4a5666" stroke-width="4.200" stroke-linecap="square"/><path d="M3.200 2.600L9.800 8.400M9.800 2.600L3.200 8.400" stroke="#fff" stroke-width="2.300" stroke-linecap="square"/></svg></div>
<div class="cv"><svg width="467" height="99" viewBox="990 390 467 99"><g shape-rendering="crispEdges" fill="none"><path d="M993 398.5H1417" stroke="#d6d6d6" stroke-width="1" stroke-dasharray="3 3"/><path d="M993 431.5H1417" stroke="#d6d6d6" stroke-width="1" stroke-dasharray="3 3"/><path d="M993 465.5H1417" stroke="#d6d6d6" stroke-width="1" stroke-dasharray="3 3"/><path d="M1025.5 393V468" stroke="#d6d6d6" stroke-width="1" stroke-dasharray="3 3" stroke-dashoffset="1"/><path d="M1057.5 393V468" stroke="#d6d6d6" stroke-width="1" stroke-dasharray="3 3" stroke-dashoffset="1"/><path d="M1089.5 393V468" stroke="#d6d6d6" stroke-width="1" stroke-dasharray="3 3" stroke-dashoffset="1"/><path d="M1121.5 393V468" stroke="#d6d6d6" stroke-width="1" stroke-dasharray="3 3" stroke-dashoffset="1"/><path d="M1153.5 393V468" stroke="#d6d6d6" stroke-width="1" stroke-dasharray="3 3" stroke-dashoffset="1"/><path d="M1185.5 393V468" stroke="#d6d6d6" stroke-width="1" stroke-dasharray="3 3" stroke-dashoffset="1"/><path d="M1217.5 393V468" stroke="#d6d6d6" stroke-width="1" stroke-dasharray="3 3" stroke-dashoffset="1"/><path d="M1249.5 393V468" stroke="#d6d6d6" stroke-width="1" stroke-dasharray="3 3" stroke-dashoffset="1"/><path d="M1281.5 393V468" stroke="#d6d6d6" stroke-width="1" stroke-dasharray="3 3" stroke-dashoffset="1"/><path d="M1313.5 393V468" stroke="#d6d6d6" stroke-width="1" stroke-dasharray="3 3" stroke-dashoffset="1"/><path d="M1345.5 393V468" stroke="#d6d6d6" stroke-width="1" stroke-dasharray="3 3" stroke-dashoffset="1"/><path d="M1377.5 393V468" stroke="#d6d6d6" stroke-width="1" stroke-dasharray="3 3" stroke-dashoffset="1"/><path d="M1409.5 393V468" stroke="#d6d6d6" stroke-width="1" stroke-dasharray="3 3" stroke-dashoffset="1"/><path d="M1141.5 393V468" stroke="#d6d6d6" stroke-width="1" stroke-dasharray="3 3" stroke-dashoffset="1"/><path d="M1325.5 393V468" stroke="#d6d6d6" stroke-width="1" stroke-dasharray="3 3" stroke-dashoffset="1"/><path d="M993 407.5H1417" stroke="#9aa4b4" stroke-width="1"/></g><g shape-rendering="crispEdges"><path d="M993.5 455V460" stroke="#3cd83c"/><rect x="992.5" y="456.5" width="2" height="3" fill="#000" stroke="#3cd83c"/><path d="M997.5 454V457" stroke="#3cd83c"/><path d="M996 456.5H999" stroke="#3cd83c"/><path d="M1001.5 454V458" stroke="#3cd83c"/><rect x="1000.5" y="455.5" width="2" height="1" fill="#000" stroke="#3cd83c"/><path d="M1005.5 456V461" stroke="#3cd83c"/><rect x="1004.5" y="456.5" width="2" height="3" fill="#fff" stroke="#3cd83c"/><path d="M1009.5 459V461" stroke="#3cd83c"/><path d="M1008 459.5H1011" stroke="#3cd83c"/><path d="M1013.5 457V462" stroke="#3cd83c"/><rect x="1012.5" y="458.5" width="2" height="2" fill="#fff" stroke="#3cd83c"/><path d="M1017.5 458V462" stroke="#3cd83c"/><rect x="1016.5" y="459.5" width="2" height="2" fill="#fff" stroke="#3cd83c"/><path d="M1021.5 457V464" stroke="#3cd83c"/><rect x="1020.5" y="460.5" width="2" height="2" fill="#fff" stroke="#3cd83c"/><path d="M1025.5 460V465" stroke="#3cd83c"/><rect x="1024.5" y="461.5" width="2" height="2" fill="#fff" stroke="#3cd83c"/><path d="M1029.5 454V464" stroke="#3cd83c"/><rect x="1028.5" y="454.5" width="2" height="7" fill="#000" stroke="#3cd83c"/><path d="M1033.5 453V456" stroke="#3cd83c"/><path d="M1032 454.5H1035" stroke="#3cd83c"/><path d="M1037.5 453V457" stroke="#3cd83c"/><rect x="1036.5" y="454.5" width="2" height="1" fill="#fff" stroke="#3cd83c"/><path d="M1041.5 454V457" stroke="#3cd83c"/><rect x="1040.5" y="455.5" width="2" height="1" fill="#fff" stroke="#3cd83c"/><path d="M1045.5 456V460" stroke="#3cd83c"/><path d="M1044 457.5H1047" stroke="#3cd83c"/><path d="M1049.5 455V460" stroke="#3cd83c"/><rect x="1048.5" y="456.5" width="2" height="1" fill="#000" stroke="#3cd83c"/><path d="M1053.5 452V457" stroke="#3cd83c"/><rect x="1052.5" y="453.5" width="2" height="3" fill="#000" stroke="#3cd83c"/><path d="M1057.5 450V456" stroke="#3cd83c"/><rect x="1056.5" y="452.5" width="2" height="2" fill="#000" stroke="#3cd83c"/><path d="M1061.5 450V454" stroke="#3cd83c"/><rect x="1060.5" y="451.5" width="2" height="2" fill="#000" stroke="#3cd83c"/><path d="M1065.5 448V453" stroke="#3cd83c"/><rect x="1064.5" y="449.5" width="2" height="2" fill="#000" stroke="#3cd83c"/><path d="M1069.5 443V449" stroke="#3cd83c"/><rect x="1068.5" y="444.5" width="2" height="4" fill="#000" stroke="#3cd83c"/><path d="M1073.5 443V445" stroke="#3cd83c"/><path d="M1072 444.5H1075" stroke="#3cd83c"/><path d="M1077.5 443V447" stroke="#3cd83c"/><rect x="1076.5" y="444.5" width="2" height="1" fill="#fff" stroke="#3cd83c"/><path d="M1081.5 445V452" stroke="#3cd83c"/><rect x="1080.5" y="445.5" width="2" height="5" fill="#fff" stroke="#3cd83c"/><path d="M1085.5 447V453" stroke="#3cd83c"/><path d="M1084 450.5H1087" stroke="#3cd83c"/><path d="M1089.5 448V455" stroke="#3cd83c"/><rect x="1088.5" y="450.5" width="2" height="1" fill="#fff" stroke="#3cd83c"/><path d="M1093.5 450V455" stroke="#3cd83c"/><rect x="1092.5" y="451.5" width="2" height="1" fill="#fff" stroke="#3cd83c"/><path d="M1097.5 448V452" stroke="#3cd83c"/><rect x="1096.5" y="448.5" width="2" height="2" fill="#000" stroke="#3cd83c"/><path d="M1101.5 447V452" stroke="#3cd83c"/><path d="M1100 449.5H1103" stroke="#3cd83c"/><path d="M1105.5 449V453" stroke="#3cd83c"/><path d="M1104 450.5H1107" stroke="#3cd83c"/><path d="M1109.5 449V452" stroke="#3cd83c"/><path d="M1108 450.5H1111" stroke="#3cd83c"/><path d="M1113.5 449V452" stroke="#3cd83c"/><path d="M1112 450.5H1115" stroke="#3cd83c"/><path d="M1117.5 450V453" stroke="#3cd83c"/><rect x="1116.5" y="450.5" width="2" height="2" fill="#fff" stroke="#3cd83c"/><path d="M1121.5 452V455" stroke="#3cd83c"/><path d="M1120 453.5H1123" stroke="#3cd83c"/><path d="M1125.5 456V462" stroke="#3cd83c"/><rect x="1124.5" y="457.5" width="2" height="3" fill="#fff" stroke="#3cd83c"/><path d="M1129.5 459V464" stroke="#3cd83c"/><rect x="1128.5" y="459.5" width="2" height="2" fill="#000" stroke="#3cd83c"/><path d="M1133.5 456V460" stroke="#3cd83c"/><rect x="1132.5" y="457.5" width="2" height="2" fill="#000" stroke="#3cd83c"/><path d="M1137.5 456V460" stroke="#3cd83c"/><rect x="1136.5" y="457.5" width="2" height="1" fill="#000" stroke="#3cd83c"/><path d="M1141.5 447V460" stroke="#3cd83c"/><rect x="1140.5" y="456.5" width="2" height="1" fill="#000" stroke="#3cd83c"/><path d="M1145.5 453V456" stroke="#3cd83c"/><path d="M1144 454.5H1147" stroke="#3cd83c"/><path d="M1149.5 456V458" stroke="#3cd83c"/><rect x="1148.5" y="456.5" width="2" height="1" fill="#fff" stroke="#3cd83c"/><path d="M1153.5 456V466" stroke="#3cd83c"/><rect x="1152.5" y="456.5" width="2" height="7" fill="#fff" stroke="#3cd83c"/><path d="M1157.5 451V466" stroke="#3cd83c"/><rect x="1156.5" y="452.5" width="2" height="12" fill="#000" stroke="#3cd83c"/><path d="M1161.5 442V453" stroke="#3cd83c"/><rect x="1160.5" y="445.5" width="2" height="6" fill="#000" stroke="#3cd83c"/><path d="M1165.5 432V444" stroke="#3cd83c"/><rect x="1164.5" y="440.5" width="2" height="2" fill="#000" stroke="#3cd83c"/><path d="M1169.5 438V443" stroke="#3cd83c"/><rect x="1168.5" y="440.5" width="2" height="1" fill="#000" stroke="#3cd83c"/><path d="M1173.5 434V440" stroke="#3cd83c"/><rect x="1172.5" y="434.5" width="2" height="5" fill="#000" stroke="#3cd83c"/><path d="M1177.5 428V438" stroke="#3cd83c"/><rect x="1176.5" y="430.5" width="2" height="4" fill="#000" stroke="#3cd83c"/><path d="M1181.5 427V434" stroke="#3cd83c"/><rect x="1180.5" y="430.5" width="2" height="1" fill="#000" stroke="#3cd83c"/><path d="M1185.5 429V434" stroke="#3cd83c"/><rect x="1184.5" y="430.5" width="2" height="3" fill="#fff" stroke="#3cd83c"/><path d="M1189.5 431V435" stroke="#3cd83c"/><rect x="1188.5" y="432.5" width="2" height="1" fill="#fff" stroke="#3cd83c"/><path d="M1193.5 423V438" stroke="#3cd83c"/><rect x="1192.5" y="427.5" width="2" height="6" fill="#000" stroke="#3cd83c"/><path d="M1197.5 420V428" stroke="#3cd83c"/><rect x="1196.5" y="424.5" width="2" height="2" fill="#000" stroke="#3cd83c"/><path d="M1201.5 417V425" stroke="#3cd83c"/><rect x="1200.5" y="421.5" width="2" height="2" fill="#000" stroke="#3cd83c"/><path d="M1205.5 415V421" stroke="#3cd83c"/><rect x="1204.5" y="416.5" width="2" height="4" fill="#000" stroke="#3cd83c"/><path d="M1209.5 413V419" stroke="#3cd83c"/><rect x="1208.5" y="416.5" width="2" height="1" fill="#000" stroke="#3cd83c"/><path d="M1213.5 415V419" stroke="#3cd83c"/><path d="M1212 416.5H1215" stroke="#3cd83c"/><path d="M1217.5 416V420" stroke="#3cd83c"/><rect x="1216.5" y="416.5" width="2" height="2" fill="#fff" stroke="#3cd83c"/><path d="M1221.5 415V432" stroke="#3cd83c"/><rect x="1220.5" y="416.5" width="2" height="14" fill="#fff" stroke="#3cd83c"/><path d="M1225.5 428V434" stroke="#3cd83c"/><rect x="1224.5" y="429.5" width="2" height="2" fill="#fff" stroke="#3cd83c"/><path d="M1229.5 428V431" stroke="#3cd83c"/><path d="M1228 429.5H1231" stroke="#3cd83c"/><path d="M1233.5 427V431" stroke="#3cd83c"/><rect x="1232.5" y="428.5" width="2" height="1" fill="#000" stroke="#3cd83c"/><path d="M1237.5 429V434" stroke="#3cd83c"/><rect x="1236.5" y="430.5" width="2" height="1" fill="#fff" stroke="#3cd83c"/><path d="M1241.5 426V431" stroke="#3cd83c"/><rect x="1240.5" y="427.5" width="2" height="2" fill="#000" stroke="#3cd83c"/><path d="M1245.5 423V429" stroke="#3cd83c"/><rect x="1244.5" y="424.5" width="2" height="3" fill="#000" stroke="#3cd83c"/><path d="M1249.5 421V426" stroke="#3cd83c"/><rect x="1248.5" y="423.5" width="2" height="1" fill="#000" stroke="#3cd83c"/><path d="M1253.5 421V426" stroke="#3cd83c"/><rect x="1252.5" y="422.5" width="2" height="1" fill="#000" stroke="#3cd83c"/><path d="M1257.5 419V424" stroke="#3cd83c"/><rect x="1256.5" y="420.5" width="2" height="2" fill="#000" stroke="#3cd83c"/><path d="M1261.5 418V425" stroke="#3cd83c"/><rect x="1260.5" y="419.5" width="2" height="5" fill="#fff" stroke="#3cd83c"/><path d="M1265.5 417V432" stroke="#3cd83c"/><rect x="1264.5" y="424.5" width="2" height="7" fill="#fff" stroke="#3cd83c"/><path d="M1269.5 428V441" stroke="#3cd83c"/><rect x="1268.5" y="428.5" width="2" height="9" fill="#fff" stroke="#3cd83c"/><path d="M1273.5 434V441" stroke="#3cd83c"/><rect x="1272.5" y="435.5" width="2" height="3" fill="#fff" stroke="#3cd83c"/><path d="M1277.5 434V438" stroke="#3cd83c"/><rect x="1276.5" y="434.5" width="2" height="3" fill="#000" stroke="#3cd83c"/><path d="M1281.5 433V442" stroke="#3cd83c"/><rect x="1280.5" y="434.5" width="2" height="1" fill="#000" stroke="#3cd83c"/><path d="M1285.5 433V438" stroke="#3cd83c"/><rect x="1284.5" y="434.5" width="2" height="1" fill="#fff" stroke="#3cd83c"/><path d="M1289.5 427V433" stroke="#3cd83c"/><rect x="1288.5" y="428.5" width="2" height="3" fill="#000" stroke="#3cd83c"/><path d="M1293.5 426V429" stroke="#3cd83c"/><rect x="1292.5" y="427.5" width="2" height="1" fill="#000" stroke="#3cd83c"/><path d="M1297.5 423V431" stroke="#3cd83c"/><rect x="1296.5" y="423.5" width="2" height="4" fill="#000" stroke="#3cd83c"/><path d="M1301.5 421V424" stroke="#3cd83c"/><rect x="1300.5" y="421.5" width="2" height="2" fill="#000" stroke="#3cd83c"/><path d="M1305.5 421V423" stroke="#3cd83c"/><path d="M1304 422.5H1307" stroke="#3cd83c"/><path d="M1309.5 421V424" stroke="#3cd83c"/><path d="M1308 421.5H1311" stroke="#3cd83c"/><path d="M1313.5 420V424" stroke="#3cd83c"/><rect x="1312.5" y="421.5" width="2" height="1" fill="#fff" stroke="#3cd83c"/><path d="M1317.5 419V421" stroke="#3cd83c"/><path d="M1316 420.5H1319" stroke="#3cd83c"/><path d="M1321.5 418V422" stroke="#3cd83c"/><path d="M1320 420.5H1323" stroke="#3cd83c"/><path d="M1325.5 416V425" stroke="#3cd83c"/><rect x="1324.5" y="421.5" width="2" height="1" fill="#fff" stroke="#3cd83c"/><path d="M1329.5 421V425" stroke="#3cd83c"/><rect x="1328.5" y="423.5" width="2" height="1" fill="#fff" stroke="#3cd83c"/><path d="M1333.5 424V429" stroke="#3cd83c"/><rect x="1332.5" y="425.5" width="2" height="2" fill="#fff" stroke="#3cd83c"/><path d="M1337.5 425V432" stroke="#3cd83c"/><rect x="1336.5" y="426.5" width="2" height="2" fill="#fff" stroke="#3cd83c"/><path d="M1341.5 420V428" stroke="#3cd83c"/><rect x="1340.5" y="425.5" width="2" height="1" fill="#000" stroke="#3cd83c"/><path d="M1345.5 422V428" stroke="#3cd83c"/><rect x="1344.5" y="423.5" width="2" height="3" fill="#000" stroke="#3cd83c"/><path d="M1349.5 409V424" stroke="#3cd83c"/><rect x="1348.5" y="412.5" width="2" height="10" fill="#000" stroke="#3cd83c"/><path d="M1353.5 408V413" stroke="#3cd83c"/><rect x="1352.5" y="409.5" width="2" height="2" fill="#000" stroke="#3cd83c"/><path d="M1357.5 399V411" stroke="#3cd83c"/><rect x="1356.5" y="402.5" width="2" height="7" fill="#000" stroke="#3cd83c"/><path d="M1361.5 400V405" stroke="#3cd83c"/><rect x="1360.5" y="401.5" width="2" height="2" fill="#000" stroke="#3cd83c"/><path d="M1365.5 402V406" stroke="#3cd83c"/><rect x="1364.5" y="402.5" width="2" height="3" fill="#fff" stroke="#3cd83c"/><path d="M1369.5 401V407" stroke="#3cd83c"/><rect x="1368.5" y="402.5" width="2" height="1" fill="#000" stroke="#3cd83c"/><path d="M1373.5 400V406" stroke="#3cd83c"/><rect x="1372.5" y="402.5" width="2" height="2" fill="#000" stroke="#3cd83c"/><path d="M1377.5 400V405" stroke="#3cd83c"/><rect x="1376.5" y="402.5" width="2" height="1" fill="#000" stroke="#3cd83c"/><path d="M1381.5 400V405" stroke="#3cd83c"/><rect x="1380.5" y="401.5" width="2" height="2" fill="#000" stroke="#3cd83c"/><path d="M1385.5 397V406" stroke="#3cd83c"/><rect x="1384.5" y="399.5" width="2" height="4" fill="#000" stroke="#3cd83c"/><path d="M1389.5 402V410" stroke="#3cd83c"/><rect x="1388.5" y="403.5" width="2" height="4" fill="#fff" stroke="#3cd83c"/><path d="M1393.5 405V410" stroke="#3cd83c"/><rect x="1392.5" y="406.5" width="2" height="2" fill="#fff" stroke="#3cd83c"/><path d="M1397.5 406V410" stroke="#3cd83c"/><path d="M1396 407.5H1399" stroke="#3cd83c"/><path d="M1401.5 407V414" stroke="#3cd83c"/><path d="M1400 408.5H1403" stroke="#3cd83c"/><path d="M1405.5 407V413" stroke="#3cd83c"/><rect x="1404.5" y="408.5" width="2" height="4" fill="#000" stroke="#3cd83c"/></g><path d="M1167.28 467.73L1189.76 467.4L1199.52 465.77L1215.79 464.15L1218.3 463.66L1234.27 462.52L1250.54 460.89L1266.81 459.59L1283.08 458.78L1299.35 457.15L1315.62 455.52L1331.9 454.71L1344.91 453.41L1364.44 451.13L1380.71 449.32L1397.28 447.88L1405.11 447.39" fill="none" stroke="#cc48cc" stroke-width="1.0" stroke-linejoin="round" shape-rendering="crispEdges"/><path d="M992.88 461.22L1020.54 460.89L1053.08 460.4L1069.35 458.78L1088.88 457.64L1110.33 456.34L1126.3 456.31L1150.71 456.34L1165.35 456.31L1185.36 453.08L1199.52 450.64L1215.79 447.39L1218.3 447.39L1234.27 445.25L1250.54 442.51L1266.81 440.88L1283.08 440.39L1299.35 438.44L1315.62 436.49L1331.9 436.3L1348.17 435.19L1364.44 432.26L1380.71 429.3L1397.28 426.24L1405.11 425.42" fill="none" stroke="#62dce4" stroke-width="1.0" stroke-linejoin="round" shape-rendering="crispEdges"/><path d="M992.88 459.59L1020.54 459.59L1036.81 459.24L1053.08 458.26L1064.47 455.52L1075.86 453.08L1088.88 452.76L1101.9 452.59L1111.66 452.27L1126.3 453.08L1134.44 453.9L1150.71 454.71L1162.91 454.38L1175.11 449.32L1185.36 444.62L1199.52 438.44L1215.79 431.12L1218.3 431.61L1234.27 430.63L1250.54 428.68L1261.93 427.35L1271.69 429.49L1283.08 430.63L1299.35 429.49L1309.12 427.86L1318.88 425.75L1331.9 425.42L1344.91 425.75L1353.35 423.28L1364.44 418.1L1374.2 414.33L1384.26 411.27L1393.72 410.29L1405.11 410.45" fill="none" stroke="#f0e68c" stroke-width="1.0" stroke-linejoin="round" shape-rendering="crispEdges"/><g shape-rendering="crispEdges" fill="none"><path d="M992.5 468.5V392.5H1417.5V468.5H992.5" stroke="#fff"/></g><rect x="1418" y="390" width="39" height="99" fill="#000"/><rect x="990" y="469" width="467" height="20" fill="#000"/><g shape-rendering="crispEdges"><path d="M1418 398.5H1420" stroke="#fff" stroke-width="1"/><text x="1423" y="401.2" fill="#fff" stroke="#fff" stroke-width=".25" font-size="9">20894</text><path d="M1418 431.5H1420" stroke="#fff" stroke-width="1"/><text x="1423" y="434.2" fill="#fff" stroke="#fff" stroke-width=".25" font-size="9">20774</text><path d="M1418 465.5H1420" stroke="#fff" stroke-width="1"/><text x="1423" y="468.2" fill="#fff" stroke="#fff" stroke-width=".25" font-size="9">20654</text><rect x="1419" y="402" width="33" height="11" fill="#fff"/><text x="1423" y="410.7" fill="#000" stroke="#000" stroke-width=".25" font-size="9">20861</text><path d="M993.5 469V473" stroke="#fff" stroke-width="1"/><text x="992.5" y="480.5" fill="#fff" stroke="#fff" stroke-width=".25" font-size="9.5">9 Oct 2017</text><path d="M1057.5 469V473" stroke="#fff" stroke-width="1"/><text x="1056.5" y="480.5" fill="#fff" stroke="#fff" stroke-width=".25" font-size="9.5">9 Oct 13:30</text><path d="M1121.5 469V473" stroke="#fff" stroke-width="1"/><text x="1120.5" y="480.5" fill="#fff" stroke="#fff" stroke-width=".25" font-size="9.5">9 Oct 21:30</text><path d="M1185.5 469V473" stroke="#fff" stroke-width="1"/><text x="1184.5" y="480.5" fill="#fff" stroke="#fff" stroke-width=".25" font-size="9.5">10 Oct 06:30</text><path d="M1249.5 469V473" stroke="#fff" stroke-width="1"/><text x="1248.5" y="480.5" fill="#fff" stroke="#fff" stroke-width=".25" font-size="9.5">10 Oct 14:30</text><path d="M1313.5 469V473" stroke="#fff" stroke-width="1"/><text x="1312.5" y="480.5" fill="#fff" stroke="#fff" stroke-width=".25" font-size="9.5">10 Oct 22:30</text><path d="M1377.5 469V473" stroke="#fff" stroke-width="1"/><text x="1376.5" y="480.5" fill="#fff" stroke="#fff" stroke-width=".25" font-size="9.5">11 Oct 07:30</text></g><path d="M996 399h8l-4 4.500z" fill="#fff" shape-rendering="geometricPrecision"/><text x="1008" y="403.5" fill="#fff" stroke="#fff" stroke-width=".25" font-size="9.2">JP225Cash,M30</text></svg></div></div><div class="cw " style="left:0px;top:424px;width:487px;height:141px">
<div class="cwi"><svg width="16" height="16" viewBox="0 0 16 16"><rect x="0.5" y="1.500" width="10" height="9" rx="1" fill="#fff" stroke="#5b9bd5"/><rect x="1" y="2" width="9" height="2" fill="#5b9bd5"/><path d="M2 7h2l1-1.500 1 2.500 1-1h2" fill="none" stroke="#5b9bd5"/><rect x="4.500" y="6.500" width="10" height="8" rx="1" fill="#fff" stroke="#4a8ed0"/><path d="M6 10l1.500 3 1.500-3 1.500 3 1.500-2.500h1" fill="none" stroke="#4a8ed0"/></svg></div><div class="cwt">GBPUSD,Daily</div>
<div class="cb b1"><i class="mn"></i></div><div class="cb b2"><i class="mx"></i></div><div class="cb b3"><svg width="13" height="11" viewBox="0 0 13 11"><path d="M3.200 2.600L9.800 8.400M9.800 2.600L3.200 8.400" stroke="#4a5666" stroke-width="4.200" stroke-linecap="square"/><path d="M3.200 2.600L9.800 8.400M9.800 2.600L3.200 8.400" stroke="#fff" stroke-width="2.300" stroke-linecap="square"/></svg></div>
<div class="cv"><svg width="467" height="99" viewBox="16 531 467 99"><g shape-rendering="crispEdges" fill="none"><path d="M19 573.5H441" stroke="#d6d6d6" stroke-width="1" stroke-dasharray="3 3"/><path d="M19 583.5H441" stroke="#d6d6d6" stroke-width="1" stroke-dasharray="3 3"/><path d="M19 594.5H441" stroke="#d6d6d6" stroke-width="1" stroke-dasharray="3 3"/><path d="M19 604.5H441" stroke="#d6d6d6" stroke-width="1" stroke-dasharray="3 3"/><path d="M19 562.5H441" stroke="#d6d6d6" stroke-width="1" stroke-dasharray="3 3"/><path d="M19 552.5H441" stroke="#d6d6d6" stroke-width="1" stroke-dasharray="3 3"/><path d="M19 541.5H441" stroke="#d6d6d6" stroke-width="1" stroke-dasharray="3 3"/><path d="M55.5 534V609" stroke="#d6d6d6" stroke-width="1" stroke-dasharray="3 3" stroke-dashoffset="1"/><path d="M143.5 534V609" stroke="#d6d6d6" stroke-width="1" stroke-dasharray="3 3" stroke-dashoffset="1"/><path d="M227.5 534V609" stroke="#d6d6d6" stroke-width="1" stroke-dasharray="3 3" stroke-dashoffset="1"/><path d="M319.5 534V609" stroke="#d6d6d6" stroke-width="1" stroke-dasharray="3 3" stroke-dashoffset="1"/><path d="M403.5 534V609" stroke="#d6d6d6" stroke-width="1" stroke-dasharray="3 3" stroke-dashoffset="1"/></g><g shape-rendering="crispEdges"><path d="M23.5 563V568" stroke="#3cd83c"/><path d="M22 565.5H25" stroke="#3cd83c"/><path d="M27.5 565V567" stroke="#3cd83c"/><path d="M26 566.5H29" stroke="#3cd83c"/><path d="M31.5 566V569" stroke="#3cd83c"/><path d="M30 567.5H33" stroke="#3cd83c"/><path d="M35.5 567V573" stroke="#3cd83c"/><rect x="34.5" y="568.5" width="2" height="2" fill="#fff" stroke="#3cd83c"/><path d="M39.5 569V586" stroke="#3cd83c"/><rect x="38.5" y="570.5" width="2" height="7" fill="#fff" stroke="#3cd83c"/><path d="M43.5 575V584" stroke="#3cd83c"/><rect x="42.5" y="578.5" width="2" height="3" fill="#fff" stroke="#3cd83c"/><path d="M47.5 574V588" stroke="#3cd83c"/><rect x="46.5" y="575.5" width="2" height="5" fill="#000" stroke="#3cd83c"/><path d="M51.5 573V581" stroke="#3cd83c"/><rect x="50.5" y="575.5" width="2" height="2" fill="#000" stroke="#3cd83c"/><path d="M55.5 573V579" stroke="#3cd83c"/><rect x="54.5" y="574.5" width="2" height="2" fill="#000" stroke="#3cd83c"/><path d="M59.5 572V578" stroke="#3cd83c"/><rect x="58.5" y="574.5" width="2" height="1" fill="#000" stroke="#3cd83c"/><path d="M63.5 572V577" stroke="#3cd83c"/><rect x="62.5" y="573.5" width="2" height="1" fill="#000" stroke="#3cd83c"/><path d="M67.5 571V575" stroke="#3cd83c"/><path d="M66 573.5H69" stroke="#3cd83c"/><path d="M71.5 570V575" stroke="#3cd83c"/><path d="M70 572.5H73" stroke="#3cd83c"/><path d="M75.5 568V573" stroke="#3cd83c"/><rect x="74.5" y="570.5" width="2" height="1" fill="#000" stroke="#3cd83c"/><path d="M79.5 574V603" stroke="#3cd83c"/><rect x="78.5" y="575.5" width="2" height="25" fill="#fff" stroke="#3cd83c"/><path d="M83.5 590V601" stroke="#3cd83c"/><rect x="82.5" y="593.5" width="2" height="6" fill="#fff" stroke="#3cd83c"/><path d="M87.5 585V600" stroke="#3cd83c"/><rect x="86.5" y="590.5" width="2" height="7" fill="#000" stroke="#3cd83c"/><path d="M91.5 583V594" stroke="#3cd83c"/><rect x="90.5" y="585.5" width="2" height="4" fill="#000" stroke="#3cd83c"/><path d="M95.5 583V596" stroke="#3cd83c"/><rect x="94.5" y="585.5" width="2" height="2" fill="#000" stroke="#3cd83c"/><path d="M99.5 583V591" stroke="#3cd83c"/><rect x="98.5" y="586.5" width="2" height="3" fill="#fff" stroke="#3cd83c"/><path d="M103.5 584V591" stroke="#3cd83c"/><rect x="102.5" y="585.5" width="2" height="3" fill="#000" stroke="#3cd83c"/><path d="M107.5 589V604" stroke="#3cd83c"/><rect x="106.5" y="590.5" width="2" height="12" fill="#fff" stroke="#3cd83c"/><path d="M111.5 596V606" stroke="#3cd83c"/><rect x="110.5" y="599.5" width="2" height="4" fill="#fff" stroke="#3cd83c"/><path d="M115.5 594V600" stroke="#3cd83c"/><rect x="114.5" y="596.5" width="2" height="3" fill="#000" stroke="#3cd83c"/><path d="M119.5 590V598" stroke="#3cd83c"/><rect x="118.5" y="592.5" width="2" height="3" fill="#000" stroke="#3cd83c"/><path d="M123.5 589V596" stroke="#3cd83c"/><rect x="122.5" y="591.5" width="2" height="2" fill="#000" stroke="#3cd83c"/><path d="M127.5 584V594" stroke="#3cd83c"/><rect x="126.5" y="585.5" width="2" height="7" fill="#000" stroke="#3cd83c"/><path d="M131.5 573V586" stroke="#3cd83c"/><rect x="130.5" y="574.5" width="2" height="10" fill="#000" stroke="#3cd83c"/><path d="M135.5 570V575" stroke="#3cd83c"/><rect x="134.5" y="571.5" width="2" height="2" fill="#000" stroke="#3cd83c"/><path d="M139.5 569V574" stroke="#3cd83c"/><path d="M138 571.5H141" stroke="#3cd83c"/><path d="M143.5 571V574" stroke="#3cd83c"/><path d="M142 572.5H145" stroke="#3cd83c"/><path d="M147.5 572V575" stroke="#3cd83c"/><path d="M146 572.5H149" stroke="#3cd83c"/><path d="M151.5 570V575" stroke="#3cd83c"/><rect x="150.5" y="571.5" width="2" height="2" fill="#000" stroke="#3cd83c"/><path d="M155.5 571V575" stroke="#3cd83c"/><rect x="154.5" y="572.5" width="2" height="2" fill="#fff" stroke="#3cd83c"/><path d="M159.5 572V576" stroke="#3cd83c"/><rect x="158.5" y="573.5" width="2" height="1" fill="#fff" stroke="#3cd83c"/><path d="M163.5 573V580" stroke="#3cd83c"/><rect x="162.5" y="575.5" width="2" height="2" fill="#fff" stroke="#3cd83c"/><path d="M167.5 574V581" stroke="#3cd83c"/><rect x="166.5" y="575.5" width="2" height="3" fill="#fff" stroke="#3cd83c"/><path d="M171.5 575V582" stroke="#3cd83c"/><rect x="170.5" y="576.5" width="2" height="3" fill="#fff" stroke="#3cd83c"/><path d="M175.5 571V578" stroke="#3cd83c"/><rect x="174.5" y="573.5" width="2" height="2" fill="#000" stroke="#3cd83c"/><path d="M179.5 570V576" stroke="#3cd83c"/><rect x="178.5" y="572.5" width="2" height="1" fill="#000" stroke="#3cd83c"/><path d="M183.5 570V572" stroke="#3cd83c"/><path d="M182 571.5H185" stroke="#3cd83c"/><path d="M187.5 567V573" stroke="#3cd83c"/><rect x="186.5" y="568.5" width="2" height="2" fill="#000" stroke="#3cd83c"/><path d="M191.5 565V571" stroke="#3cd83c"/><rect x="190.5" y="567.5" width="2" height="2" fill="#000" stroke="#3cd83c"/><path d="M199.5 566V571" stroke="#3cd83c"/><rect x="198.5" y="567.5" width="2" height="1" fill="#000" stroke="#3cd83c"/><path d="M203.5 567V570" stroke="#3cd83c"/><path d="M202 568.5H205" stroke="#3cd83c"/><path d="M207.5 566V571" stroke="#3cd83c"/><rect x="206.5" y="568.5" width="2" height="1" fill="#fff" stroke="#3cd83c"/><path d="M211.5 567V571" stroke="#3cd83c"/><rect x="210.5" y="567.5" width="2" height="1" fill="#000" stroke="#3cd83c"/><path d="M215.5 566V571" stroke="#3cd83c"/><path d="M214 568.5H217" stroke="#3cd83c"/><path d="M219.5 567V570" stroke="#3cd83c"/><path d="M218 568.5H221" stroke="#3cd83c"/><path d="M223.5 569V571" stroke="#3cd83c"/><path d="M222 569.5H225" stroke="#3cd83c"/><path d="M227.5 568V574" stroke="#3cd83c"/><rect x="226.5" y="569.5" width="2" height="2" fill="#fff" stroke="#3cd83c"/><path d="M231.5 569V574" stroke="#3cd83c"/><rect x="230.5" y="569.5" width="2" height="2" fill="#fff" stroke="#3cd83c"/><path d="M235.5 569V573" stroke="#3cd83c"/><path d="M234 570.5H237" stroke="#3cd83c"/><path d="M239.5 569V572" stroke="#3cd83c"/><path d="M238 570.5H241" stroke="#3cd83c"/><path d="M243.5 569V574" stroke="#3cd83c"/><rect x="242.5" y="571.5" width="2" height="1" fill="#fff" stroke="#3cd83c"/><path d="M247.5 572V574" stroke="#3cd83c"/><path d="M246 573.5H249" stroke="#3cd83c"/><path d="M251.5 573V577" stroke="#3cd83c"/><rect x="250.5" y="573.5" width="2" height="1" fill="#fff" stroke="#3cd83c"/><path d="M255.5 573V577" stroke="#3cd83c"/><rect x="254.5" y="574.5" width="2" height="1" fill="#fff" stroke="#3cd83c"/><path d="M259.5 573V577" stroke="#3cd83c"/><path d="M258 575.5H261" stroke="#3cd83c"/><path d="M263.5 574V578" stroke="#3cd83c"/><rect x="262.5" y="574.5" width="2" height="2" fill="#fff" stroke="#3cd83c"/><path d="M267.5 573V579" stroke="#3cd83c"/><rect x="266.5" y="574.5" width="2" height="3" fill="#fff" stroke="#3cd83c"/><path d="M271.5 574V579" stroke="#3cd83c"/><rect x="270.5" y="575.5" width="2" height="1" fill="#000" stroke="#3cd83c"/><path d="M275.5 574V579" stroke="#3cd83c"/><rect x="274.5" y="575.5" width="2" height="2" fill="#fff" stroke="#3cd83c"/><path d="M279.5 573V580" stroke="#3cd83c"/><rect x="278.5" y="574.5" width="2" height="3" fill="#000" stroke="#3cd83c"/><path d="M283.5 574V579" stroke="#3cd83c"/><rect x="282.5" y="575.5" width="2" height="1" fill="#000" stroke="#3cd83c"/><path d="M287.5 573V582" stroke="#3cd83c"/><rect x="286.5" y="574.5" width="2" height="6" fill="#fff" stroke="#3cd83c"/><path d="M291.5 580V586" stroke="#3cd83c"/><rect x="290.5" y="581.5" width="2" height="2" fill="#fff" stroke="#3cd83c"/><path d="M295.5 581V587" stroke="#3cd83c"/><rect x="294.5" y="582.5" width="2" height="1" fill="#fff" stroke="#3cd83c"/><path d="M299.5 573V584" stroke="#3cd83c"/><rect x="298.5" y="575.5" width="2" height="8" fill="#000" stroke="#3cd83c"/><path d="M303.5 572V578" stroke="#3cd83c"/><rect x="302.5" y="573.5" width="2" height="2" fill="#000" stroke="#3cd83c"/><path d="M307.5 571V576" stroke="#3cd83c"/><rect x="306.5" y="572.5" width="2" height="2" fill="#000" stroke="#3cd83c"/><path d="M311.5 573V576" stroke="#3cd83c"/><rect x="310.5" y="573.5" width="2" height="1" fill="#fff" stroke="#3cd83c"/><path d="M315.5 573V579" stroke="#3cd83c"/><rect x="314.5" y="573.5" width="2" height="3" fill="#fff" stroke="#3cd83c"/><path d="M319.5 573V579" stroke="#3cd83c"/><rect x="318.5" y="573.5" width="2" height="4" fill="#fff" stroke="#3cd83c"/><path d="M323.5 572V574" stroke="#3cd83c"/><path d="M322 573.5H325" stroke="#3cd83c"/><path d="M327.5 569V575" stroke="#3cd83c"/><rect x="326.5" y="571.5" width="2" height="2" fill="#000" stroke="#3cd83c"/><path d="M331.5 569V573" stroke="#3cd83c"/><rect x="330.5" y="569.5" width="2" height="1" fill="#000" stroke="#3cd83c"/><path d="M335.5 568V570" stroke="#3cd83c"/><path d="M334 568.5H337" stroke="#3cd83c"/><path d="M339.5 566V568" stroke="#3cd83c"/><path d="M338 566.5H341" stroke="#3cd83c"/><path d="M343.5 562V567" stroke="#3cd83c"/><rect x="342.5" y="563.5" width="2" height="1" fill="#000" stroke="#3cd83c"/><path d="M347.5 560V564" stroke="#3cd83c"/><rect x="346.5" y="560.5" width="2" height="2" fill="#000" stroke="#3cd83c"/><path d="M351.5 556V562" stroke="#3cd83c"/><rect x="350.5" y="558.5" width="2" height="2" fill="#000" stroke="#3cd83c"/><path d="M355.5 560V563" stroke="#3cd83c"/><path d="M354 560.5H357" stroke="#3cd83c"/><path d="M359.5 560V565" stroke="#3cd83c"/><rect x="358.5" y="561.5" width="2" height="2" fill="#fff" stroke="#3cd83c"/><path d="M363.5 562V567" stroke="#3cd83c"/><path d="M362 564.5H365" stroke="#3cd83c"/><path d="M367.5 563V567" stroke="#3cd83c"/><path d="M366 565.5H369" stroke="#3cd83c"/><path d="M371.5 563V568" stroke="#3cd83c"/><rect x="370.5" y="564.5" width="2" height="1" fill="#000" stroke="#3cd83c"/><path d="M375.5 563V568" stroke="#3cd83c"/><rect x="374.5" y="565.5" width="2" height="2" fill="#fff" stroke="#3cd83c"/><path d="M379.5 566V570" stroke="#3cd83c"/><rect x="378.5" y="567.5" width="2" height="1" fill="#fff" stroke="#3cd83c"/><path d="M383.5 564V569" stroke="#3cd83c"/><path d="M382 566.5H385" stroke="#3cd83c"/><path d="M387.5 567V571" stroke="#3cd83c"/><rect x="386.5" y="567.5" width="2" height="1" fill="#fff" stroke="#3cd83c"/><path d="M391.5 566V571" stroke="#3cd83c"/><rect x="390.5" y="568.5" width="2" height="2" fill="#fff" stroke="#3cd83c"/><path d="M395.5 568V572" stroke="#3cd83c"/><rect x="394.5" y="569.5" width="2" height="2" fill="#fff" stroke="#3cd83c"/><path d="M399.5 567V573" stroke="#3cd83c"/><rect x="398.5" y="569.5" width="2" height="1" fill="#000" stroke="#3cd83c"/><path d="M403.5 569V572" stroke="#3cd83c"/><rect x="402.5" y="570.5" width="2" height="1" fill="#fff" stroke="#3cd83c"/><path d="M407.5 570V573" stroke="#3cd83c"/><rect x="406.5" y="571.5" width="2" height="1" fill="#fff" stroke="#3cd83c"/><path d="M411.5 569V574" stroke="#3cd83c"/><rect x="410.5" y="570.5" width="2" height="1" fill="#000" stroke="#3cd83c"/><path d="M415.5 571V574" stroke="#3cd83c"/><path d="M414 572.5H417" stroke="#3cd83c"/><path d="M419.5 569V574" stroke="#3cd83c"/><rect x="418.5" y="571.5" width="2" height="2" fill="#000" stroke="#3cd83c"/><path d="M423.5 572V575" stroke="#3cd83c"/><path d="M422 573.5H425" stroke="#3cd83c"/><path d="M427.5 571V573" stroke="#3cd83c"/><path d="M426 571.5H429" stroke="#3cd83c"/><path d="M431.5 570V572" stroke="#3cd83c"/><path d="M430 570.5H433" stroke="#3cd83c"/></g><path d="M18.82 584.66L50.18 584.66L75.26 583.9L100.35 584.66L117.91 585.16L150.53 583.15L188.16 581.39L225.79 578.89L265.93 577.63L267.25 577.2L317.8 577.2L334.75 576.32L351.69 574.32L365.25 572.63L385.59 568.39L431.36 561.61" fill="none" stroke="#cc48cc" stroke-width="1.0" stroke-linejoin="round" shape-rendering="crispEdges"/><path d="M18.82 598.2L50.18 593.94L80.28 590.18L112.9 588.92L130.46 587.67L150.53 585.16L188.16 581.39L225.79 577.63L240.84 575.12L250.88 573.12L301.35 565.09L431.51 550.34" fill="none" stroke="#62dce4" stroke-width="1.0" stroke-linejoin="round" shape-rendering="crispEdges"/><path d="M18.82 573.87L37.63 571.36L62.72 572.11L80.28 573.87L92.82 577.63L107.88 582.65L122.93 586.41L130.46 583.9L143.3 578.89L160.56 575.12L175.61 573.12L200.7 570.11L250.88 572.61L301.35 575.12L351.23 567.6L431.51 562.58" fill="none" stroke="#f0e68c" stroke-width="1.0" stroke-linejoin="round" shape-rendering="crispEdges"/><g shape-rendering="crispEdges" fill="none"><path d="M18.5 609.5V533.5H441.5V609.5H18.5" stroke="#fff"/></g><rect x="442" y="531" width="41" height="99" fill="#000"/><rect x="16" y="610" width="467" height="20" fill="#000"/><g shape-rendering="crispEdges"><rect x="443" y="531" width="40" height="78" fill="#c0c0c0"/><path d="M443 609.5H483" stroke="#fff" stroke-width="1" stroke-dasharray="3 3"/><rect x="443" y="568" width="40" height="11" fill="#c8c8c8"/><text x="446" y="576.7" fill="#000" stroke="#000" stroke-width=".25" font-size="9">1.29000</text><rect x="443" y="578" width="40" height="11" fill="#c8c8c8"/><text x="446" y="586.7" fill="#000" stroke="#000" stroke-width=".25" font-size="9">1.28000</text><rect x="443" y="588.5" width="40" height="11" fill="#c8c8c8"/><text x="446" y="597.2" fill="#000" stroke="#000" stroke-width=".25" font-size="9">1.27000</text><rect x="443" y="599" width="40" height="11" fill="#c8c8c8"/><text x="446" y="607.7" fill="#000" stroke="#000" stroke-width=".25" font-size="9">1.26000</text><path d="M19.5 610V614" stroke="#fff" stroke-width="1"/><text x="18.5" y="621.5" fill="#fff" stroke="#fff" stroke-width=".25" font-size="9.5">19 May 2017</text><path d="M83.5 610V614" stroke="#fff" stroke-width="1"/><text x="82.5" y="621.5" fill="#fff" stroke="#fff" stroke-width=".25" font-size="9.5">12 Jun 2017</text><path d="M147.5 610V614" stroke="#fff" stroke-width="1"/><text x="146.5" y="621.5" fill="#fff" stroke="#fff" stroke-width=".25" font-size="9.5">4 Jul 2017</text><path d="M211.5 610V614" stroke="#fff" stroke-width="1"/><text x="210.5" y="621.5" fill="#fff" stroke="#fff" stroke-width=".25" font-size="9.5">26 Jul 2017</text><path d="M275.5 610V614" stroke="#fff" stroke-width="1"/><text x="274.5" y="621.5" fill="#fff" stroke="#fff" stroke-width=".25" font-size="9.5">17 Aug 2017</text><path d="M339.5 610V614" stroke="#fff" stroke-width="1"/><text x="338.5" y="621.5" fill="#fff" stroke="#fff" stroke-width=".25" font-size="9.5">8 Sep 2017</text><path d="M403.5 610V614" stroke="#fff" stroke-width="1"/><text x="402.5" y="621.5" fill="#fff" stroke="#fff" stroke-width=".25" font-size="9.5">2 Oct 2017</text></g></svg></div></div><div class="cw " style="left:487px;top:424px;width:487px;height:141px">
<div class="cwi"><svg width="16" height="16" viewBox="0 0 16 16"><rect x="0.5" y="1.500" width="10" height="9" rx="1" fill="#fff" stroke="#5b9bd5"/><rect x="1" y="2" width="9" height="2" fill="#5b9bd5"/><path d="M2 7h2l1-1.500 1 2.500 1-1h2" fill="none" stroke="#5b9bd5"/><rect x="4.500" y="6.500" width="10" height="8" rx="1" fill="#fff" stroke="#4a8ed0"/><path d="M6 10l1.500 3 1.500-3 1.500 3 1.500-2.500h1" fill="none" stroke="#4a8ed0"/></svg></div><div class="cwt">GOLD,H1</div>
<div class="cb b1"><i class="mn"></i></div><div class="cb b2"><i class="mx"></i></div><div class="cb b3"><svg width="13" height="11" viewBox="0 0 13 11"><path d="M3.200 2.600L9.800 8.400M9.800 2.600L3.200 8.400" stroke="#4a5666" stroke-width="4.200" stroke-linecap="square"/><path d="M3.200 2.600L9.800 8.400M9.800 2.600L3.200 8.400" stroke="#fff" stroke-width="2.300" stroke-linecap="square"/></svg></div>
<div class="cv"><svg width="467" height="99" viewBox="503 531 467 99"><g shape-rendering="crispEdges" fill="none"><path d="M506 540.5H927" stroke="#d6d6d6" stroke-width="1" stroke-dasharray="3 3"/><path d="M506 573.5H927" stroke="#d6d6d6" stroke-width="1" stroke-dasharray="3 3"/><path d="M506 606.5H927" stroke="#d6d6d6" stroke-width="1" stroke-dasharray="3 3"/><path d="M538.5 534V609" stroke="#d6d6d6" stroke-width="1" stroke-dasharray="3 3" stroke-dashoffset="1"/><path d="M570.5 534V609" stroke="#d6d6d6" stroke-width="1" stroke-dasharray="3 3" stroke-dashoffset="1"/><path d="M602.5 534V609" stroke="#d6d6d6" stroke-width="1" stroke-dasharray="3 3" stroke-dashoffset="1"/><path d="M634.5 534V609" stroke="#d6d6d6" stroke-width="1" stroke-dasharray="3 3" stroke-dashoffset="1"/><path d="M666.5 534V609" stroke="#d6d6d6" stroke-width="1" stroke-dasharray="3 3" stroke-dashoffset="1"/><path d="M698.5 534V609" stroke="#d6d6d6" stroke-width="1" stroke-dasharray="3 3" stroke-dashoffset="1"/><path d="M730.5 534V609" stroke="#d6d6d6" stroke-width="1" stroke-dasharray="3 3" stroke-dashoffset="1"/><path d="M762.5 534V609" stroke="#d6d6d6" stroke-width="1" stroke-dasharray="3 3" stroke-dashoffset="1"/><path d="M794.5 534V609" stroke="#d6d6d6" stroke-width="1" stroke-dasharray="3 3" stroke-dashoffset="1"/><path d="M826.5 534V609" stroke="#d6d6d6" stroke-width="1" stroke-dasharray="3 3" stroke-dashoffset="1"/><path d="M858.5 534V609" stroke="#d6d6d6" stroke-width="1" stroke-dasharray="3 3" stroke-dashoffset="1"/><path d="M890.5 534V609" stroke="#d6d6d6" stroke-width="1" stroke-dasharray="3 3" stroke-dashoffset="1"/><path d="M922.5 534V609" stroke="#d6d6d6" stroke-width="1" stroke-dasharray="3 3" stroke-dashoffset="1"/><path d="M510.5 534V609" stroke="#d6d6d6" stroke-width="1" stroke-dasharray="3 3" stroke-dashoffset="1"/><path d="M602.5 534V609" stroke="#d6d6d6" stroke-width="1" stroke-dasharray="3 3" stroke-dashoffset="1"/><path d="M694.5 534V609" stroke="#d6d6d6" stroke-width="1" stroke-dasharray="3 3" stroke-dashoffset="1"/><path d="M786.5 534V609" stroke="#d6d6d6" stroke-width="1" stroke-dasharray="3 3" stroke-dashoffset="1"/><path d="M878.5 534V609" stroke="#d6d6d6" stroke-width="1" stroke-dasharray="3 3" stroke-dashoffset="1"/><path d="M506 549.5H927" stroke="#9aa4b4" stroke-width="1"/></g><g shape-rendering="crispEdges"><path d="M506.5 576V579" stroke="#3cd83c"/><path d="M505 577.5H508" stroke="#3cd83c"/><path d="M510.5 575V582" stroke="#3cd83c"/><rect x="509.5" y="577.5" width="2" height="2" fill="#fff" stroke="#3cd83c"/><path d="M514.5 578V580" stroke="#3cd83c"/><path d="M513 579.5H516" stroke="#3cd83c"/><path d="M518.5 577V582" stroke="#3cd83c"/><path d="M517 579.5H520" stroke="#3cd83c"/><path d="M522.5 579V582" stroke="#3cd83c"/><path d="M521 580.5H524" stroke="#3cd83c"/><path d="M526.5 578V582" stroke="#3cd83c"/><rect x="525.5" y="579.5" width="2" height="1" fill="#000" stroke="#3cd83c"/><path d="M530.5 577V580" stroke="#3cd83c"/><rect x="529.5" y="578.5" width="2" height="1" fill="#000" stroke="#3cd83c"/><path d="M534.5 575V581" stroke="#3cd83c"/><rect x="533.5" y="577.5" width="2" height="2" fill="#000" stroke="#3cd83c"/><path d="M538.5 576V580" stroke="#3cd83c"/><path d="M537 577.5H540" stroke="#3cd83c"/><path d="M542.5 576V582" stroke="#3cd83c"/><rect x="541.5" y="577.5" width="2" height="2" fill="#fff" stroke="#3cd83c"/><path d="M546.5 574V578" stroke="#3cd83c"/><rect x="545.5" y="576.5" width="2" height="1" fill="#000" stroke="#3cd83c"/><path d="M550.5 572V579" stroke="#3cd83c"/><rect x="549.5" y="574.5" width="2" height="2" fill="#000" stroke="#3cd83c"/><path d="M554.5 571V576" stroke="#3cd83c"/><rect x="553.5" y="572.5" width="2" height="2" fill="#000" stroke="#3cd83c"/><path d="M558.5 571V575" stroke="#3cd83c"/><path d="M557 573.5H560" stroke="#3cd83c"/><path d="M562.5 571V574" stroke="#3cd83c"/><path d="M561 573.5H564" stroke="#3cd83c"/><path d="M566.5 572V576" stroke="#3cd83c"/><rect x="565.5" y="573.5" width="2" height="1" fill="#fff" stroke="#3cd83c"/><path d="M570.5 573V578" stroke="#3cd83c"/><rect x="569.5" y="575.5" width="2" height="1" fill="#fff" stroke="#3cd83c"/><path d="M570.5 574V583" stroke="#3cd83c"/><rect x="569.5" y="576.5" width="2" height="5" fill="#fff" stroke="#3cd83c"/><path d="M574.5 577V582" stroke="#3cd83c"/><rect x="573.5" y="578.5" width="2" height="2" fill="#fff" stroke="#3cd83c"/><path d="M578.5 579V583" stroke="#3cd83c"/><rect x="577.5" y="579.5" width="2" height="3" fill="#fff" stroke="#3cd83c"/><path d="M582.5 581V584" stroke="#3cd83c"/><path d="M581 581.5H584" stroke="#3cd83c"/><path d="M586.5 582V589" stroke="#3cd83c"/><rect x="585.5" y="582.5" width="2" height="5" fill="#fff" stroke="#3cd83c"/><path d="M590.5 585V591" stroke="#3cd83c"/><rect x="589.5" y="585.5" width="2" height="4" fill="#fff" stroke="#3cd83c"/><path d="M594.5 590V595" stroke="#3cd83c"/><rect x="593.5" y="590.5" width="2" height="1" fill="#fff" stroke="#3cd83c"/><path d="M598.5 590V596" stroke="#3cd83c"/><path d="M597 591.5H600" stroke="#3cd83c"/><path d="M602.5 589V593" stroke="#3cd83c"/><path d="M601 590.5H604" stroke="#3cd83c"/><path d="M606.5 589V593" stroke="#3cd83c"/><path d="M605 590.5H608" stroke="#3cd83c"/><path d="M610.5 589V593" stroke="#3cd83c"/><path d="M609 590.5H612" stroke="#3cd83c"/><path d="M614.5 588V592" stroke="#3cd83c"/><rect x="613.5" y="589.5" width="2" height="1" fill="#000" stroke="#3cd83c"/><path d="M618.5 588V592" stroke="#3cd83c"/><path d="M617 589.5H620" stroke="#3cd83c"/><path d="M622.5 589V592" stroke="#3cd83c"/><rect x="621.5" y="589.5" width="2" height="1" fill="#fff" stroke="#3cd83c"/><path d="M626.5 590V594" stroke="#3cd83c"/><path d="M625 591.5H628" stroke="#3cd83c"/><path d="M630.5 591V594" stroke="#3cd83c"/><path d="M629 591.5H632" stroke="#3cd83c"/><path d="M634.5 589V594" stroke="#3cd83c"/><path d="M633 591.5H636" stroke="#3cd83c"/><path d="M638.5 589V594" stroke="#3cd83c"/><rect x="637.5" y="590.5" width="2" height="1" fill="#000" stroke="#3cd83c"/><path d="M642.5 590V592" stroke="#3cd83c"/><path d="M641 590.5H644" stroke="#3cd83c"/><path d="M646.5 589V593" stroke="#3cd83c"/><rect x="645.5" y="590.5" width="2" height="1" fill="#000" stroke="#3cd83c"/><path d="M650.5 588V592" stroke="#3cd83c"/><rect x="649.5" y="589.5" width="2" height="1" fill="#000" stroke="#3cd83c"/><path d="M654.5 588V592" stroke="#3cd83c"/><rect x="653.5" y="589.5" width="2" height="1" fill="#000" stroke="#3cd83c"/><path d="M658.5 585V601" stroke="#3cd83c"/><rect x="657.5" y="590.5" width="2" height="8" fill="#fff" stroke="#3cd83c"/><path d="M662.5 596V607" stroke="#3cd83c"/><rect x="661.5" y="598.5" width="2" height="8" fill="#fff" stroke="#3cd83c"/><path d="M666.5 579V607" stroke="#3cd83c"/><rect x="665.5" y="582.5" width="2" height="24" fill="#000" stroke="#3cd83c"/><path d="M670.5 576V586" stroke="#3cd83c"/><rect x="669.5" y="578.5" width="2" height="3" fill="#000" stroke="#3cd83c"/><path d="M674.5 577V582" stroke="#3cd83c"/><rect x="673.5" y="578.5" width="2" height="2" fill="#000" stroke="#3cd83c"/><path d="M678.5 578V583" stroke="#3cd83c"/><rect x="677.5" y="579.5" width="2" height="1" fill="#fff" stroke="#3cd83c"/><path d="M682.5 578V582" stroke="#3cd83c"/><rect x="681.5" y="579.5" width="2" height="1" fill="#000" stroke="#3cd83c"/><path d="M686.5 577V581" stroke="#3cd83c"/><rect x="685.5" y="578.5" width="2" height="1" fill="#000" stroke="#3cd83c"/><path d="M690.5 574V579" stroke="#3cd83c"/><rect x="689.5" y="575.5" width="2" height="3" fill="#000" stroke="#3cd83c"/><path d="M694.5 573V578" stroke="#3cd83c"/><rect x="693.5" y="573.5" width="2" height="4" fill="#000" stroke="#3cd83c"/><path d="M698.5 573V578" stroke="#3cd83c"/><rect x="697.5" y="573.5" width="2" height="2" fill="#000" stroke="#3cd83c"/><path d="M702.5 573V577" stroke="#3cd83c"/><rect x="701.5" y="574.5" width="2" height="1" fill="#000" stroke="#3cd83c"/><path d="M706.5 573V577" stroke="#3cd83c"/><rect x="705.5" y="573.5" width="2" height="2" fill="#000" stroke="#3cd83c"/><path d="M854.5 538V546" stroke="#3cd83c"/><rect x="853.5" y="538.5" width="2" height="6" fill="#000" stroke="#3cd83c"/><path d="M858.5 543V548" stroke="#3cd83c"/><rect x="857.5" y="544.5" width="2" height="2" fill="#fff" stroke="#3cd83c"/><path d="M862.5 542V550" stroke="#3cd83c"/><rect x="861.5" y="546.5" width="2" height="2" fill="#fff" stroke="#3cd83c"/><path d="M866.5 545V551" stroke="#3cd83c"/><rect x="865.5" y="547.5" width="2" height="2" fill="#fff" stroke="#3cd83c"/><path d="M870.5 548V554" stroke="#3cd83c"/><rect x="869.5" y="548.5" width="2" height="3" fill="#fff" stroke="#3cd83c"/><path d="M874.5 549V553" stroke="#3cd83c"/><path d="M873 550.5H876" stroke="#3cd83c"/><path d="M878.5 548V551" stroke="#3cd83c"/><path d="M877 549.5H880" stroke="#3cd83c"/><path d="M882.5 546V551" stroke="#3cd83c"/><path d="M881 548.5H884" stroke="#3cd83c"/><path d="M886.5 543V548" stroke="#3cd83c"/><rect x="885.5" y="544.5" width="2" height="2" fill="#000" stroke="#3cd83c"/><path d="M890.5 543V551" stroke="#3cd83c"/><rect x="889.5" y="544.5" width="2" height="5" fill="#fff" stroke="#3cd83c"/><path d="M894.5 548V554" stroke="#3cd83c"/><rect x="893.5" y="549.5" width="2" height="2" fill="#fff" stroke="#3cd83c"/><path d="M898.5 549V552" stroke="#3cd83c"/><path d="M897 551.5H900" stroke="#3cd83c"/><path d="M902.5 549V553" stroke="#3cd83c"/><rect x="901.5" y="550.5" width="2" height="2" fill="#fff" stroke="#3cd83c"/><path d="M906.5 549V555" stroke="#3cd83c"/><rect x="905.5" y="550.5" width="2" height="2" fill="#000" stroke="#3cd83c"/><path d="M910.5 547V551" stroke="#3cd83c"/><path d="M909 549.5H912" stroke="#3cd83c"/><path d="M914.5 548V553" stroke="#3cd83c"/><rect x="913.5" y="549.5" width="2" height="1" fill="#fff" stroke="#3cd83c"/><path d="M918.5 547V550" stroke="#3cd83c"/><path d="M917 548.5H920" stroke="#3cd83c"/><path d="M710.5 563V568" stroke="#3cd83c"/><rect x="709.5" y="565.5" width="2" height="1" fill="#000" stroke="#3cd83c"/><path d="M714.5 558V565" stroke="#3cd83c"/><rect x="713.5" y="561.5" width="2" height="2" fill="#fff" stroke="#3cd83c"/><path d="M718.5 555V562" stroke="#3cd83c"/><rect x="717.5" y="556.5" width="2" height="3" fill="#fff" stroke="#3cd83c"/><path d="M722.5 553V558" stroke="#3cd83c"/><path d="M721 555.5H724" stroke="#3cd83c"/><path d="M726.5 548V556" stroke="#3cd83c"/><rect x="725.5" y="551.5" width="2" height="3" fill="#fff" stroke="#3cd83c"/><path d="M730.5 552V557" stroke="#3cd83c"/><rect x="729.5" y="553.5" width="2" height="2" fill="#000" stroke="#3cd83c"/><path d="M734.5 551V557" stroke="#3cd83c"/><rect x="733.5" y="553.5" width="2" height="1" fill="#fff" stroke="#3cd83c"/><path d="M738.5 552V556" stroke="#3cd83c"/><path d="M737 554.5H740" stroke="#3cd83c"/><path d="M742.5 551V558" stroke="#3cd83c"/><rect x="741.5" y="553.5" width="2" height="2" fill="#000" stroke="#3cd83c"/><path d="M746.5 553V557" stroke="#3cd83c"/><rect x="745.5" y="554.5" width="2" height="1" fill="#fff" stroke="#3cd83c"/><path d="M750.5 553V560" stroke="#3cd83c"/><rect x="749.5" y="554.5" width="2" height="2" fill="#000" stroke="#3cd83c"/><path d="M754.5 551V558" stroke="#3cd83c"/><rect x="753.5" y="553.5" width="2" height="3" fill="#fff" stroke="#3cd83c"/><path d="M758.5 553V558" stroke="#3cd83c"/><path d="M757 555.5H760" stroke="#3cd83c"/><path d="M762.5 554V561" stroke="#3cd83c"/><rect x="761.5" y="556.5" width="2" height="2" fill="#000" stroke="#3cd83c"/><path d="M766.5 553V563" stroke="#3cd83c"/><rect x="765.5" y="556.5" width="2" height="3" fill="#fff" stroke="#3cd83c"/><path d="M770.5 555V559" stroke="#3cd83c"/><path d="M769 557.5H772" stroke="#3cd83c"/><path d="M774.5 553V562" stroke="#3cd83c"/><rect x="773.5" y="556.5" width="2" height="3" fill="#000" stroke="#3cd83c"/><path d="M778.5 554V559" stroke="#3cd83c"/><rect x="777.5" y="555.5" width="2" height="3" fill="#000" stroke="#3cd83c"/><path d="M782.5 551V558" stroke="#3cd83c"/><rect x="781.5" y="553.5" width="2" height="2" fill="#fff" stroke="#3cd83c"/><path d="M786.5 553V560" stroke="#3cd83c"/><rect x="785.5" y="554.5" width="2" height="3" fill="#fff" stroke="#3cd83c"/><path d="M790.5 551V557" stroke="#3cd83c"/><rect x="789.5" y="554.5" width="2" height="1" fill="#000" stroke="#3cd83c"/><path d="M794.5 549V556" stroke="#3cd83c"/><rect x="793.5" y="552.5" width="2" height="2" fill="#000" stroke="#3cd83c"/><path d="M798.5 551V556" stroke="#3cd83c"/><rect x="797.5" y="551.5" width="2" height="1" fill="#fff" stroke="#3cd83c"/><path d="M802.5 548V554" stroke="#3cd83c"/><rect x="801.5" y="549.5" width="2" height="2" fill="#fff" stroke="#3cd83c"/><path d="M806.5 547V554" stroke="#3cd83c"/><rect x="805.5" y="549.5" width="2" height="2" fill="#fff" stroke="#3cd83c"/><path d="M810.5 547V553" stroke="#3cd83c"/><path d="M809 550.5H812" stroke="#3cd83c"/><path d="M814.5 547V554" stroke="#3cd83c"/><rect x="813.5" y="549.5" width="2" height="3" fill="#000" stroke="#3cd83c"/><path d="M818.5 549V552" stroke="#3cd83c"/><path d="M817 550.5H820" stroke="#3cd83c"/><path d="M822.5 546V552" stroke="#3cd83c"/><rect x="821.5" y="547.5" width="2" height="2" fill="#fff" stroke="#3cd83c"/><path d="M826.5 546V550" stroke="#3cd83c"/><rect x="825.5" y="546.5" width="2" height="2" fill="#fff" stroke="#3cd83c"/><path d="M830.5 544V550" stroke="#3cd83c"/><rect x="829.5" y="546.5" width="2" height="2" fill="#000" stroke="#3cd83c"/><path d="M834.5 542V549" stroke="#3cd83c"/><rect x="833.5" y="544.5" width="2" height="3" fill="#000" stroke="#3cd83c"/><path d="M838.5 542V548" stroke="#3cd83c"/><rect x="837.5" y="543.5" width="2" height="2" fill="#000" stroke="#3cd83c"/><path d="M842.5 543V548" stroke="#3cd83c"/><rect x="841.5" y="544.5" width="2" height="1" fill="#000" stroke="#3cd83c"/><path d="M846.5 541V547" stroke="#3cd83c"/><rect x="845.5" y="543.5" width="2" height="2" fill="#fff" stroke="#3cd83c"/><path d="M850.5 541V548" stroke="#3cd83c"/><rect x="849.5" y="544.5" width="2" height="1" fill="#000" stroke="#3cd83c"/></g><path d="M854.58 564.41L882.54 563.35L899.49 562.37L917.63 561.36" fill="none" stroke="#cc48cc" stroke-width="1.0" stroke-linejoin="round" shape-rendering="crispEdges"/><path d="M506.32 575.51L545.85 575.51L579.75 575.51L603.47 577.2L622.12 579.41L647.54 581.1L664.49 582.25L681.44 582.25L698.39 581.1L715.34 579.41L732.29 577.2L745.3 576.53L791.32 573.22L854.58 564.07L917.63 559.32" fill="none" stroke="#62dce4" stroke-width="1.0" stroke-linejoin="round" shape-rendering="crispEdges"/><path d="M506.32 577.71L528.9 578.22L545.85 576.86L562.8 575.51L579.75 576.53L589.92 579.41L603.47 582.8L622.12 585.34L634.28 587.37L647.54 588.39L657.71 588.73L662.8 591.27L667.88 590.08L681.44 586.19L698.39 582.25L715.34 576.32L725.51 573.14L760.3 552.3L800.3 551.3L852.3 550.3L918.3 550.3" fill="none" stroke="#f0e68c" stroke-width="1.0" stroke-linejoin="round" shape-rendering="crispEdges"/><g shape-rendering="crispEdges" fill="none"><path d="M505.5 609.5V533.5H927.5V609.5H505.5" stroke="#fff"/></g><rect x="928" y="531" width="42" height="99" fill="#000"/><rect x="503" y="610" width="467" height="20" fill="#000"/><g shape-rendering="crispEdges"><path d="M928 540.5H930" stroke="#fff" stroke-width="1"/><text x="934" y="543.2" fill="#fff" stroke="#fff" stroke-width=".25" font-size="9">1293.25</text><path d="M928 573.5H930" stroke="#fff" stroke-width="1"/><text x="934" y="576.2" fill="#fff" stroke="#fff" stroke-width=".25" font-size="9">1277.05</text><path d="M928 606.5H930" stroke="#fff" stroke-width="1"/><text x="934" y="609.2" fill="#fff" stroke="#fff" stroke-width=".25" font-size="9">1260.85</text><rect x="929" y="544" width="41" height="11" fill="#fff"/><text x="934" y="552.7" fill="#000" stroke="#000" stroke-width=".25" font-size="9">1288.73</text><path d="M506.5 610V614" stroke="#fff" stroke-width="1"/><text x="505.5" y="621.5" fill="#fff" stroke="#fff" stroke-width=".25" font-size="9.5">4 Oct 2017</text><path d="M570.5 610V614" stroke="#fff" stroke-width="1"/><text x="569.5" y="621.5" fill="#fff" stroke="#fff" stroke-width=".25" font-size="9.5">5 Oct 16:00</text><path d="M634.5 610V614" stroke="#fff" stroke-width="1"/><text x="633.5" y="621.5" fill="#fff" stroke="#fff" stroke-width=".25" font-size="9.5">6 Oct 09:00</text><path d="M698.5 610V614" stroke="#fff" stroke-width="1"/><text x="697.5" y="621.5" fill="#fff" stroke="#fff" stroke-width=".25" font-size="9.5">9 Oct 02:00</text><path d="M762.5 610V614" stroke="#fff" stroke-width="1"/><text x="761.5" y="621.5" fill="#fff" stroke="#fff" stroke-width=".25" font-size="9.5">9 Oct 18:00</text><path d="M826.5 610V614" stroke="#fff" stroke-width="1"/><text x="825.5" y="621.5" fill="#fff" stroke="#fff" stroke-width=".25" font-size="9.5">10 Oct 11:00</text><path d="M890.5 610V614" stroke="#fff" stroke-width="1"/><text x="889.5" y="621.5" fill="#fff" stroke="#fff" stroke-width=".25" font-size="9.5">11 Oct 04:00</text></g></svg></div></div><div class="cw " style="left:974px;top:424px;width:487px;height:141px">
<div class="cwi"><svg width="16" height="16" viewBox="0 0 16 16"><rect x="0.5" y="1.500" width="10" height="9" rx="1" fill="#fff" stroke="#5b9bd5"/><rect x="1" y="2" width="9" height="2" fill="#5b9bd5"/><path d="M2 7h2l1-1.500 1 2.500 1-1h2" fill="none" stroke="#5b9bd5"/><rect x="4.500" y="6.500" width="10" height="8" rx="1" fill="#fff" stroke="#4a8ed0"/><path d="M6 10l1.500 3 1.500-3 1.500 3 1.500-2.500h1" fill="none" stroke="#4a8ed0"/></svg></div><div class="cwt">EURUSD,M5</div>
<div class="cb b1"><i class="mn"></i></div><div class="cb b2"><i class="mx"></i></div><div class="cb b3"><svg width="13" height="11" viewBox="0 0 13 11"><path d="M3.200 2.600L9.800 8.400M9.800 2.600L3.200 8.400" stroke="#4a5666" stroke-width="4.200" stroke-linecap="square"/><path d="M3.200 2.600L9.800 8.400M9.800 2.600L3.200 8.400" stroke="#fff" stroke-width="2.300" stroke-linecap="square"/></svg></div>
<div class="cv"><svg width="467" height="99" viewBox="990 531 467 99"><g shape-rendering="crispEdges" fill="none"><path d="M993 540.5H1414" stroke="#d6d6d6" stroke-width="1" stroke-dasharray="3 3"/><path d="M993 573.5H1414" stroke="#d6d6d6" stroke-width="1" stroke-dasharray="3 3"/><path d="M993 606.5H1414" stroke="#d6d6d6" stroke-width="1" stroke-dasharray="3 3"/><path d="M1025.5 534V609" stroke="#d6d6d6" stroke-width="1" stroke-dasharray="3 3" stroke-dashoffset="1"/><path d="M1057.5 534V609" stroke="#d6d6d6" stroke-width="1" stroke-dasharray="3 3" stroke-dashoffset="1"/><path d="M1089.5 534V609" stroke="#d6d6d6" stroke-width="1" stroke-dasharray="3 3" stroke-dashoffset="1"/><path d="M1121.5 534V609" stroke="#d6d6d6" stroke-width="1" stroke-dasharray="3 3" stroke-dashoffset="1"/><path d="M1153.5 534V609" stroke="#d6d6d6" stroke-width="1" stroke-dasharray="3 3" stroke-dashoffset="1"/><path d="M1185.5 534V609" stroke="#d6d6d6" stroke-width="1" stroke-dasharray="3 3" stroke-dashoffset="1"/><path d="M1217.5 534V609" stroke="#d6d6d6" stroke-width="1" stroke-dasharray="3 3" stroke-dashoffset="1"/><path d="M1249.5 534V609" stroke="#d6d6d6" stroke-width="1" stroke-dasharray="3 3" stroke-dashoffset="1"/><path d="M1281.5 534V609" stroke="#d6d6d6" stroke-width="1" stroke-dasharray="3 3" stroke-dashoffset="1"/><path d="M1313.5 534V609" stroke="#d6d6d6" stroke-width="1" stroke-dasharray="3 3" stroke-dashoffset="1"/><path d="M1345.5 534V609" stroke="#d6d6d6" stroke-width="1" stroke-dasharray="3 3" stroke-dashoffset="1"/><path d="M1377.5 534V609" stroke="#d6d6d6" stroke-width="1" stroke-dasharray="3 3" stroke-dashoffset="1"/><path d="M1409.5 534V609" stroke="#d6d6d6" stroke-width="1" stroke-dasharray="3 3" stroke-dashoffset="1"/><path d="M993 546.5H1414" stroke="#d23a2a" stroke-width="1"/><path d="M993 547.5H1414" stroke="#7a2418" stroke-width="1"/><path d="M993 550.5H1414" stroke="#9aa4b4" stroke-width="1"/></g><g shape-rendering="crispEdges"><path d="M993.5 603V605" stroke="#3cd83c"/><path d="M991 604.5H996" stroke="#3cd83c"/><path d="M1001.5 595V604" stroke="#3cd83c"/><rect x="999.5" y="598.5" width="4" height="5" fill="#000" stroke="#3cd83c"/><path d="M1009.5 595V601" stroke="#3cd83c"/><path d="M1007 598.5H1012" stroke="#3cd83c"/><path d="M1017.5 595V600" stroke="#3cd83c"/><rect x="1015.5" y="596.5" width="4" height="2" fill="#000" stroke="#3cd83c"/><path d="M1025.5 592V597" stroke="#3cd83c"/><rect x="1023.5" y="593.5" width="4" height="2" fill="#000" stroke="#3cd83c"/><path d="M1033.5 583V595" stroke="#3cd83c"/><rect x="1031.5" y="590.5" width="4" height="2" fill="#000" stroke="#3cd83c"/><path d="M1041.5 590V599" stroke="#3cd83c"/><rect x="1039.5" y="590.5" width="4" height="5" fill="#fff" stroke="#3cd83c"/><path d="M1049.5 593V598" stroke="#3cd83c"/><path d="M1047 595.5H1052" stroke="#3cd83c"/><path d="M1057.5 593V598" stroke="#3cd83c"/><path d="M1055 596.5H1060" stroke="#3cd83c"/><path d="M1065.5 594V598" stroke="#3cd83c"/><path d="M1063 596.5H1068" stroke="#3cd83c"/><path d="M1073.5 596V597" stroke="#3cd83c"/><path d="M1071 596.5H1076" stroke="#3cd83c"/><path d="M1081.5 596V597" stroke="#3cd83c"/><path d="M1079 596.5H1084" stroke="#3cd83c"/><path d="M1089.5 593V598" stroke="#3cd83c"/><path d="M1087 597.5H1092" stroke="#3cd83c"/><path d="M1097.5 592V598" stroke="#3cd83c"/><rect x="1095.5" y="593.5" width="4" height="3" fill="#000" stroke="#3cd83c"/><path d="M1105.5 588V594" stroke="#3cd83c"/><rect x="1103.5" y="591.5" width="4" height="1" fill="#000" stroke="#3cd83c"/><path d="M1113.5 589V595" stroke="#3cd83c"/><path d="M1111 591.5H1116" stroke="#3cd83c"/><path d="M1121.5 588V596" stroke="#3cd83c"/><path d="M1119 591.5H1124" stroke="#3cd83c"/><path d="M1129.5 591V596" stroke="#3cd83c"/><rect x="1127.5" y="591.5" width="4" height="4" fill="#fff" stroke="#3cd83c"/><path d="M1137.5 593V600" stroke="#3cd83c"/><rect x="1135.5" y="595.5" width="4" height="4" fill="#fff" stroke="#3cd83c"/><path d="M1145.5 597V600" stroke="#3cd83c"/><rect x="1143.5" y="597.5" width="4" height="2" fill="#000" stroke="#3cd83c"/><path d="M1153.5 588V598" stroke="#3cd83c"/><rect x="1151.5" y="592.5" width="4" height="4" fill="#000" stroke="#3cd83c"/><path d="M1161.5 584V594" stroke="#3cd83c"/><rect x="1159.5" y="585.5" width="4" height="7" fill="#000" stroke="#3cd83c"/><path d="M1169.5 585V589" stroke="#3cd83c"/><rect x="1167.5" y="586.5" width="4" height="1" fill="#fff" stroke="#3cd83c"/><path d="M1177.5 580V589" stroke="#3cd83c"/><rect x="1175.5" y="580.5" width="4" height="7" fill="#000" stroke="#3cd83c"/><path d="M1185.5 576V589" stroke="#3cd83c"/><rect x="1183.5" y="581.5" width="4" height="4" fill="#fff" stroke="#3cd83c"/><path d="M1193.5 554V587" stroke="#3cd83c"/><rect x="1191.5" y="559.5" width="4" height="26" fill="#000" stroke="#3cd83c"/><path d="M1201.5 556V567" stroke="#3cd83c"/><rect x="1199.5" y="559.5" width="4" height="6" fill="#fff" stroke="#3cd83c"/><path d="M1209.5 564V574" stroke="#3cd83c"/><rect x="1207.5" y="565.5" width="4" height="7" fill="#fff" stroke="#3cd83c"/><path d="M1217.5 563V577" stroke="#3cd83c"/><rect x="1215.5" y="570.5" width="4" height="2" fill="#000" stroke="#3cd83c"/><path d="M1225.5 570V579" stroke="#3cd83c"/><rect x="1223.5" y="571.5" width="4" height="1" fill="#fff" stroke="#3cd83c"/><path d="M1233.5 571V583" stroke="#3cd83c"/><rect x="1231.5" y="573.5" width="4" height="7" fill="#fff" stroke="#3cd83c"/><path d="M1241.5 577V584" stroke="#3cd83c"/><rect x="1239.5" y="581.5" width="4" height="1" fill="#fff" stroke="#3cd83c"/><path d="M1249.5 578V584" stroke="#3cd83c"/><rect x="1247.5" y="580.5" width="4" height="3" fill="#000" stroke="#3cd83c"/><path d="M1257.5 577V594" stroke="#3cd83c"/><rect x="1255.5" y="580.5" width="4" height="11" fill="#fff" stroke="#3cd83c"/><path d="M1265.5 587V596" stroke="#3cd83c"/><rect x="1263.5" y="590.5" width="4" height="1" fill="#000" stroke="#3cd83c"/><path d="M1273.5 584V592" stroke="#3cd83c"/><rect x="1271.5" y="589.5" width="4" height="1" fill="#fff" stroke="#3cd83c"/><path d="M1281.5 575V591" stroke="#3cd83c"/><rect x="1279.5" y="575.5" width="4" height="14" fill="#000" stroke="#3cd83c"/><path d="M1289.5 573V578" stroke="#3cd83c"/><path d="M1287 575.5H1292" stroke="#3cd83c"/><path d="M1297.5 575V578" stroke="#3cd83c"/><rect x="1295.5" y="575.5" width="4" height="2" fill="#fff" stroke="#3cd83c"/><path d="M1305.5 570V578" stroke="#3cd83c"/><rect x="1303.5" y="570.5" width="4" height="7" fill="#000" stroke="#3cd83c"/><path d="M1313.5 568V577" stroke="#3cd83c"/><rect x="1311.5" y="570.5" width="4" height="4" fill="#fff" stroke="#3cd83c"/><path d="M1321.5 573V580" stroke="#3cd83c"/><rect x="1319.5" y="575.5" width="4" height="1" fill="#fff" stroke="#3cd83c"/><path d="M1329.5 563V578" stroke="#3cd83c"/><rect x="1327.5" y="568.5" width="4" height="8" fill="#000" stroke="#3cd83c"/><path d="M1337.5 564V571" stroke="#3cd83c"/><rect x="1335.5" y="566.5" width="4" height="2" fill="#000" stroke="#3cd83c"/><path d="M1345.5 563V572" stroke="#3cd83c"/><rect x="1343.5" y="566.5" width="4" height="3" fill="#fff" stroke="#3cd83c"/><path d="M1353.5 555V571" stroke="#3cd83c"/><rect x="1351.5" y="557.5" width="4" height="12" fill="#000" stroke="#3cd83c"/><path d="M1361.5 556V566" stroke="#3cd83c"/><rect x="1359.5" y="557.5" width="4" height="1" fill="#fff" stroke="#3cd83c"/><path d="M1369.5 540V560" stroke="#3cd83c"/><rect x="1367.5" y="545.5" width="4" height="13" fill="#000" stroke="#3cd83c"/><path d="M1377.5 543V548" stroke="#3cd83c"/><rect x="1375.5" y="544.5" width="4" height="1" fill="#fff" stroke="#3cd83c"/><path d="M1385.5 543V552" stroke="#3cd83c"/><rect x="1383.5" y="544.5" width="4" height="1" fill="#fff" stroke="#3cd83c"/><path d="M1393.5 543V555" stroke="#3cd83c"/><rect x="1391.5" y="544.5" width="4" height="5" fill="#fff" stroke="#3cd83c"/></g><g shape-rendering="crispEdges" fill="none"><path d="M992.5 609.5V533.5H1414.5V609.5H992.5" stroke="#fff"/></g><rect x="1415" y="531" width="42" height="99" fill="#000"/><rect x="990" y="610" width="467" height="20" fill="#000"/><g shape-rendering="crispEdges"><path d="M1415 540.5H1417" stroke="#fff" stroke-width="1"/><text x="1420" y="543.2" fill="#fff" stroke="#fff" stroke-width=".25" font-size="9">1.18405</text><path d="M1415 573.5H1417" stroke="#fff" stroke-width="1"/><text x="1420" y="576.2" fill="#fff" stroke="#fff" stroke-width=".25" font-size="9">1.18245</text><path d="M1415 606.5H1417" stroke="#fff" stroke-width="1"/><text x="1420" y="609.2" fill="#fff" stroke="#fff" stroke-width=".25" font-size="9">1.18080</text><rect x="1416" y="541" width="41" height="11" fill="#ee2a14"/><text x="1420" y="549.7" fill="#000" stroke="#000" stroke-width=".25" font-size="9">1.18373</text><rect x="1416" y="545" width="41" height="11" fill="#fff"/><text x="1420" y="553.7" fill="#000" stroke="#000" stroke-width=".25" font-size="9">1.18356</text><path d="M993.5 610V614" stroke="#fff" stroke-width="1"/><text x="992.5" y="621.5" fill="#fff" stroke="#fff" stroke-width=".25" font-size="9.5">11 Oct 2017</text><path d="M1057.5 610V614" stroke="#fff" stroke-width="1"/><text x="1056.5" y="621.5" fill="#fff" stroke="#fff" stroke-width=".25" font-size="9.5">11 Oct 07:55</text><path d="M1121.5 610V614" stroke="#fff" stroke-width="1"/><text x="1120.5" y="621.5" fill="#fff" stroke="#fff" stroke-width=".25" font-size="9.5">11 Oct 08:35</text><path d="M1185.5 610V614" stroke="#fff" stroke-width="1"/><text x="1184.5" y="621.5" fill="#fff" stroke="#fff" stroke-width=".25" font-size="9.5">11 Oct 09:15</text><path d="M1249.5 610V614" stroke="#fff" stroke-width="1"/><text x="1248.5" y="621.5" fill="#fff" stroke="#fff" stroke-width=".25" font-size="9.5">11 Oct 09:55</text><path d="M1313.5 610V614" stroke="#fff" stroke-width="1"/><text x="1312.5" y="621.5" fill="#fff" stroke="#fff" stroke-width=".25" font-size="9.5">11 Oct 10:35</text><path d="M1377.5 610V614" stroke="#fff" stroke-width="1"/><text x="1376.5" y="621.5" fill="#fff" stroke="#fff" stroke-width=".25" font-size="9.5">11 Oct 11:15</text></g><path d="M996 540h8l-4 4.500z" fill="#fff" shape-rendering="geometricPrecision"/><text x="1008" y="544.5" fill="#fff" stroke="#fff" stroke-width=".25" font-size="9.2">EURUSD,M5&#160; 1.18382 1.18391 1.18337 1.18356</text></svg></div></div><div class="cw" style="left:0px;top:588px;width:160px;height:30px"><div class="cb" style="left:58px;top:7px;width:26px"></div><div class="cb" style="left:87px;top:7px;width:26px"></div><div class="cb" style="left:116px;top:7px;width:26px"></div></div><div class="cw act main" style="left:0px;top:1px;width:845px;height:496px">
<div class="cwi"><svg width="16" height="16" viewBox="0 0 16 16"><rect x="0.5" y="1.500" width="10" height="9" rx="1" fill="#fff" stroke="#5b9bd5"/><rect x="1" y="2" width="9" height="2" fill="#5b9bd5"/><path d="M2 7h2l1-1.500 1 2.500 1-1h2" fill="none" stroke="#5b9bd5"/><rect x="4.500" y="6.500" width="10" height="8" rx="1" fill="#fff" stroke="#4a8ed0"/><path d="M6 10l1.500 3 1.500-3 1.500 3 1.500-2.500h1" fill="none" stroke="#4a8ed0"/></svg></div><div class="cwt">EURUSD,Daily</div>
<div class="cb b1"><i class="mn"></i></div><div class="cb b2"><i class="mx"></i></div><div class="cb b3"><svg width="13" height="11" viewBox="0 0 13 11"><path d="M3.200 2.600L9.800 8.400M9.800 2.600L3.200 8.400" stroke="#4a3030" stroke-width="4.200" stroke-linecap="square"/><path d="M3.200 2.600L9.800 8.400M9.800 2.600L3.200 8.400" stroke="#fff" stroke-width="2.300" stroke-linecap="square"/></svg></div>
<div class="cv"><svg width="826" height="455" viewBox="16 108 826 455"><g shape-rendering="crispEdges" fill="none"><path d="M19 128.5H799" stroke="#d6d6d6" stroke-width="1" stroke-dasharray="3 3"/><path d="M19 169.5H799" stroke="#d6d6d6" stroke-width="1" stroke-dasharray="3 3"/><path d="M19 210.5H799" stroke="#d6d6d6" stroke-width="1" stroke-dasharray="3 3"/><path d="M19 251.5H799" stroke="#d6d6d6" stroke-width="1" stroke-dasharray="3 3"/><path d="M19 292.5H799" stroke="#d6d6d6" stroke-width="1" stroke-dasharray="3 3"/><path d="M19 333.5H799" stroke="#d6d6d6" stroke-width="1" stroke-dasharray="3 3"/><path d="M19 375.5H799" stroke="#d6d6d6" stroke-width="1" stroke-dasharray="3 3"/><path d="M19 416.5H799" stroke="#d6d6d6" stroke-width="1" stroke-dasharray="3 3"/><path d="M19 457.5H799" stroke="#d6d6d6" stroke-width="1" stroke-dasharray="3 3"/><path d="M19 498.5H799" stroke="#d6d6d6" stroke-width="1" stroke-dasharray="3 3"/><path d="M19 539.5H799" stroke="#d6d6d6" stroke-width="1" stroke-dasharray="3 3"/><path d="M27.5 111V541" stroke="#d6d6d6" stroke-width="1" stroke-dasharray="3 3" stroke-dashoffset="1"/><path d="M203.5 111V541" stroke="#d6d6d6" stroke-width="1" stroke-dasharray="3 3" stroke-dashoffset="1"/><path d="M371.5 111V541" stroke="#d6d6d6" stroke-width="1" stroke-dasharray="3 3" stroke-dashoffset="1"/><path d="M555.5 111V541" stroke="#d6d6d6" stroke-width="1" stroke-dasharray="3 3" stroke-dashoffset="1"/><path d="M723.5 111V541" stroke="#d6d6d6" stroke-width="1" stroke-dasharray="3 3" stroke-dashoffset="1"/><path d="M19 132.5H799" stroke="#e2bb55" stroke-width="1"/><path d="M19 236.5H799" stroke="#9aa4b4" stroke-width="1"/></g><g shape-rendering="crispEdges"><path d="M19.5 476V512" stroke="#3cd83c"/><rect x="17.5" y="481.5" width="4" height="22" fill="#000" stroke="#3cd83c"/><path d="M27.5 475V498" stroke="#3cd83c"/><rect x="25.5" y="481.5" width="4" height="11" fill="#fff" stroke="#3cd83c"/><path d="M35.5 463V497" stroke="#3cd83c"/><rect x="33.5" y="465.5" width="4" height="27" fill="#000" stroke="#3cd83c"/><path d="M43.5 464V485" stroke="#3cd83c"/><rect x="41.5" y="468.5" width="4" height="7" fill="#fff" stroke="#3cd83c"/><path d="M51.5 463V482" stroke="#3cd83c"/><rect x="49.5" y="468.5" width="4" height="7" fill="#000" stroke="#3cd83c"/><path d="M59.5 464V497" stroke="#3cd83c"/><rect x="57.5" y="468.5" width="4" height="7" fill="#fff" stroke="#3cd83c"/><path d="M67.5 470V501" stroke="#3cd83c"/><rect x="65.5" y="475.5" width="4" height="16" fill="#fff" stroke="#3cd83c"/><path d="M75.5 483V511" stroke="#3cd83c"/><rect x="73.5" y="492.5" width="4" height="7" fill="#fff" stroke="#3cd83c"/><path d="M83.5 485V502" stroke="#3cd83c"/><rect x="81.5" y="495.5" width="4" height="1" fill="#fff" stroke="#3cd83c"/><path d="M91.5 488V505" stroke="#3cd83c"/><rect x="89.5" y="494.5" width="4" height="3" fill="#000" stroke="#3cd83c"/><path d="M99.5 458V502" stroke="#3cd83c"/><rect x="97.5" y="491.5" width="4" height="3" fill="#000" stroke="#3cd83c"/><path d="M107.5 486V527" stroke="#3cd83c"/><rect x="105.5" y="492.5" width="4" height="28" fill="#fff" stroke="#3cd83c"/><path d="M115.5 497V524" stroke="#3cd83c"/><rect x="113.5" y="500.5" width="4" height="20" fill="#000" stroke="#3cd83c"/><path d="M123.5 493V522" stroke="#3cd83c"/><rect x="121.5" y="497.5" width="4" height="22" fill="#fff" stroke="#3cd83c"/><path d="M131.5 512V532" stroke="#3cd83c"/><rect x="129.5" y="519.5" width="4" height="5" fill="#fff" stroke="#3cd83c"/><path d="M139.5 510V529" stroke="#3cd83c"/><rect x="137.5" y="511.5" width="4" height="13" fill="#000" stroke="#3cd83c"/><path d="M147.5 507V524" stroke="#3cd83c"/><rect x="145.5" y="511.5" width="4" height="5" fill="#fff" stroke="#3cd83c"/><path d="M155.5 494V521" stroke="#3cd83c"/><rect x="153.5" y="501.5" width="4" height="15" fill="#000" stroke="#3cd83c"/><path d="M163.5 490V509" stroke="#3cd83c"/><rect x="161.5" y="498.5" width="4" height="7" fill="#fff" stroke="#3cd83c"/><path d="M171.5 437V508" stroke="#3cd83c"/><rect x="169.5" y="441.5" width="4" height="65" fill="#000" stroke="#3cd83c"/><path d="M179.5 420V461" stroke="#3cd83c"/><rect x="177.5" y="425.5" width="4" height="17" fill="#000" stroke="#3cd83c"/><path d="M187.5 397V427" stroke="#3cd83c"/><rect x="185.5" y="400.5" width="4" height="24" fill="#000" stroke="#3cd83c"/><path d="M195.5 397V420" stroke="#3cd83c"/><rect x="193.5" y="400.5" width="4" height="7" fill="#fff" stroke="#3cd83c"/><path d="M203.5 404V435" stroke="#3cd83c"/><rect x="201.5" y="408.5" width="4" height="22" fill="#fff" stroke="#3cd83c"/><path d="M211.5 425V443" stroke="#3cd83c"/><rect x="209.5" y="432.5" width="4" height="6" fill="#fff" stroke="#3cd83c"/><path d="M219.5 430V453" stroke="#3cd83c"/><rect x="217.5" y="436.5" width="4" height="2" fill="#000" stroke="#3cd83c"/><path d="M227.5 405V446" stroke="#3cd83c"/><rect x="225.5" y="407.5" width="4" height="28" fill="#000" stroke="#3cd83c"/><path d="M235.5 399V425" stroke="#3cd83c"/><rect x="233.5" y="407.5" width="4" height="8" fill="#fff" stroke="#3cd83c"/><path d="M243.5 408V424" stroke="#3cd83c"/><rect x="241.5" y="416.5" width="4" height="1" fill="#fff" stroke="#3cd83c"/><path d="M251.5 383V424" stroke="#3cd83c"/><rect x="249.5" y="389.5" width="4" height="26" fill="#000" stroke="#3cd83c"/><path d="M259.5 379V424" stroke="#3cd83c"/><rect x="257.5" y="389.5" width="4" height="21" fill="#fff" stroke="#3cd83c"/><path d="M267.5 393V429" stroke="#3cd83c"/><rect x="265.5" y="411.5" width="4" height="7" fill="#fff" stroke="#3cd83c"/><path d="M275.5 386V421" stroke="#3cd83c"/><rect x="273.5" y="388.5" width="4" height="30" fill="#000" stroke="#3cd83c"/><path d="M283.5 380V403" stroke="#3cd83c"/><rect x="281.5" y="384.5" width="4" height="2" fill="#000" stroke="#3cd83c"/><path d="M291.5 341V388" stroke="#3cd83c"/><rect x="289.5" y="353.5" width="4" height="31" fill="#000" stroke="#3cd83c"/><path d="M299.5 351V372" stroke="#3cd83c"/><rect x="297.5" y="353.5" width="4" height="16" fill="#fff" stroke="#3cd83c"/><path d="M307.5 310V384" stroke="#3cd83c"/><rect x="305.5" y="321.5" width="4" height="48" fill="#000" stroke="#3cd83c"/><path d="M315.5 300V327" stroke="#3cd83c"/><rect x="313.5" y="308.5" width="4" height="12" fill="#000" stroke="#3cd83c"/><path d="M323.5 299V324" stroke="#3cd83c"/><rect x="321.5" y="308.5" width="4" height="8" fill="#fff" stroke="#3cd83c"/><path d="M331.5 288V322" stroke="#3cd83c"/><rect x="329.5" y="315.5" width="4" height="2" fill="#000" stroke="#3cd83c"/><path d="M339.5 276V330" stroke="#3cd83c"/><rect x="337.5" y="280.5" width="4" height="34" fill="#000" stroke="#3cd83c"/><path d="M347.5 261V314" stroke="#3cd83c"/><rect x="345.5" y="280.5" width="4" height="22" fill="#fff" stroke="#3cd83c"/><path d="M355.5 266V306" stroke="#3cd83c"/><rect x="353.5" y="272.5" width="4" height="31" fill="#000" stroke="#3cd83c"/><path d="M363.5 233V284" stroke="#3cd83c"/><rect x="361.5" y="236.5" width="4" height="38" fill="#000" stroke="#3cd83c"/><path d="M371.5 234V259" stroke="#3cd83c"/><rect x="369.5" y="236.5" width="4" height="14" fill="#fff" stroke="#3cd83c"/><path d="M379.5 207V255" stroke="#3cd83c"/><rect x="377.5" y="229.5" width="4" height="21" fill="#000" stroke="#3cd83c"/><path d="M387.5 214V240" stroke="#3cd83c"/><rect x="385.5" y="223.5" width="4" height="5" fill="#000" stroke="#3cd83c"/><path d="M395.5 215V282" stroke="#3cd83c"/><rect x="393.5" y="223.5" width="4" height="40" fill="#fff" stroke="#3cd83c"/><path d="M403.5 246V265" stroke="#3cd83c"/><rect x="401.5" y="254.5" width="4" height="9" fill="#000" stroke="#3cd83c"/><path d="M411.5 242V287" stroke="#3cd83c"/><rect x="409.5" y="254.5" width="4" height="17" fill="#fff" stroke="#3cd83c"/><path d="M419.5 267V298" stroke="#3cd83c"/><rect x="417.5" y="269.5" width="4" height="2" fill="#000" stroke="#3cd83c"/><path d="M427.5 258V292" stroke="#3cd83c"/><rect x="425.5" y="264.5" width="4" height="5" fill="#000" stroke="#3cd83c"/><path d="M435.5 232V274" stroke="#3cd83c"/><rect x="433.5" y="243.5" width="4" height="20" fill="#000" stroke="#3cd83c"/><path d="M443.5 236V265" stroke="#3cd83c"/><rect x="441.5" y="243.5" width="4" height="16" fill="#fff" stroke="#3cd83c"/><path d="M451.5 255V299" stroke="#3cd83c"/><rect x="449.5" y="260.5" width="4" height="19" fill="#fff" stroke="#3cd83c"/><path d="M459.5 260V301" stroke="#3cd83c"/><rect x="457.5" y="265.5" width="4" height="14" fill="#000" stroke="#3cd83c"/><path d="M467.5 256V309" stroke="#3cd83c"/><rect x="465.5" y="265.5" width="4" height="19" fill="#fff" stroke="#3cd83c"/><path d="M475.5 262V290" stroke="#3cd83c"/><rect x="473.5" y="268.5" width="4" height="16" fill="#000" stroke="#3cd83c"/><path d="M483.5 240V280" stroke="#3cd83c"/><rect x="481.5" y="247.5" width="4" height="22" fill="#000" stroke="#3cd83c"/><path d="M491.5 242V275" stroke="#3cd83c"/><rect x="489.5" y="247.5" width="4" height="21" fill="#fff" stroke="#3cd83c"/><path d="M499.5 242V276" stroke="#3cd83c"/><rect x="497.5" y="249.5" width="4" height="18" fill="#000" stroke="#3cd83c"/><path d="M507.5 244V259" stroke="#3cd83c"/><rect x="505.5" y="249.5" width="4" height="2" fill="#fff" stroke="#3cd83c"/><path d="M515.5 194V264" stroke="#3cd83c"/><rect x="513.5" y="203.5" width="4" height="48" fill="#000" stroke="#3cd83c"/><path d="M523.5 176V205" stroke="#3cd83c"/><rect x="521.5" y="178.5" width="4" height="15" fill="#000" stroke="#3cd83c"/><path d="M531.5 141V193" stroke="#3cd83c"/><rect x="529.5" y="179.5" width="4" height="2" fill="#fff" stroke="#3cd83c"/><path d="M539.5 176V220" stroke="#3cd83c"/><rect x="537.5" y="181.5" width="4" height="37" fill="#fff" stroke="#3cd83c"/><path d="M547.5 205V243" stroke="#3cd83c"/><rect x="545.5" y="207.5" width="4" height="11" fill="#000" stroke="#3cd83c"/><path d="M555.5 178V232" stroke="#3cd83c"/><rect x="553.5" y="207.5" width="4" height="19" fill="#fff" stroke="#3cd83c"/><path d="M563.5 202V223" stroke="#3cd83c"/><rect x="561.5" y="214.5" width="4" height="2" fill="#000" stroke="#3cd83c"/><path d="M571.5 194V225" stroke="#3cd83c"/><rect x="569.5" y="206.5" width="4" height="8" fill="#000" stroke="#3cd83c"/><path d="M579.5 190V210" stroke="#3cd83c"/><rect x="577.5" y="204.5" width="4" height="2" fill="#000" stroke="#3cd83c"/><path d="M587.5 145V206" stroke="#3cd83c"/><rect x="585.5" y="161.5" width="4" height="43" fill="#000" stroke="#3cd83c"/><path d="M595.5 133V165" stroke="#3cd83c"/><rect x="593.5" y="157.5" width="4" height="4" fill="#000" stroke="#3cd83c"/><path d="M603.5 158V192" stroke="#3cd83c"/><rect x="601.5" y="163.5" width="4" height="27" fill="#fff" stroke="#3cd83c"/><path d="M611.5 179V201" stroke="#3cd83c"/><rect x="609.5" y="184.5" width="4" height="4" fill="#000" stroke="#3cd83c"/><path d="M619.5 172V223" stroke="#3cd83c"/><rect x="617.5" y="184.5" width="4" height="32" fill="#fff" stroke="#3cd83c"/><path d="M627.5 201V237" stroke="#3cd83c"/><rect x="625.5" y="203.5" width="4" height="13" fill="#000" stroke="#3cd83c"/><path d="M635.5 175V211" stroke="#3cd83c"/><rect x="633.5" y="192.5" width="4" height="11" fill="#000" stroke="#3cd83c"/><path d="M643.5 182V206" stroke="#3cd83c"/><rect x="641.5" y="191.5" width="4" height="11" fill="#000" stroke="#3cd83c"/><path d="M651.5 167V191" stroke="#3cd83c"/><rect x="649.5" y="172.5" width="4" height="18" fill="#000" stroke="#3cd83c"/><path d="M659.5 156V228" stroke="#3cd83c"/><rect x="657.5" y="172.5" width="4" height="42" fill="#fff" stroke="#3cd83c"/><path d="M667.5 189V226" stroke="#3cd83c"/><rect x="665.5" y="194.5" width="4" height="20" fill="#000" stroke="#3cd83c"/><path d="M675.5 168V197" stroke="#3cd83c"/><rect x="673.5" y="192.5" width="4" height="2" fill="#000" stroke="#3cd83c"/><path d="M683.5 196V240" stroke="#3cd83c"/><rect x="681.5" y="211.5" width="4" height="20" fill="#fff" stroke="#3cd83c"/><path d="M691.5 227V270" stroke="#3cd83c"/><rect x="689.5" y="232.5" width="4" height="23" fill="#fff" stroke="#3cd83c"/><path d="M699.5 254V287" stroke="#3cd83c"/><rect x="697.5" y="255.5" width="4" height="20" fill="#fff" stroke="#3cd83c"/><path d="M707.5 250V285" stroke="#3cd83c"/><rect x="705.5" y="259.5" width="4" height="16" fill="#000" stroke="#3cd83c"/><path d="M715.5 238V264" stroke="#3cd83c"/><rect x="713.5" y="246.5" width="4" height="12" fill="#000" stroke="#3cd83c"/><path d="M723.5 246V288" stroke="#3cd83c"/><rect x="721.5" y="256.5" width="4" height="24" fill="#fff" stroke="#3cd83c"/><path d="M731.5 263V295" stroke="#3cd83c"/><rect x="729.5" y="276.5" width="4" height="3" fill="#000" stroke="#3cd83c"/><path d="M739.5 257V279" stroke="#3cd83c"/><rect x="737.5" y="269.5" width="4" height="5" fill="#000" stroke="#3cd83c"/><path d="M747.5 260V294" stroke="#3cd83c"/><rect x="745.5" y="269.5" width="4" height="20" fill="#fff" stroke="#3cd83c"/><path d="M755.5 277V306" stroke="#3cd83c"/><rect x="753.5" y="279.5" width="4" height="9" fill="#000" stroke="#3cd83c"/><path d="M763.5 270V286" stroke="#3cd83c"/><rect x="761.5" y="277.5" width="4" height="4" fill="#000" stroke="#3cd83c"/><path d="M771.5 241V278" stroke="#3cd83c"/><rect x="769.5" y="249.5" width="4" height="27" fill="#000" stroke="#3cd83c"/><path d="M779.5 235V255" stroke="#3cd83c"/><rect x="777.5" y="237.5" width="4" height="11" fill="#000" stroke="#3cd83c"/></g><path d="M415.07 541.4L443.76 531.83L475.63 521.31L507.51 511.11L536.2 499.3L555.33 493.24L587.2 480.83L619.08 470.63L651.26 458.51L682.84 449.25L722.68 440.34L746.59 435.24L778.47 428.55" fill="none" stroke="#cc48cc" stroke-width="1.0" stroke-linejoin="round" shape-rendering="crispEdges"/><path d="M244.9 541.4L299.11 513.31L340.41 489.78L371.38 466.55L380.3 460.11L411.88 439.39L443.76 421.22L475.63 405.92L507.51 390.28L533.31 374.34L555.33 363.52L580.83 350.77L609.52 334.19L635.32 324.63L657.34 314.43L679.65 306.14L714.71 300.72L746.59 298.17L778.47 294.34" fill="none" stroke="#62dce4" stroke-width="1.0" stroke-linejoin="round" shape-rendering="crispEdges"/><path d="M19.44 540.47L27.6 537.75L35.76 530.5L43.92 525.36L52.08 519.62L61.14 514.54L75.65 512.3L92.27 509.1L99.22 507.47L108.29 508.74L122.79 509.1L130.35 510.19L140.93 510.55L162.69 510.19L171.75 505.11L179.3 497.86L188.07 487.28L195.32 479.37L203.48 474.65L213.46 470.3L221.27 467.13L242.07 455.26L260.3 444.72L303.91 415.3L314.79 404.13L325.67 393.25L336.55 376.93L347.43 368.77L356.5 358.79L365.56 345.19L374.63 332.5L387.32 317.09L396.39 311.65L405.33 306.51L419.84 299.62L428.9 295.09L439.78 289.1L450.66 287.83L459.73 285.11L476.35 284.21L486.93 279.67L497.81 277.25L506.87 274.6L514.13 268.79L515.41 267.31L523.19 259.73L523.57 258.25L531.73 251.36L532.26 251.57L539.89 248.27L541.32 247.34L547.14 244.65L550.39 243.41L555.3 242.83L563.46 240.11L571.62 236.49L579.78 233.22L587.34 227.42L594.29 222.28L603.35 218.29L611.51 214.73L619.67 214.37L627.83 212.91L636.29 210.74L644.15 209.29L648.57 206.43L651.41 207.11L658.57 206.14L667.14 205.29L674.29 204.29L682.86 207.86L691.43 211.43L700.3 217.86L708.57 222.43L715.71 225.71L723.57 230.3L731.43 233.29L740.3 237.86L747.14 242.14L754.29 245.3L762.86 248.57L772.86 248.86L779.29 247.86" fill="none" stroke="#f0e68c" stroke-width="1.0" stroke-linejoin="round" shape-rendering="crispEdges"/><g shape-rendering="crispEdges" fill="none"><path d="M18.5 541.5V110.5H799.5V541.5H18.5" stroke="#fff"/></g><rect x="800" y="108" width="42" height="455" fill="#000"/><rect x="16" y="542" width="826" height="21" fill="#000"/><g shape-rendering="crispEdges"><path d="M800 142.5H802" stroke="#fff" stroke-width="1"/><text x="804" y="145.59" fill="#fff" stroke="#fff" stroke-width=".25" font-size="9">1.20650</text><path d="M800 176.5H802" stroke="#fff" stroke-width="1"/><text x="804" y="179.29" fill="#fff" stroke="#fff" stroke-width=".25" font-size="9">1.19830</text><path d="M800 275.5H802" stroke="#fff" stroke-width="1"/><text x="804" y="277.93" fill="#fff" stroke="#fff" stroke-width=".25" font-size="9">1.17430</text><path d="M800 308.5H802" stroke="#fff" stroke-width="1"/><text x="804" y="311.63" fill="#fff" stroke="#fff" stroke-width=".25" font-size="9">1.16610</text><path d="M800 341.5H802" stroke="#fff" stroke-width="1"/><text x="804" y="344.51" fill="#fff" stroke="#fff" stroke-width=".25" font-size="9">1.15810</text><path d="M800 407.5H802" stroke="#fff" stroke-width="1"/><text x="804" y="410.27" fill="#fff" stroke="#fff" stroke-width=".25" font-size="9">1.14210</text><path d="M800 440.5H802" stroke="#fff" stroke-width="1"/><text x="804" y="443.15" fill="#fff" stroke="#fff" stroke-width=".25" font-size="9">1.13410</text><path d="M800 474.5H802" stroke="#fff" stroke-width="1"/><text x="804" y="476.85" fill="#fff" stroke="#fff" stroke-width=".25" font-size="9">1.12590</text><path d="M800 507.5H802" stroke="#fff" stroke-width="1"/><text x="804" y="509.73" fill="#fff" stroke="#fff" stroke-width=".25" font-size="9">1.11790</text><rect x="801" y="127" width="41" height="11" fill="#f0c030"/><text x="804" y="136" fill="#000" stroke="#000" stroke-width=".25" font-size="9">1.20903</text><rect x="801" y="243" width="41" height="6" fill="#fff"/><text x="804" y="250" fill="#000" stroke="#000" stroke-width=".25" font-size="9">1.18247</text><rect x="801" y="122" width="41" height="11" fill="#c8c8c8"/><text x="804" y="131.2" fill="#000" stroke="#000" stroke-width=".25" font-size="9">1.21000</text><rect x="801" y="163" width="41" height="11" fill="#c8c8c8"/><text x="804" y="172.2" fill="#000" stroke="#000" stroke-width=".25" font-size="9">1.20000</text><rect x="801" y="204" width="41" height="11" fill="#c8c8c8"/><text x="804" y="213.2" fill="#000" stroke="#000" stroke-width=".25" font-size="9">1.19000</text><rect x="801" y="245" width="41" height="11" fill="#c8c8c8"/><text x="804" y="254.2" fill="#000" stroke="#000" stroke-width=".25" font-size="9">1.18000</text><rect x="801" y="286" width="41" height="11" fill="#c8c8c8"/><text x="804" y="295.2" fill="#000" stroke="#000" stroke-width=".25" font-size="9">1.17000</text><rect x="801" y="327" width="41" height="11" fill="#c8c8c8"/><text x="804" y="336.2" fill="#000" stroke="#000" stroke-width=".25" font-size="9">1.16000</text><rect x="801" y="369" width="41" height="11" fill="#c8c8c8"/><text x="804" y="378.2" fill="#000" stroke="#000" stroke-width=".25" font-size="9">1.15000</text><rect x="801" y="410" width="41" height="11" fill="#c8c8c8"/><text x="804" y="419.2" fill="#000" stroke="#000" stroke-width=".25" font-size="9">1.14000</text><rect x="801" y="451" width="41" height="11" fill="#c8c8c8"/><text x="804" y="460.2" fill="#000" stroke="#000" stroke-width=".25" font-size="9">1.13000</text><rect x="801" y="492" width="41" height="11" fill="#c8c8c8"/><text x="804" y="501.2" fill="#000" stroke="#000" stroke-width=".25" font-size="9">1.12000</text><rect x="801" y="533" width="41" height="11" fill="#c8c8c8"/><text x="804" y="542.2" fill="#000" stroke="#000" stroke-width=".25" font-size="9">1.11000</text><rect x="801" y="231" width="41" height="12" fill="#fff"/><text x="804" y="240.2" fill="#000" stroke="#000" stroke-width=".25" font-size="9">1.18356</text><path d="M19.5 542V546" stroke="#fff" stroke-width="1"/><text x="18.5" y="553.5" fill="#fff" stroke="#fff" stroke-width=".25" font-size="9.5">31 May 2017</text><path d="M83.5 542V546" stroke="#fff" stroke-width="1"/><text x="82.5" y="553.5" fill="#fff" stroke="#fff" stroke-width=".25" font-size="9.5">12 Jun 2017</text><path d="M147.5 542V546" stroke="#fff" stroke-width="1"/><text x="146.5" y="553.5" fill="#fff" stroke="#fff" stroke-width=".25" font-size="9.5">22 Jun 2017</text><path d="M211.5 542V546" stroke="#fff" stroke-width="1"/><text x="210.5" y="553.5" fill="#fff" stroke="#fff" stroke-width=".25" font-size="9.5">4 Jul 2017</text><path d="M275.5 542V546" stroke="#fff" stroke-width="1"/><text x="274.5" y="553.5" fill="#fff" stroke="#fff" stroke-width=".25" font-size="9.5">14 Jul 2017</text><path d="M339.5 542V546" stroke="#fff" stroke-width="1"/><text x="338.5" y="553.5" fill="#fff" stroke="#fff" stroke-width=".25" font-size="9.5">26 Jul 2017</text><path d="M403.5 542V546" stroke="#fff" stroke-width="1"/><text x="402.5" y="553.5" fill="#fff" stroke="#fff" stroke-width=".25" font-size="9.5">7 Aug 2017</text><path d="M467.5 542V546" stroke="#fff" stroke-width="1"/><text x="466.5" y="553.5" fill="#fff" stroke="#fff" stroke-width=".25" font-size="9.5">17 Aug 2017</text><path d="M531.5 542V546" stroke="#fff" stroke-width="1"/><text x="530.5" y="553.5" fill="#fff" stroke="#fff" stroke-width=".25" font-size="9.5">29 Aug 2017</text><path d="M595.5 542V546" stroke="#fff" stroke-width="1"/><text x="594.5" y="553.5" fill="#fff" stroke="#fff" stroke-width=".25" font-size="9.5">8 Sep 2017</text><path d="M659.5 542V546" stroke="#fff" stroke-width="1"/><text x="658.5" y="553.5" fill="#fff" stroke="#fff" stroke-width=".25" font-size="9.5">20 Sep 2017</text><path d="M723.5 542V546" stroke="#fff" stroke-width="1"/><text x="722.5" y="553.5" fill="#fff" stroke="#fff" stroke-width=".25" font-size="9.5">2 Oct 2017</text></g><path d="M22 117h8l-4 4.500z" fill="#fff" shape-rendering="geometricPrecision"/><text x="34" y="121.5" fill="#fff" stroke="#fff" stroke-width=".25" font-size="9.5">EURUSD,Daily</text></svg></div></div>
</div>
<div id="tabs"><div class="line"></div><div class="at"><span>EURUSD,Daily</span></div>
<span style="left:122px">USDJPY,M30</span><i style="left:205px"></i>
<span style="left:216px">GBPUSD,Daily</span><i style="left:310px"></i>
<span style="left:323px">GBPJPY,M30</span><i style="left:406px"></i>
<span style="left:419px">EURJPY,M30</span><i style="left:502px"></i>
<span style="left:515px">EURGBP,M30</span><i style="left:601px"></i>
<span style="left:613px">GOLD,H1</span><i style="left:678px"></i>
<span style="left:688px">US30Cash,H1</span><i style="left:777px"></i>
<span style="left:789px">US500Cash,H1</span><i style="left:885px"></i>
<span style="left:897px">JP225Cash,M30</span><i style="left:997px"></i>
<span style="left:1010px">AUDUSD,M15</span><i style="left:1101px"></i>
<span style="left:1112px">EURUSD,M5</span><i style="left:1194px"></i>
<span style="left:1432px;font-size:8px;top:1px;color:#8a8a8a">&#9664;</span><span style="left:1451px;font-size:8px;top:1px;color:#8a8a8a">&#9654;</span>
</div>
<div id="bot">
<div class="vstrip" style="left:1px"><div class="x">&#215;</div><div class="vt">Navigator</div></div>
<div id="nav">
<svg style="left:6px;top:4px" width="16" height="16" viewBox="0 0 16 16"><rect x="0.5" y="1.500" width="10" height="9" rx="1" fill="#fff" stroke="#5b9bd5"/><rect x="1" y="2" width="9" height="2" fill="#5b9bd5"/><path d="M2 7h2l1-1.500 1 2.500 1-1h2" fill="none" stroke="#5b9bd5"/><rect x="4.500" y="6.500" width="10" height="8" rx="1" fill="#fff" stroke="#4a8ed0"/><path d="M6 10l1.500 3 1.500-3 1.500 3 1.500-2.500h1" fill="none" stroke="#4a8ed0"/></svg><div class="r" style="left:27px;top:3px">XM</div><div style="position:absolute;left:13px;top:21px;width:1px;height:112px;background:repeating-linear-gradient(#999 0,#999 1px,transparent 1px,transparent 2px)"></div><svg style="left:9px;top:27px" width="9" height="9" viewBox="0 0 9 9"><rect x="0.5" y="0.5" width="8" height="8" fill="#fff" stroke="#969696"/><path d="M2 4.500h5" stroke="#333"/></svg><div style="position:absolute;left:18px;top:31px;width:5px;height:1px;background:repeating-linear-gradient(90deg,#999 0,#999 1px,transparent 1px,transparent 2px)"></div><svg style="left:25px;top:23px" width="17" height="16" viewBox="0 0 17 16"><circle cx="5" cy="4" r="3" fill="#f0c040" stroke="#a07810"/><path d="M0 14c0-5 2-7 5-7s5 2 5 7z" fill="#38b038" stroke="#1a7a1a"/><circle cx="11" cy="5" r="3" fill="#f0c040" stroke="#a07810"/><path d="M6 15c0-5 2-7 5-7s5 2 5 7z" fill="#f0c040" stroke="#a07810"/></svg><div class="r" style="left:48px;top:23px">Accounts</div><svg style="left:30px;top:47px" width="9" height="9" viewBox="0 0 9 9"><rect x="0.5" y="0.5" width="8" height="8" fill="#fff" stroke="#969696"/><path d="M2 4.500h5" stroke="#333"/></svg><div style="position:absolute;left:39px;top:51px;width:5px;height:1px;background:repeating-linear-gradient(90deg,#999 0,#999 1px,transparent 1px,transparent 2px)"></div><div style="position:absolute;left:34px;top:56px;width:1px;height:16px;background:repeating-linear-gradient(#999 0,#999 1px,transparent 1px,transparent 2px)"></div><div style="position:absolute;left:34px;top:71px;width:32px;height:1px;background:repeating-linear-gradient(90deg,#999 0,#999 1px,transparent 1px,transparent 2px)"></div><svg style="left:48px;top:43px" width="13" height="16" viewBox="0 0 13 16"><path d="M1 2l4-1.500v15L1 14z" fill="#2a7ad0" stroke="#1a5aa8" stroke-width=".6"/><rect x="5" y="1" width="7" height="14" fill="#4a9ae8" stroke="#1a5aa8" stroke-width=".6"/><path d="M6.500 4h4M6.500 6.500h4" stroke="#fff"/></svg><div class="r" style="left:69px;top:43px">XMTrading-Demo 3</div><svg style="left:69px;top:63px" width="14" height="16" viewBox="0 0 14 16"><circle cx="7" cy="4.500" r="3.500" fill="#f0c040" stroke="#a07810"/><path d="M1 15c0-5 2-7 6-7s6 2 6 7z" fill="#38b038" stroke="#1a7a1a"/></svg><div class="r" style="left:90px;top:63px">23121236: ponsuke</div><svg style="left:9px;top:87px" width="9" height="9" viewBox="0 0 9 9"><rect x="0.5" y="0.5" width="8" height="8" fill="#fff" stroke="#969696"/><path d="M2 4.500h5" stroke="#333"/><path d="M4.500 2v5" stroke="#333"/></svg><div style="position:absolute;left:18px;top:91px;width:5px;height:1px;background:repeating-linear-gradient(90deg,#999 0,#999 1px,transparent 1px,transparent 2px)"></div><svg style="left:25px;top:83px" width="15" height="15" viewBox="0 0 15 15"><rect x="0.5" y="0.5" width="14" height="14" rx="2" fill="#f4d040" stroke="#b89010"/><text x="5" y="12" font-size="11" font-style="italic" font-weight="bold" fill="#8a5a00" font-family="Liberation Serif,serif">f</text></svg><div class="r" style="left:48px;top:83px">Indicators</div><svg style="left:9px;top:107px" width="9" height="9" viewBox="0 0 9 9"><rect x="0.5" y="0.5" width="8" height="8" fill="#fff" stroke="#969696"/><path d="M2 4.500h5" stroke="#333"/><path d="M4.500 2v5" stroke="#333"/></svg><div style="position:absolute;left:18px;top:111px;width:5px;height:1px;background:repeating-linear-gradient(90deg,#999 0,#999 1px,transparent 1px,transparent 2px)"></div><svg style="left:25px;top:103px" width="17" height="16" viewBox="0 0 17 16"><ellipse cx="8" cy="5" rx="8" ry="3.500" fill="#5aa0e0" stroke="#2a6ab0"/><ellipse cx="8" cy="3.500" rx="4" ry="3" fill="#8ac0f0" stroke="#2a6ab0" stroke-width=".6"/><path d="M3 8l3 4h5l3-4z" fill="#f4d050" stroke="#c09a20"/><path d="M11 10l4 3-3 3-3-3z" fill="#f0c030" stroke="#a07810"/></svg><div class="r" style="left:48px;top:103px">Expert Advisors</div><svg style="left:9px;top:127px" width="9" height="9" viewBox="0 0 9 9"><rect x="0.5" y="0.5" width="8" height="8" fill="#fff" stroke="#969696"/><path d="M2 4.500h5" stroke="#333"/><path d="M4.500 2v5" stroke="#333"/></svg><div style="position:absolute;left:18px;top:131px;width:5px;height:1px;background:repeating-linear-gradient(90deg,#999 0,#999 1px,transparent 1px,transparent 2px)"></div><svg style="left:25px;top:123px" width="17" height="16" viewBox="0 0 17 16"><path d="M2 1h10c2 0 2 3 0 3v8H4V4C4 2 1 2 2 1z" fill="#f8e070" stroke="#b89010"/><path d="M6 6h4M6 8.500h4" stroke="#b89010"/><path d="M11 10l4 3-3 3-3-3z" fill="#f0c030" stroke="#a07810"/></svg><div class="r" style="left:48px;top:123px">Scripts</div>
</div>
<div id="navtabs" class="btabs"><div class="ln" style="left:0;width:206px"></div><div class="at" style="left:2px;width:73px"><span style="left:10px">Common</span></div><span style="left:85px">Favorites</span><i style="left:149px"></i></div>
<div class="vstrip" style="left:225px;width:14px"><div class="x">&#215;</div><div class="vt">Terminal</div></div>
<div id="term">
<div class="hd"><span style="left:5px">Order</span><span style="left:50px;font-size:9px;color:#777">&#8725;</span><i style="left:97px"></i><span style="left:197px">Time</span><i style="left:232px"></i><span style="left:267px">Type</span><i style="left:301px"></i><span style="left:323px">Size</span><i style="left:354px"></i><span style="left:372px">Symbol</span><i style="left:424px"></i><span style="left:462px">Price</span><i style="left:497px"></i><span style="left:538px">S / L</span><i style="left:571px"></i><span style="left:613px">T / P</span><i style="left:647px"></i><span style="left:687px">Price</span><i style="left:721px"></i><span style="left:733px">Commis...</span><i style="left:796px"></i><span style="left:836px">Swap</span><i style="left:871px"></i><span style="left:950px">Profit</span><i style="left:984px"></i><span style="left:1157px">Comment</span></div>
<div class="row"><span style="left:5px;top:6px;width:9px;height:9px;border-radius:5px;border:1px solid #777;background:#d8d8d8;box-shadow:inset 0 0 0 2px #c8c8c8,inset 0 0 0 4px #999"></span><span style="left:21px">Balance: 91 638 JPY  Equity: 91 638  Free margin: 91 638</span><span style="left:975px">0</span></div>
</div>
<div id="termtabs" class="btabs"><div class="ln" style="left:0;width:1218px"></div><div class="at" style="left:2px;width:52px"><span style="left:8px">Trade</span></div>
<span style="left:65px">Exposure</span><i style="left:128px"></i><span style="left:138px">Account History</span><i style="left:240px"></i><span style="left:250px">News</span><i style="left:292px"></i><span style="left:302px">Alerts</span><i style="left:346px"></i><span style="left:356px">Mailbox<sub style="color:#e03020;font-size:10px;font-weight:bold;vertical-align:-3px;line-height:0">7</sub></span><i style="left:418px"></i><span style="left:428px">Market</span><i style="left:479px"></i><span style="left:489px">Signals</span><i style="left:540px"></i><span style="left:550px">Code Base</span><i style="left:621px"></i><span style="left:631px">Experts</span><i style="left:685px"></i><span style="left:695px">Journal</span><i style="left:747px"></i></div>
</div>
<div id="status"><span style="left:2px">For Help, press F1</span><i style="left:634px"></i><span style="left:640px">Default</span><i style="left:768px"></i><span style="left:775px">2017.09.28 00:00</span><i style="left:884px"></i><span style="left:893px">O: 1.17431</span><i style="left:970px"></i><span style="left:977px">H: 1.18033</span><i style="left:1053px"></i><span style="left:1061px">L: 1.17204</span><i style="left:1137px"></i><span style="left:1144px">C: 1.17844</span><i style="left:1220px"></i><span style="left:1227px">V: 121839</span><i style="left:1302px"></i><span style="left:1333px">341/1 kb</span>
<svg style="position:absolute;left:1308px;top:6px" width="20" height="12"><path d="M1 0v12M4 0v12M7 0v12M10 0v12" stroke="#6a7a1a" stroke-width="2"/><path d="M13 0v12M16 0v12M19 0v12" stroke="#c03020" stroke-width="2" stroke-dasharray="1 1"/></svg></div>
<div id="task"><div style="left:4px;top:-5px;width:38px;height:38px;border-radius:19px;background:radial-gradient(circle at 50% 35%,#d8e8f8 0,#8ab4e4 35%,#3a70b8 70%,#1a3f80 100%);border:1px solid #c8dcf4;box-shadow:0 0 3px #cfe2f8"></div><div style="left:16px;top:5px;width:7px;height:9px;background:#e8602a;transform:skewX(-10deg);border-radius:2px 0 0 0"></div><div style="left:25px;top:6px;width:7px;height:9px;background:#88c040;transform:skewX(-10deg);border-radius:0 2px 0 0"></div><div style="left:70px;top:5px;width:18px;height:8px;background:#f0d878;border-radius:1px"></div><div style="left:118px;top:4px;width:14px;height:10px;border-radius:7px 7px 0 0;background:#3a8ae0;border:1px solid #f0c040"></div><div style="left:164px;top:3px;width:14px;height:10px;border-radius:7px 7px 0 0;border:2px solid #e8b030;background:#5ab0f0"></div><div style="left:209px;top:5px;width:12px;height:8px;border-radius:6px 6px 0 0;background:#a0a8b8"></div><div style="left:253px;top:5px;width:14px;height:8px;border-radius:7px 7px 0 0;background:#e03828"></div><div style="left:284px;top:1px;width:44px;height:12px;border:1px solid #a8c4e8;border-radius:3px 3px 0 0;background:linear-gradient(#7fa4d4,#5a86c0)"></div><div style="left:298px;top:6px;width:14px;height:8px;background:#e8f0fa;border-top:2px solid #3a7ad0"></div><div style="left:330px;top:1px;width:44px;height:12px;border:1px solid #a8c4e8;border-radius:3px 3px 0 0;background:linear-gradient(#7fa4d4,#5a86c0)"></div><div style="left:344px;top:5px;width:16px;height:8px;background:#181818;border-radius:2px 2px 0 0"></div><div style="left:1146px;top:5px;width:12px;height:8px;border-radius:6px 6px 0 0;background:#e02818"></div><div style="left:1176px;top:5px;width:4px;height:8px;background:#d8e0ea;transform:skewX(-15deg)"></div><div style="left:1190px;top:4px;width:14px;height:8px;background:#4a86d0;border-radius:3px"></div><div style="left:1194px;top:6px;width:6px;height:6px;background:#f0c040"></div><div style="left:1210px;top:5px;width:14px;height:8px;background:#e8b860;border-radius:2px"></div><div style="left:1230px;top:4px;width:14px;height:10px;border-radius:7px 7px 0 0;background:#2a5ad0;border:1px solid #c8d8f0"></div><div style="left:1250px;top:0px;font-size:6.500px;line-height:8px;color:#fff;font-weight:bold;letter-spacing:.5px">CAPS</div><div style="left:1273px;top:2px;width:6px;height:4px;border:1px solid #fff"></div><div style="left:1276px;top:0px;width:6px;height:4px;border:1px solid #fff"></div><div style="left:1318px;top:7px;width:8px;height:6px;border:1px solid #e8eef8;border-bottom:none"></div><div style="left:1345px;top:6px;width:12px;height:6px;border:1px solid #e8eef8;border-bottom:none"></div><div style="left:1370px;top:6px;width:10px;height:6px;background:#e8eef8"></div><div style="left:1395px;top:8px;width:5px;height:4px;background:#e8eef8"></div><div style="left:1424px;top:8px;font-size:11px;line-height:12px;color:#fff">15:23</div></div>

</body></html>
